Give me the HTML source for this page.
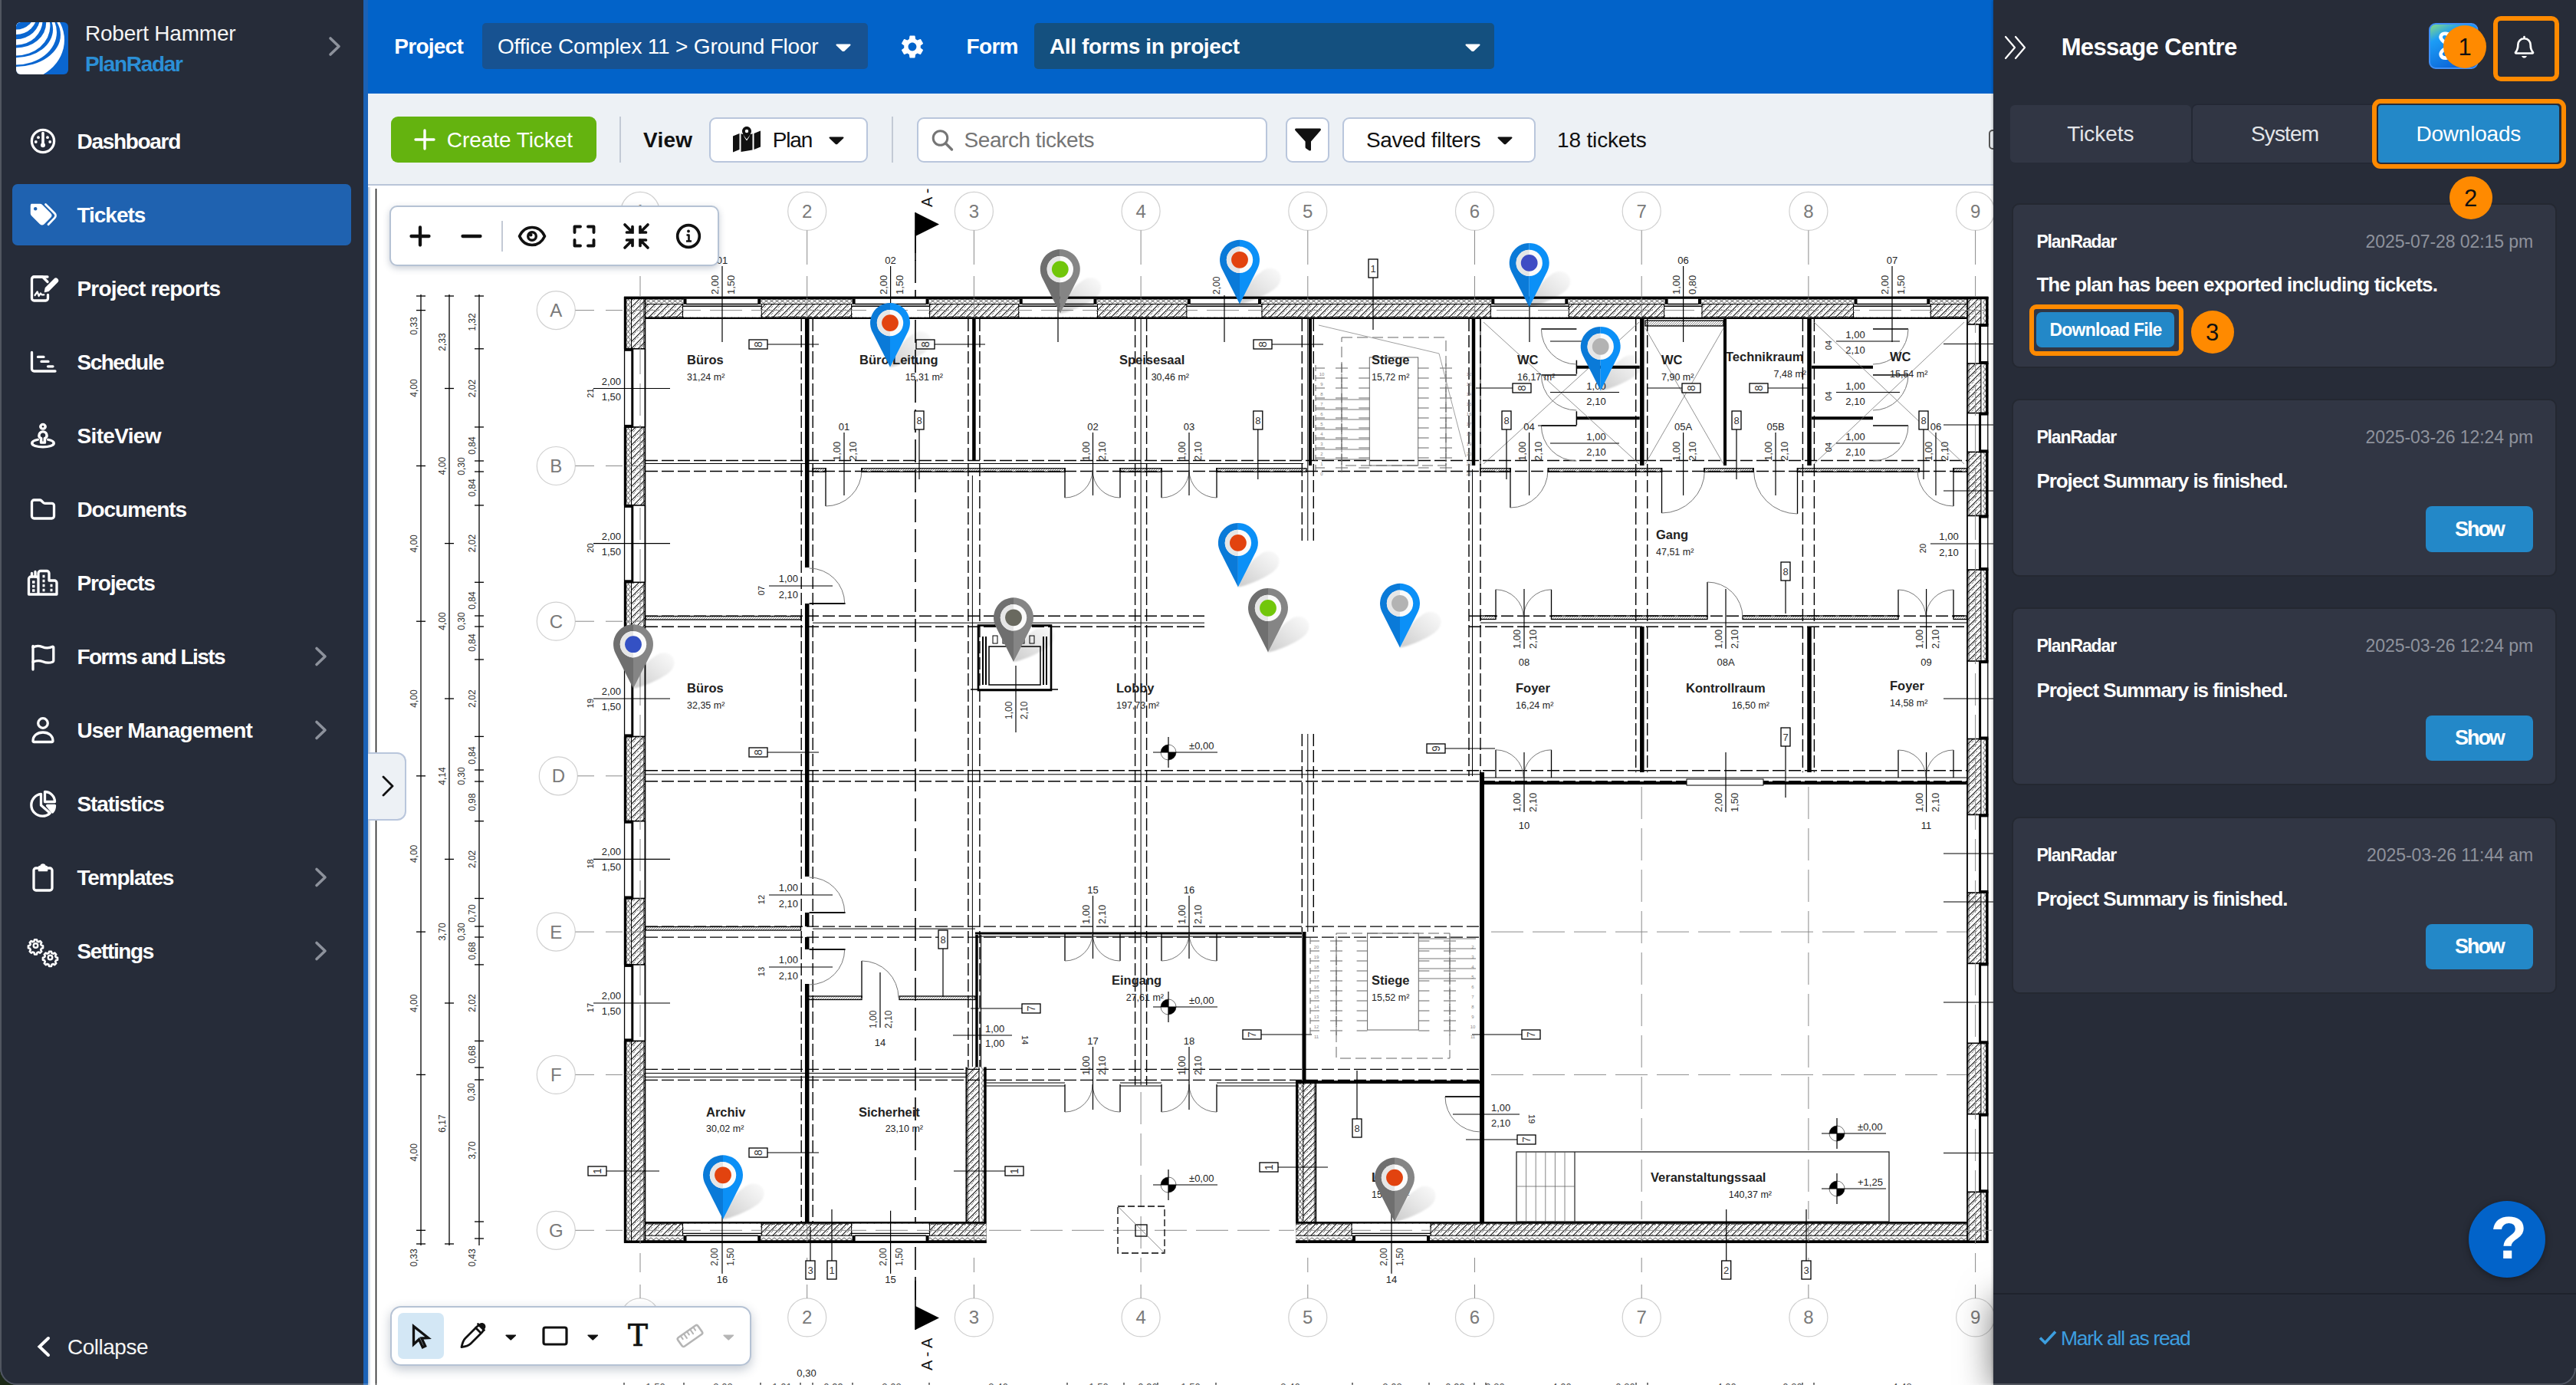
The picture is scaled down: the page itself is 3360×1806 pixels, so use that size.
<!DOCTYPE html><html><head><meta charset="utf-8"><title>PlanRadar</title><style>
html,body{margin:0;padding:0}
body{width:3360px;height:1806px;overflow:hidden;position:relative;background:#fff;font-family:"Liberation Sans",Arial,sans-serif}
.a{position:absolute;box-sizing:border-box}
.t{position:absolute;white-space:nowrap;font-family:"Liberation Sans",Arial,sans-serif}
#sb{position:absolute;left:0;top:0;width:474px;height:1806px;background:#262c39}
#sbstrip{position:absolute;left:474px;top:0;width:6px;height:1806px;background:#1b62b6}
#pn{position:absolute;left:2600px;top:0;width:760px;height:1806px;background:#272c38;box-shadow:-1px 0 3px rgba(0,0,0,.25)}
.box{background:#fff;border:2px solid #b9c6dc;border-radius:9px}
.card{background:#313644;border:2px solid #242831;border-radius:10px}
.oc{width:56px;height:56px;border-radius:50%;background:#ff8a00;color:#111;font-size:31px;line-height:57px;text-align:center}
.tb{background:#fff;border:2px solid #b5c2d4;border-radius:10px;box-shadow:0 3px 8px rgba(40,60,90,.25)}
</style></head><body>
<svg class="a" style="left:480px;top:244px" width="2120" height="1562" viewBox="480 244 2120 1562"><defs>
<pattern id="hz" width="9" height="9" patternUnits="userSpaceOnUse"><path d="M-1 10L10 -1M-1 1L1 -1M8 10L10 8" stroke="#111" stroke-width="1.100"/><path d="M2.200 10L10 2.200M-1 3.200L3.200 -1" stroke="#444" stroke-width="0.850" stroke-dasharray="4 2.364"/></pattern>
<pattern id="th" width="3" height="3" patternUnits="userSpaceOnUse"><path d="M0 3L3 0" stroke="#555" stroke-width="0.700"/></pattern>
<filter id="bl" x="-50%" y="-50%" width="200%" height="200%"><feGaussianBlur stdDeviation="1.300"/></filter>
<linearGradient id="shg" x1="0" y1="1" x2="1" y2="0"><stop offset="0" stop-color="#000" stop-opacity="0.200"/><stop offset="0.550" stop-color="#000" stop-opacity="0.090"/><stop offset="1" stop-color="#000" stop-opacity="0.015"/></linearGradient>
</defs>
<rect x="480" y="244" width="2120" height="1562" fill="#fff"/>
<g font-family="'Liberation Sans',Arial,sans-serif" fill="none">
<circle cx="835.0" cy="275.4" r="25" fill="#fff" stroke="#d0d0d0" stroke-width="1.200"/>
<text x="835.0" y="283.9" font-size="24" text-anchor="middle" fill="#7a7a7a">1</text>
<circle cx="835.0" cy="1717.9" r="25" fill="#fff" stroke="#d0d0d0" stroke-width="1.200"/>
<text x="835.0" y="1726.4" font-size="24" text-anchor="middle" fill="#7a7a7a">1</text>
<path d="M835.0 300.5L835.0 345.0" stroke="#8a8a8a" stroke-width="1"/>
<path d="M835.0 360.0L835.0 386.0" stroke="#8a8a8a" stroke-width="1"/>
<path d="M835.0 1640.0L835.0 1659.0" stroke="#8a8a8a" stroke-width="1"/>
<path d="M835.0 1675.0L835.0 1693.0" stroke="#8a8a8a" stroke-width="1"/>
<circle cx="1052.7" cy="275.4" r="25" fill="#fff" stroke="#d0d0d0" stroke-width="1.200"/>
<text x="1052.7" y="283.9" font-size="24" text-anchor="middle" fill="#7a7a7a">2</text>
<circle cx="1052.7" cy="1717.9" r="25" fill="#fff" stroke="#d0d0d0" stroke-width="1.200"/>
<text x="1052.7" y="1726.4" font-size="24" text-anchor="middle" fill="#7a7a7a">2</text>
<path d="M1052.7 300.5L1052.7 345.0" stroke="#8a8a8a" stroke-width="1"/>
<path d="M1052.7 360.0L1052.7 386.0" stroke="#8a8a8a" stroke-width="1"/>
<path d="M1052.7 1640.0L1052.7 1659.0" stroke="#8a8a8a" stroke-width="1"/>
<path d="M1052.7 1675.0L1052.7 1693.0" stroke="#8a8a8a" stroke-width="1"/>
<circle cx="1270.4" cy="275.4" r="25" fill="#fff" stroke="#d0d0d0" stroke-width="1.200"/>
<text x="1270.4" y="283.9" font-size="24" text-anchor="middle" fill="#7a7a7a">3</text>
<circle cx="1270.4" cy="1717.9" r="25" fill="#fff" stroke="#d0d0d0" stroke-width="1.200"/>
<text x="1270.4" y="1726.4" font-size="24" text-anchor="middle" fill="#7a7a7a">3</text>
<path d="M1270.4 300.5L1270.4 345.0" stroke="#8a8a8a" stroke-width="1"/>
<path d="M1270.4 360.0L1270.4 386.0" stroke="#8a8a8a" stroke-width="1"/>
<path d="M1270.4 1640.0L1270.4 1659.0" stroke="#8a8a8a" stroke-width="1"/>
<path d="M1270.4 1675.0L1270.4 1693.0" stroke="#8a8a8a" stroke-width="1"/>
<circle cx="1488.1" cy="275.4" r="25" fill="#fff" stroke="#d0d0d0" stroke-width="1.200"/>
<text x="1488.1" y="283.9" font-size="24" text-anchor="middle" fill="#7a7a7a">4</text>
<circle cx="1488.1" cy="1717.9" r="25" fill="#fff" stroke="#d0d0d0" stroke-width="1.200"/>
<text x="1488.1" y="1726.4" font-size="24" text-anchor="middle" fill="#7a7a7a">4</text>
<path d="M1488.1 300.5L1488.1 345.0" stroke="#8a8a8a" stroke-width="1"/>
<path d="M1488.1 360.0L1488.1 386.0" stroke="#8a8a8a" stroke-width="1"/>
<path d="M1488.1 1640.0L1488.1 1659.0" stroke="#8a8a8a" stroke-width="1"/>
<path d="M1488.1 1675.0L1488.1 1693.0" stroke="#8a8a8a" stroke-width="1"/>
<circle cx="1705.8" cy="275.4" r="25" fill="#fff" stroke="#d0d0d0" stroke-width="1.200"/>
<text x="1705.8" y="283.9" font-size="24" text-anchor="middle" fill="#7a7a7a">5</text>
<circle cx="1705.8" cy="1717.9" r="25" fill="#fff" stroke="#d0d0d0" stroke-width="1.200"/>
<text x="1705.8" y="1726.4" font-size="24" text-anchor="middle" fill="#7a7a7a">5</text>
<path d="M1705.8 300.5L1705.8 345.0" stroke="#8a8a8a" stroke-width="1"/>
<path d="M1705.8 360.0L1705.8 386.0" stroke="#8a8a8a" stroke-width="1"/>
<path d="M1705.8 1640.0L1705.8 1659.0" stroke="#8a8a8a" stroke-width="1"/>
<path d="M1705.8 1675.0L1705.8 1693.0" stroke="#8a8a8a" stroke-width="1"/>
<circle cx="1923.5" cy="275.4" r="25" fill="#fff" stroke="#d0d0d0" stroke-width="1.200"/>
<text x="1923.5" y="283.9" font-size="24" text-anchor="middle" fill="#7a7a7a">6</text>
<circle cx="1923.5" cy="1717.9" r="25" fill="#fff" stroke="#d0d0d0" stroke-width="1.200"/>
<text x="1923.5" y="1726.4" font-size="24" text-anchor="middle" fill="#7a7a7a">6</text>
<path d="M1923.5 300.5L1923.5 345.0" stroke="#8a8a8a" stroke-width="1"/>
<path d="M1923.5 360.0L1923.5 386.0" stroke="#8a8a8a" stroke-width="1"/>
<path d="M1923.5 1640.0L1923.5 1659.0" stroke="#8a8a8a" stroke-width="1"/>
<path d="M1923.5 1675.0L1923.5 1693.0" stroke="#8a8a8a" stroke-width="1"/>
<circle cx="2141.2" cy="275.4" r="25" fill="#fff" stroke="#d0d0d0" stroke-width="1.200"/>
<text x="2141.2" y="283.9" font-size="24" text-anchor="middle" fill="#7a7a7a">7</text>
<circle cx="2141.2" cy="1717.9" r="25" fill="#fff" stroke="#d0d0d0" stroke-width="1.200"/>
<text x="2141.2" y="1726.4" font-size="24" text-anchor="middle" fill="#7a7a7a">7</text>
<path d="M2141.2 300.5L2141.2 345.0" stroke="#8a8a8a" stroke-width="1"/>
<path d="M2141.2 360.0L2141.2 386.0" stroke="#8a8a8a" stroke-width="1"/>
<path d="M2141.2 1640.0L2141.2 1659.0" stroke="#8a8a8a" stroke-width="1"/>
<path d="M2141.2 1675.0L2141.2 1693.0" stroke="#8a8a8a" stroke-width="1"/>
<circle cx="2358.9" cy="275.4" r="25" fill="#fff" stroke="#d0d0d0" stroke-width="1.200"/>
<text x="2358.9" y="283.9" font-size="24" text-anchor="middle" fill="#7a7a7a">8</text>
<circle cx="2358.9" cy="1717.9" r="25" fill="#fff" stroke="#d0d0d0" stroke-width="1.200"/>
<text x="2358.9" y="1726.4" font-size="24" text-anchor="middle" fill="#7a7a7a">8</text>
<path d="M2358.9 300.5L2358.9 345.0" stroke="#8a8a8a" stroke-width="1"/>
<path d="M2358.9 360.0L2358.9 386.0" stroke="#8a8a8a" stroke-width="1"/>
<path d="M2358.9 1640.0L2358.9 1659.0" stroke="#8a8a8a" stroke-width="1"/>
<path d="M2358.9 1675.0L2358.9 1693.0" stroke="#8a8a8a" stroke-width="1"/>
<circle cx="2576.6" cy="275.4" r="25" fill="#fff" stroke="#d0d0d0" stroke-width="1.200"/>
<text x="2576.6" y="283.9" font-size="24" text-anchor="middle" fill="#7a7a7a">9</text>
<circle cx="2576.6" cy="1717.9" r="25" fill="#fff" stroke="#d0d0d0" stroke-width="1.200"/>
<text x="2576.6" y="1726.4" font-size="24" text-anchor="middle" fill="#7a7a7a">9</text>
<path d="M2576.6 300.5L2576.6 345.0" stroke="#8a8a8a" stroke-width="1"/>
<path d="M2576.6 360.0L2576.6 386.0" stroke="#8a8a8a" stroke-width="1"/>
<path d="M2576.6 1640.0L2576.6 1659.0" stroke="#8a8a8a" stroke-width="1"/>
<path d="M2576.6 1675.0L2576.6 1693.0" stroke="#8a8a8a" stroke-width="1"/>
<circle cx="725.3" cy="404.6" r="25" fill="#fff" stroke="#d0d0d0" stroke-width="1.200"/>
<text x="725.3" y="413.1" font-size="24" text-anchor="middle" fill="#7a7a7a">A</text>
<path d="M750.5 404.6L775.0 404.6" stroke="#8a8a8a" stroke-width="1"/>
<path d="M790.0 404.6L812.0 404.6" stroke="#8a8a8a" stroke-width="1"/>
<circle cx="725.3" cy="607.5" r="25" fill="#fff" stroke="#d0d0d0" stroke-width="1.200"/>
<text x="725.3" y="616.0" font-size="24" text-anchor="middle" fill="#7a7a7a">B</text>
<path d="M750.5 607.5L775.0 607.5" stroke="#8a8a8a" stroke-width="1"/>
<path d="M790.0 607.5L812.0 607.5" stroke="#8a8a8a" stroke-width="1"/>
<circle cx="725.3" cy="810.2" r="25" fill="#fff" stroke="#d0d0d0" stroke-width="1.200"/>
<text x="725.3" y="818.7" font-size="24" text-anchor="middle" fill="#7a7a7a">C</text>
<path d="M750.5 810.2L775.0 810.2" stroke="#8a8a8a" stroke-width="1"/>
<path d="M790.0 810.2L812.0 810.2" stroke="#8a8a8a" stroke-width="1"/>
<circle cx="728.3" cy="1011.8" r="25" fill="#fff" stroke="#d0d0d0" stroke-width="1.200"/>
<text x="728.3" y="1020.3" font-size="24" text-anchor="middle" fill="#7a7a7a">D</text>
<path d="M753.5 1011.8L775.0 1011.8" stroke="#8a8a8a" stroke-width="1"/>
<path d="M790.0 1011.8L812.0 1011.8" stroke="#8a8a8a" stroke-width="1"/>
<circle cx="725.3" cy="1215.1" r="25" fill="#fff" stroke="#d0d0d0" stroke-width="1.200"/>
<text x="725.3" y="1223.6" font-size="24" text-anchor="middle" fill="#7a7a7a">E</text>
<path d="M750.5 1215.1L775.0 1215.1" stroke="#8a8a8a" stroke-width="1"/>
<path d="M790.0 1215.1L812.0 1215.1" stroke="#8a8a8a" stroke-width="1"/>
<circle cx="725.3" cy="1401.4" r="25" fill="#fff" stroke="#d0d0d0" stroke-width="1.200"/>
<text x="725.3" y="1409.9" font-size="24" text-anchor="middle" fill="#7a7a7a">F</text>
<path d="M750.5 1401.4L775.0 1401.4" stroke="#8a8a8a" stroke-width="1"/>
<path d="M790.0 1401.4L812.0 1401.4" stroke="#8a8a8a" stroke-width="1"/>
<circle cx="725.3" cy="1604.3" r="25" fill="#fff" stroke="#d0d0d0" stroke-width="1.200"/>
<text x="725.3" y="1612.8" font-size="24" text-anchor="middle" fill="#7a7a7a">G</text>
<path d="M750.5 1604.3L775.0 1604.3" stroke="#8a8a8a" stroke-width="1"/>
<path d="M790.0 1604.3L812.0 1604.3" stroke="#8a8a8a" stroke-width="1"/>
<path d="M1488.1 1424.0L1488.1 1640.0" stroke="#8a8a8a" stroke-width="1" stroke-dasharray="42 12"/>
<path d="M2141.2 1026.0L2141.2 1590.0" stroke="#8a8a8a" stroke-width="1" stroke-dasharray="42 12"/>
<path d="M2358.9 1026.0L2358.9 1590.0" stroke="#8a8a8a" stroke-width="1" stroke-dasharray="42 12"/>
<path d="M1945.0 1215.1L2565.4 1215.1" stroke="#8a8a8a" stroke-width="1" stroke-dasharray="42 12"/>
<path d="M1945.0 1401.4L2565.4 1401.4" stroke="#8a8a8a" stroke-width="1" stroke-dasharray="42 12"/>
<path d="M1290.0 1604.3L1688.0 1604.3" stroke="#8a8a8a" stroke-width="1" stroke-dasharray="42 12"/>
<path d="M1194.0 300.0L1194.0 1700.0" stroke="#000" stroke-width="1.6" stroke-dasharray="30 9"/>
<path d="M1194 277L1225 292.500L1194 308Z" fill="#000"/>
<path d="M1194.0 277.0L1194.0 340.0" stroke="#000" stroke-width="1.6"/>
<path d="M1194 1703L1225 1718.500L1194 1734Z" fill="#000"/>
<path d="M1194.0 1670.0L1194.0 1734.0" stroke="#000" stroke-width="1.6"/>
<text x="1216.0" y="270.0" font-size="20" text-anchor="start" fill="#111" transform="rotate(-90 1216.0 270.0)">A - A</text>
<text x="1216.0" y="1787.0" font-size="20" text-anchor="start" fill="#111" transform="rotate(-90 1216.0 1787.0)">A - A</text>
<rect x="1259.8" y="1391.5" width="26.7" height="229.2" fill="#fff"/>
<rect x="1259.8" y="1391.5" width="17.2" height="229.2" fill="url(#hz)"/>
<pattern id="xv118" x="1277.0" y="1391.5" width="9.500" height="14" patternUnits="userSpaceOnUse"><path d="M8.300 0L2.700 7L8.300 14M2.700 0L8.300 7L2.700 14" fill="none" stroke="#3a3a3a" stroke-width="0.900"/></pattern>
<rect x="1277.0" y="1391.5" width="9.5" height="229.2" fill="url(#xv118)"/>
<path d="M1285.0 1391.5L1285.0 1620.7" stroke="#000" stroke-width="3.4"/>
<path d="M1277.0 1391.5L1277.0 1620.7" stroke="#000" stroke-width="1.1"/>
<path d="M1262.4 1391.5L1262.4 1620.7" stroke="#333" stroke-width="0.8"/>
<path d="M1260.4 1391.5L1260.4 1620.7" stroke="#000" stroke-width="1.8"/>
<rect x="1690.2" y="1409.0" width="26.7" height="211.7" fill="#fff"/>
<rect x="1699.7" y="1409.0" width="17.2" height="211.7" fill="url(#hz)"/>
<pattern id="xv126" x="1690.2" y="1409.0" width="9.500" height="14" patternUnits="userSpaceOnUse"><path d="M8.300 0L2.700 7L8.300 14M2.700 0L8.300 7L2.700 14" fill="none" stroke="#3a3a3a" stroke-width="0.900"/></pattern>
<rect x="1690.2" y="1409.0" width="9.5" height="211.7" fill="url(#xv126)"/>
<path d="M1691.7 1409.0L1691.7 1620.7" stroke="#000" stroke-width="3.4"/>
<path d="M1699.7 1409.0L1699.7 1620.7" stroke="#000" stroke-width="1.1"/>
<path d="M1714.3 1409.0L1714.3 1620.7" stroke="#333" stroke-width="0.8"/>
<path d="M1716.3 1409.0L1716.3 1620.7" stroke="#000" stroke-width="1.8"/>
<rect x="814.0" y="387.0" width="1779.4" height="29.0" fill="#fff"/>
<rect x="814.0" y="396.5" width="1779.4" height="19.5" fill="url(#hz)"/>
<pattern id="xh134" x="814.0" y="387.0" width="14" height="9.500" patternUnits="userSpaceOnUse"><path d="M0 8.300L7 2.700L14 8.300M0 2.700L7 8.300L14 2.700" fill="none" stroke="#3a3a3a" stroke-width="0.900"/></pattern>
<rect x="814.0" y="387.0" width="1779.4" height="9.5" fill="url(#xh134)"/>
<path d="M814.0 388.5L2593.4 388.5" stroke="#000" stroke-width="3.4"/>
<path d="M814.0 396.5L2593.4 396.5" stroke="#000" stroke-width="1.1"/>
<path d="M814.0 412.8L2593.4 412.8" stroke="#333" stroke-width="0.8" stroke-dasharray="5 3"/>
<path d="M814.0 414.8L2593.4 414.8" stroke="#000" stroke-width="2.6"/>
<rect x="814.0" y="1593.2" width="472.5" height="27.5" fill="#fff"/>
<rect x="814.0" y="1593.2" width="472.5" height="18.0" fill="url(#hz)"/>
<pattern id="xh142" x="814.0" y="1611.2" width="14" height="9.500" patternUnits="userSpaceOnUse"><path d="M0 8.300L7 2.700L14 8.300M0 2.700L7 8.300L14 2.700" fill="none" stroke="#3a3a3a" stroke-width="0.900"/></pattern>
<rect x="814.0" y="1611.2" width="472.5" height="9.5" fill="url(#xh142)"/>
<path d="M814.0 1619.2L1286.5 1619.2" stroke="#000" stroke-width="3.4"/>
<path d="M814.0 1611.2L1286.5 1611.2" stroke="#000" stroke-width="1.1"/>
<path d="M814.0 1596.4L1286.5 1596.4" stroke="#333" stroke-width="0.8" stroke-dasharray="5 3"/>
<path d="M814.0 1594.4L1286.5 1594.4" stroke="#000" stroke-width="2.6"/>
<rect x="1690.2" y="1593.2" width="903.2" height="27.5" fill="#fff"/>
<rect x="1690.2" y="1593.2" width="903.2" height="18.0" fill="url(#hz)"/>
<pattern id="xh150" x="1690.2" y="1611.2" width="14" height="9.500" patternUnits="userSpaceOnUse"><path d="M0 8.300L7 2.700L14 8.300M0 2.700L7 8.300L14 2.700" fill="none" stroke="#3a3a3a" stroke-width="0.900"/></pattern>
<rect x="1690.2" y="1611.2" width="903.2" height="9.5" fill="url(#xh150)"/>
<path d="M1690.2 1619.2L2593.4 1619.2" stroke="#000" stroke-width="3.4"/>
<path d="M1690.2 1611.2L2593.4 1611.2" stroke="#000" stroke-width="1.1"/>
<path d="M1690.2 1596.4L2593.4 1596.4" stroke="#333" stroke-width="0.8" stroke-dasharray="5 3"/>
<path d="M1690.2 1594.4L2593.4 1594.4" stroke="#000" stroke-width="2.6"/>
<rect x="814.0" y="387.0" width="28.0" height="1233.7" fill="#fff"/>
<rect x="823.5" y="387.0" width="18.5" height="1233.7" fill="url(#hz)"/>
<pattern id="xv158" x="814.0" y="387.0" width="9.500" height="14" patternUnits="userSpaceOnUse"><path d="M8.300 0L2.700 7L8.300 14M2.700 0L8.300 7L2.700 14" fill="none" stroke="#3a3a3a" stroke-width="0.900"/></pattern>
<rect x="814.0" y="387.0" width="9.5" height="1233.7" fill="url(#xv158)"/>
<path d="M815.5 387.0L815.5 1620.7" stroke="#000" stroke-width="3.4"/>
<path d="M823.5 387.0L823.5 1620.7" stroke="#000" stroke-width="1.1"/>
<path d="M839.4 387.0L839.4 1620.7" stroke="#333" stroke-width="0.8"/>
<path d="M841.4 387.0L841.4 1620.7" stroke="#000" stroke-width="1.8"/>
<rect x="2565.4" y="387.0" width="28.0" height="1233.7" fill="#fff"/>
<rect x="2565.4" y="387.0" width="18.5" height="1233.7" fill="url(#hz)"/>
<pattern id="xv166" x="2583.9" y="387.0" width="9.500" height="14" patternUnits="userSpaceOnUse"><path d="M8.300 0L2.700 7L8.300 14M2.700 0L8.300 7L2.700 14" fill="none" stroke="#3a3a3a" stroke-width="0.900"/></pattern>
<rect x="2583.9" y="387.0" width="9.5" height="1233.7" fill="url(#xv166)"/>
<path d="M2591.9 387.0L2591.9 1620.7" stroke="#000" stroke-width="3.4"/>
<path d="M2583.9 387.0L2583.9 1620.7" stroke="#000" stroke-width="1.1"/>
<path d="M2568.0 387.0L2568.0 1620.7" stroke="#333" stroke-width="0.8"/>
<path d="M2566.0 387.0L2566.0 1620.7" stroke="#000" stroke-width="1.8"/>
<path d="M814.0 1619.2L1286.5 1619.2" stroke="#000" stroke-width="3.4"/>
<path d="M1690.2 1619.2L2593.4 1619.2" stroke="#000" stroke-width="3.4"/>
<path d="M814.0 388.5L2593.4 388.5" stroke="#000" stroke-width="3.4"/>
<rect x="891.5" y="389.8" width="100.8" height="23.7" fill="#fff"/>
<path d="M895.0 396.4L988.8 396.4" stroke="#000" stroke-width="1.5"/>
<path d="M890.5 399.3L993.3 399.3" stroke="#000" stroke-width="1.4"/>
<path d="M890.5 396.5L890.5 414.0" stroke="#000" stroke-width="1"/>
<path d="M993.3 396.5L993.3 414.0" stroke="#000" stroke-width="1"/>
<rect x="891.5" y="389.5" width="4" height="7.3" fill="#000"/>
<rect x="988.3" y="389.5" width="4" height="7.3" fill="#000"/>
<rect x="1111.6" y="389.8" width="100.0" height="23.7" fill="#fff"/>
<path d="M1115.1 396.4L1208.1 396.4" stroke="#000" stroke-width="1.5"/>
<path d="M1110.6 399.3L1212.6 399.3" stroke="#000" stroke-width="1.4"/>
<path d="M1110.6 396.5L1110.6 414.0" stroke="#000" stroke-width="1"/>
<path d="M1212.6 396.5L1212.6 414.0" stroke="#000" stroke-width="1"/>
<rect x="1111.6" y="389.5" width="4" height="7.3" fill="#000"/>
<rect x="1207.6" y="389.5" width="4" height="7.3" fill="#000"/>
<rect x="1329.7" y="389.8" width="100.8" height="23.7" fill="#fff"/>
<path d="M1333.2 396.4L1427.0 396.4" stroke="#000" stroke-width="1.5"/>
<path d="M1328.7 399.3L1431.5 399.3" stroke="#000" stroke-width="1.4"/>
<path d="M1328.7 396.5L1328.7 414.0" stroke="#000" stroke-width="1"/>
<path d="M1431.5 396.5L1431.5 414.0" stroke="#000" stroke-width="1"/>
<rect x="1329.7" y="389.5" width="4" height="7.3" fill="#000"/>
<rect x="1426.5" y="389.5" width="4" height="7.3" fill="#000"/>
<rect x="1548.8" y="389.8" width="96.2" height="23.7" fill="#fff"/>
<path d="M1552.3 396.4L1641.5 396.4" stroke="#000" stroke-width="1.5"/>
<path d="M1547.8 399.3L1646.0 399.3" stroke="#000" stroke-width="1.4"/>
<path d="M1547.8 396.5L1547.8 414.0" stroke="#000" stroke-width="1"/>
<path d="M1646.0 396.5L1646.0 414.0" stroke="#000" stroke-width="1"/>
<rect x="1548.8" y="389.5" width="4" height="7.3" fill="#000"/>
<rect x="1641.0" y="389.5" width="4" height="7.3" fill="#000"/>
<rect x="1945.3" y="389.8" width="100.0" height="23.7" fill="#fff"/>
<path d="M1948.8 396.4L2041.8 396.4" stroke="#000" stroke-width="1.5"/>
<path d="M1944.3 399.3L2046.3 399.3" stroke="#000" stroke-width="1.4"/>
<path d="M1944.3 396.5L1944.3 414.0" stroke="#000" stroke-width="1"/>
<path d="M2046.3 396.5L2046.3 414.0" stroke="#000" stroke-width="1"/>
<rect x="1945.3" y="389.5" width="4" height="7.3" fill="#000"/>
<rect x="2041.3" y="389.5" width="4" height="7.3" fill="#000"/>
<rect x="2171.6" y="389.8" width="47.4" height="23.7" fill="#fff"/>
<path d="M2175.1 396.4L2215.5 396.4" stroke="#000" stroke-width="1.5"/>
<path d="M2170.6 399.3L2220.0 399.3" stroke="#000" stroke-width="1.4"/>
<path d="M2170.6 396.5L2170.6 414.0" stroke="#000" stroke-width="1"/>
<path d="M2220.0 396.5L2220.0 414.0" stroke="#000" stroke-width="1"/>
<rect x="2171.6" y="389.5" width="4" height="7.3" fill="#000"/>
<rect x="2215.0" y="389.5" width="4" height="7.3" fill="#000"/>
<rect x="2418.5" y="389.8" width="98.8" height="23.7" fill="#fff"/>
<path d="M2422.0 396.4L2513.8 396.4" stroke="#000" stroke-width="1.5"/>
<path d="M2417.5 399.3L2518.3 399.3" stroke="#000" stroke-width="1.4"/>
<path d="M2417.5 396.5L2417.5 414.0" stroke="#000" stroke-width="1"/>
<path d="M2518.3 396.5L2518.3 414.0" stroke="#000" stroke-width="1"/>
<rect x="2418.5" y="389.5" width="4" height="7.3" fill="#000"/>
<rect x="2513.3" y="389.5" width="4" height="7.3" fill="#000"/>
<rect x="813.5" y="454.8" width="29.0" height="102.1" fill="#fff"/>
<path d="M814.6 454.8L814.6 556.9" stroke="#000" stroke-width="1.2"/>
<path d="M824.8 453.8L824.8 557.9" stroke="#000" stroke-width="3"/>
<path d="M841.4 454.8L841.4 556.9" stroke="#000" stroke-width="1.8"/>
<path d="M814.0 454.8L842.0 454.8" stroke="#000" stroke-width="1.6"/>
<path d="M814.0 556.9L842.0 556.9" stroke="#000" stroke-width="1.6"/>
<rect x="814.0" y="453.8" width="10.8" height="4" fill="#000"/>
<rect x="814.0" y="553.9" width="10.8" height="4" fill="#000"/>
<rect x="813.5" y="658.9" width="29.0" height="100.4" fill="#fff"/>
<path d="M814.6 658.9L814.6 759.3" stroke="#000" stroke-width="1.2"/>
<path d="M824.8 657.9L824.8 760.3" stroke="#000" stroke-width="3"/>
<path d="M841.4 658.9L841.4 759.3" stroke="#000" stroke-width="1.8"/>
<path d="M814.0 658.9L842.0 658.9" stroke="#000" stroke-width="1.6"/>
<path d="M814.0 759.3L842.0 759.3" stroke="#000" stroke-width="1.6"/>
<rect x="814.0" y="657.9" width="10.8" height="4" fill="#000"/>
<rect x="814.0" y="756.3" width="10.8" height="4" fill="#000"/>
<rect x="813.5" y="860.0" width="29.0" height="100.4" fill="#fff"/>
<path d="M814.6 860.0L814.6 960.4" stroke="#000" stroke-width="1.2"/>
<path d="M824.8 859.0L824.8 961.4" stroke="#000" stroke-width="3"/>
<path d="M841.4 860.0L841.4 960.4" stroke="#000" stroke-width="1.8"/>
<path d="M814.0 860.0L842.0 860.0" stroke="#000" stroke-width="1.6"/>
<path d="M814.0 960.4L842.0 960.4" stroke="#000" stroke-width="1.6"/>
<rect x="814.0" y="859.0" width="10.8" height="4" fill="#000"/>
<rect x="814.0" y="957.4" width="10.8" height="4" fill="#000"/>
<rect x="813.5" y="1070.7" width="29.0" height="100.8" fill="#fff"/>
<path d="M814.6 1070.7L814.6 1171.5" stroke="#000" stroke-width="1.2"/>
<path d="M824.8 1069.7L824.8 1172.5" stroke="#000" stroke-width="3"/>
<path d="M841.4 1070.7L841.4 1171.5" stroke="#000" stroke-width="1.8"/>
<path d="M814.0 1070.7L842.0 1070.7" stroke="#000" stroke-width="1.6"/>
<path d="M814.0 1171.5L842.0 1171.5" stroke="#000" stroke-width="1.6"/>
<rect x="814.0" y="1069.7" width="10.8" height="4" fill="#000"/>
<rect x="814.0" y="1168.5" width="10.8" height="4" fill="#000"/>
<rect x="813.5" y="1257.9" width="29.0" height="99.5" fill="#fff"/>
<path d="M814.6 1257.9L814.6 1357.4" stroke="#000" stroke-width="1.2"/>
<path d="M824.8 1256.9L824.8 1358.4" stroke="#000" stroke-width="3"/>
<path d="M841.4 1257.9L841.4 1357.4" stroke="#000" stroke-width="1.8"/>
<path d="M814.0 1257.9L842.0 1257.9" stroke="#000" stroke-width="1.6"/>
<path d="M814.0 1357.4L842.0 1357.4" stroke="#000" stroke-width="1.6"/>
<rect x="814.0" y="1256.9" width="10.8" height="4" fill="#000"/>
<rect x="814.0" y="1354.4" width="10.8" height="4" fill="#000"/>
<rect x="2564.9" y="423.0" width="29.0" height="51.0" fill="#fff"/>
<path d="M2592.8 423.0L2592.8 474.0" stroke="#000" stroke-width="1.2"/>
<path d="M2582.6 422.0L2582.6 475.0" stroke="#000" stroke-width="3"/>
<path d="M2566.0 423.0L2566.0 474.0" stroke="#000" stroke-width="1.8"/>
<path d="M2593.4 423.0L2565.4 423.0" stroke="#000" stroke-width="1.6"/>
<path d="M2593.4 474.0L2565.4 474.0" stroke="#000" stroke-width="1.6"/>
<rect x="2582.6" y="422.0" width="10.8" height="4" fill="#000"/>
<rect x="2582.6" y="471.0" width="10.8" height="4" fill="#000"/>
<rect x="2564.9" y="538.6" width="29.0" height="50.8" fill="#fff"/>
<path d="M2592.8 538.6L2592.8 589.4" stroke="#000" stroke-width="1.2"/>
<path d="M2582.6 537.6L2582.6 590.4" stroke="#000" stroke-width="3"/>
<path d="M2566.0 538.6L2566.0 589.4" stroke="#000" stroke-width="1.8"/>
<path d="M2593.4 538.6L2565.4 538.6" stroke="#000" stroke-width="1.6"/>
<path d="M2593.4 589.4L2565.4 589.4" stroke="#000" stroke-width="1.6"/>
<rect x="2582.6" y="537.6" width="10.8" height="4" fill="#000"/>
<rect x="2582.6" y="586.4" width="10.8" height="4" fill="#000"/>
<rect x="2564.9" y="672.5" width="29.0" height="70.5" fill="#fff"/>
<path d="M2592.8 672.5L2592.8 743.0" stroke="#000" stroke-width="1.2"/>
<path d="M2582.6 671.5L2582.6 744.0" stroke="#000" stroke-width="3"/>
<path d="M2566.0 672.5L2566.0 743.0" stroke="#000" stroke-width="1.8"/>
<path d="M2593.4 672.5L2565.4 672.5" stroke="#000" stroke-width="1.6"/>
<path d="M2593.4 743.0L2565.4 743.0" stroke="#000" stroke-width="1.6"/>
<rect x="2582.6" y="671.5" width="10.8" height="4" fill="#000"/>
<rect x="2582.6" y="740.0" width="10.8" height="4" fill="#000"/>
<rect x="2564.9" y="862.0" width="29.0" height="101.5" fill="#fff"/>
<path d="M2592.8 862.0L2592.8 963.5" stroke="#000" stroke-width="1.2"/>
<path d="M2582.6 861.0L2582.6 964.5" stroke="#000" stroke-width="3"/>
<path d="M2566.0 862.0L2566.0 963.5" stroke="#000" stroke-width="1.8"/>
<path d="M2593.4 862.0L2565.4 862.0" stroke="#000" stroke-width="1.6"/>
<path d="M2593.4 963.5L2565.4 963.5" stroke="#000" stroke-width="1.6"/>
<rect x="2582.6" y="861.0" width="10.8" height="4" fill="#000"/>
<rect x="2582.6" y="960.5" width="10.8" height="4" fill="#000"/>
<rect x="2564.9" y="1062.4" width="29.0" height="101.6" fill="#fff"/>
<path d="M2592.8 1062.4L2592.8 1164.0" stroke="#000" stroke-width="1.2"/>
<path d="M2582.6 1061.4L2582.6 1165.0" stroke="#000" stroke-width="3"/>
<path d="M2566.0 1062.4L2566.0 1164.0" stroke="#000" stroke-width="1.8"/>
<path d="M2593.4 1062.4L2565.4 1062.4" stroke="#000" stroke-width="1.6"/>
<path d="M2593.4 1164.0L2565.4 1164.0" stroke="#000" stroke-width="1.6"/>
<rect x="2582.6" y="1061.4" width="10.8" height="4" fill="#000"/>
<rect x="2582.6" y="1161.0" width="10.8" height="4" fill="#000"/>
<rect x="2564.9" y="1256.4" width="29.0" height="103.9" fill="#fff"/>
<path d="M2592.8 1256.4L2592.8 1360.3" stroke="#000" stroke-width="1.2"/>
<path d="M2582.6 1255.4L2582.6 1361.3" stroke="#000" stroke-width="3"/>
<path d="M2566.0 1256.4L2566.0 1360.3" stroke="#000" stroke-width="1.8"/>
<path d="M2593.4 1256.4L2565.4 1256.4" stroke="#000" stroke-width="1.6"/>
<path d="M2593.4 1360.3L2565.4 1360.3" stroke="#000" stroke-width="1.6"/>
<rect x="2582.6" y="1255.4" width="10.8" height="4" fill="#000"/>
<rect x="2582.6" y="1357.3" width="10.8" height="4" fill="#000"/>
<rect x="2564.9" y="1452.7" width="29.0" height="101.6" fill="#fff"/>
<path d="M2592.8 1452.7L2592.8 1554.3" stroke="#000" stroke-width="1.2"/>
<path d="M2582.6 1451.7L2582.6 1555.3" stroke="#000" stroke-width="3"/>
<path d="M2566.0 1452.7L2566.0 1554.3" stroke="#000" stroke-width="1.8"/>
<path d="M2593.4 1452.7L2565.4 1452.7" stroke="#000" stroke-width="1.6"/>
<path d="M2593.4 1554.3L2565.4 1554.3" stroke="#000" stroke-width="1.6"/>
<rect x="2582.6" y="1451.7" width="10.8" height="4" fill="#000"/>
<rect x="2582.6" y="1551.3" width="10.8" height="4" fill="#000"/>
<rect x="891.5" y="1595.7" width="100.8" height="22.2" fill="#fff"/>
<path d="M895.0 1611.3L988.8 1611.3" stroke="#000" stroke-width="1.5"/>
<path d="M890.5 1608.4L993.3 1608.4" stroke="#000" stroke-width="1.4"/>
<path d="M890.5 1611.2L890.5 1595.2" stroke="#000" stroke-width="1"/>
<path d="M993.3 1611.2L993.3 1595.2" stroke="#000" stroke-width="1"/>
<rect x="891.5" y="1610.9" width="4" height="7.3" fill="#000"/>
<rect x="988.3" y="1610.9" width="4" height="7.3" fill="#000"/>
<rect x="1111.6" y="1595.7" width="100.0" height="22.2" fill="#fff"/>
<path d="M1115.1 1611.3L1208.1 1611.3" stroke="#000" stroke-width="1.5"/>
<path d="M1110.6 1608.4L1212.6 1608.4" stroke="#000" stroke-width="1.4"/>
<path d="M1110.6 1611.2L1110.6 1595.2" stroke="#000" stroke-width="1"/>
<path d="M1212.6 1611.2L1212.6 1595.2" stroke="#000" stroke-width="1"/>
<rect x="1111.6" y="1610.9" width="4" height="7.3" fill="#000"/>
<rect x="1207.6" y="1610.9" width="4" height="7.3" fill="#000"/>
<rect x="1764.0" y="1595.7" width="101.0" height="22.2" fill="#fff"/>
<path d="M1767.5 1611.3L1861.5 1611.3" stroke="#000" stroke-width="1.5"/>
<path d="M1763.0 1608.4L1866.0 1608.4" stroke="#000" stroke-width="1.4"/>
<path d="M1763.0 1611.2L1763.0 1595.2" stroke="#000" stroke-width="1"/>
<path d="M1866.0 1611.2L1866.0 1595.2" stroke="#000" stroke-width="1"/>
<rect x="1764.0" y="1610.9" width="4" height="7.3" fill="#000"/>
<rect x="1861.0" y="1610.9" width="4" height="7.3" fill="#000"/>
<path d="M835.0 392.0L835.0 1640.0" stroke="#8a8a8a" stroke-width="1" stroke-dasharray="42 12"/>
<path d="M2576.6 392.0L2576.6 1640.0" stroke="#8a8a8a" stroke-width="1" stroke-dasharray="42 12"/>
<path d="M818.0 404.6L2600.0 404.6" stroke="#8a8a8a" stroke-width="1" stroke-dasharray="42 12"/>
<path d="M818.0 1604.3L1286.0 1604.3" stroke="#8a8a8a" stroke-width="1" stroke-dasharray="42 12"/>
<path d="M1692.0 1604.3L2600.0 1604.3" stroke="#8a8a8a" stroke-width="1" stroke-dasharray="42 12"/>
<path d="M1052.7 388.0L1052.7 414.0" stroke="#8a8a8a" stroke-width="1"/>
<path d="M1270.4 388.0L1270.4 414.0" stroke="#8a8a8a" stroke-width="1"/>
<path d="M1488.1 388.0L1488.1 414.0" stroke="#8a8a8a" stroke-width="1"/>
<path d="M1705.8 388.0L1705.8 414.0" stroke="#8a8a8a" stroke-width="1"/>
<path d="M1923.5 388.0L1923.5 414.0" stroke="#8a8a8a" stroke-width="1"/>
<path d="M2141.2 388.0L2141.2 414.0" stroke="#8a8a8a" stroke-width="1"/>
<path d="M2358.9 388.0L2358.9 414.0" stroke="#8a8a8a" stroke-width="1"/>
<path d="M1052.7 1596.0L1052.7 1619.0" stroke="#8a8a8a" stroke-width="1"/>
<path d="M1270.4 1596.0L1270.4 1619.0" stroke="#8a8a8a" stroke-width="1"/>
<path d="M1705.8 1596.0L1705.8 1619.0" stroke="#8a8a8a" stroke-width="1"/>
<path d="M1923.5 1596.0L1923.5 1619.0" stroke="#8a8a8a" stroke-width="1"/>
<path d="M2141.2 1596.0L2141.2 1619.0" stroke="#8a8a8a" stroke-width="1"/>
<path d="M2358.9 1596.0L2358.9 1619.0" stroke="#8a8a8a" stroke-width="1"/>
<path d="M816.0 607.5L840.0 607.5" stroke="#8a8a8a" stroke-width="1"/>
<path d="M816.0 810.2L840.0 810.2" stroke="#8a8a8a" stroke-width="1"/>
<path d="M816.0 1011.8L840.0 1011.8" stroke="#8a8a8a" stroke-width="1"/>
<path d="M816.0 1215.1L840.0 1215.1" stroke="#8a8a8a" stroke-width="1"/>
<path d="M816.0 1401.4L840.0 1401.4" stroke="#8a8a8a" stroke-width="1"/>
<path d="M1045.2 416.0L1045.2 1593.2" stroke="#000" stroke-width="1.4" stroke-dasharray="16 5"/>
<path d="M1060.2 416.0L1060.2 1593.2" stroke="#000" stroke-width="1.4" stroke-dasharray="16 5"/>
<path d="M1262.9 416.0L1262.9 1391.0" stroke="#000" stroke-width="1.4" stroke-dasharray="16 5"/>
<path d="M1277.9 416.0L1277.9 1391.0" stroke="#000" stroke-width="1.4" stroke-dasharray="16 5"/>
<path d="M1480.6 416.0L1480.6 1415.0" stroke="#000" stroke-width="1.4" stroke-dasharray="16 5"/>
<path d="M1495.6 416.0L1495.6 1415.0" stroke="#000" stroke-width="1.4" stroke-dasharray="16 5"/>
<path d="M1698.3 416.0L1698.3 705.0" stroke="#000" stroke-width="1.4" stroke-dasharray="16 5"/>
<path d="M1713.3 416.0L1713.3 705.0" stroke="#000" stroke-width="1.4" stroke-dasharray="16 5"/>
<path d="M1698.3 957.0L1698.3 1215.0" stroke="#000" stroke-width="1.4" stroke-dasharray="16 5"/>
<path d="M1713.3 957.0L1713.3 1215.0" stroke="#000" stroke-width="1.4" stroke-dasharray="16 5"/>
<path d="M1916.0 416.0L1916.0 1012.0" stroke="#000" stroke-width="1.4" stroke-dasharray="16 5"/>
<path d="M1931.0 416.0L1931.0 1012.0" stroke="#000" stroke-width="1.4" stroke-dasharray="16 5"/>
<path d="M2133.7 416.0L2133.7 810.0" stroke="#000" stroke-width="1.4" stroke-dasharray="16 5"/>
<path d="M2148.7 416.0L2148.7 810.0" stroke="#000" stroke-width="1.4" stroke-dasharray="16 5"/>
<path d="M2351.4 416.0L2351.4 810.0" stroke="#000" stroke-width="1.4" stroke-dasharray="16 5"/>
<path d="M2366.4 416.0L2366.4 810.0" stroke="#000" stroke-width="1.4" stroke-dasharray="16 5"/>
<path d="M2133.7 817.0L2133.7 1007.0" stroke="#000" stroke-width="1.4" stroke-dasharray="16 5"/>
<path d="M2148.7 817.0L2148.7 1007.0" stroke="#000" stroke-width="1.4" stroke-dasharray="16 5"/>
<path d="M2351.4 817.0L2351.4 1007.0" stroke="#000" stroke-width="1.4" stroke-dasharray="16 5"/>
<path d="M2366.4 817.0L2366.4 1007.0" stroke="#000" stroke-width="1.4" stroke-dasharray="16 5"/>
<path d="M842.0 600.5L2565.4 600.5" stroke="#000" stroke-width="1.4" stroke-dasharray="16 5"/>
<path d="M842.0 614.5L2565.4 614.5" stroke="#000" stroke-width="1.4" stroke-dasharray="16 5"/>
<path d="M842.0 803.2L1571.0 803.2" stroke="#000" stroke-width="1.4" stroke-dasharray="16 5"/>
<path d="M842.0 817.2L1571.0 817.2" stroke="#000" stroke-width="1.4" stroke-dasharray="16 5"/>
<path d="M1916.0 803.2L2565.4 803.2" stroke="#000" stroke-width="1.4" stroke-dasharray="16 5"/>
<path d="M1916.0 817.2L2565.4 817.2" stroke="#000" stroke-width="1.4" stroke-dasharray="16 5"/>
<path d="M842.0 1004.8L2565.4 1004.8" stroke="#000" stroke-width="1.4" stroke-dasharray="16 5"/>
<path d="M842.0 1018.8L2565.4 1018.8" stroke="#000" stroke-width="1.4" stroke-dasharray="16 5"/>
<path d="M842.0 1208.1L1931.0 1208.1" stroke="#000" stroke-width="1.4" stroke-dasharray="16 5"/>
<path d="M842.0 1222.1L1931.0 1222.1" stroke="#000" stroke-width="1.4" stroke-dasharray="16 5"/>
<path d="M842.0 1394.4L1931.0 1394.4" stroke="#000" stroke-width="1.4" stroke-dasharray="16 5"/>
<path d="M842.0 1408.4L1931.0 1408.4" stroke="#000" stroke-width="1.4" stroke-dasharray="16 5"/>
<path d="M1488.1 416.0L1488.1 1415.0" stroke="#000" stroke-width="1"/>
<path d="M1268.4 620.0L1268.4 1391.0" stroke="#000" stroke-width="1"/>
<path d="M1705.8 416.0L1705.8 705.0" stroke="#000" stroke-width="1"/>
<path d="M1705.8 957.0L1705.8 1215.0" stroke="#000" stroke-width="1"/>
<path d="M1920.5 612.0L1920.5 1012.0" stroke="#000" stroke-width="1"/>
<path d="M842.0 1009.8L1931.0 1009.8" stroke="#000" stroke-width="1"/>
<path d="M842.0 604.5L1700.0 604.5" stroke="#000" stroke-width="1"/>
<path d="M1060.0 812.2L1571.0 812.2" stroke="#000" stroke-width="1"/>
<path d="M1060.0 1211.1L1272.0 1211.1" stroke="#000" stroke-width="1"/>
<path d="M842.0 1399.4L1260.0 1399.4" stroke="#000" stroke-width="1"/>
<path d="M842.0 1404.4L1260.0 1404.4" stroke="#000" stroke-width="1"/>
<path d="M1052.7 416.0L1052.7 740.0" stroke="#000" stroke-width="5.5"/>
<path d="M1052.7 787.0L1052.7 1143.0" stroke="#000" stroke-width="5.5"/>
<path d="M1052.7 1190.0L1052.7 1208.0" stroke="#000" stroke-width="5.5"/>
<path d="M1052.7 1222.0L1052.7 1238.0" stroke="#000" stroke-width="5.5"/>
<path d="M1052.7 1283.0L1052.7 1593.2" stroke="#000" stroke-width="5.5"/>
<path d="M1270.4 416.0L1270.4 600.0" stroke="#000" stroke-width="4.5"/>
<rect x="1060.0" y="610.8" width="17.0" height="4.4" fill="url(#th)" stroke="#000" stroke-width="1.300"/>
<rect x="1124.0" y="610.8" width="265.0" height="4.4" fill="url(#th)" stroke="#000" stroke-width="1.300"/>
<rect x="1461.0" y="610.8" width="54.0" height="4.4" fill="url(#th)" stroke="#000" stroke-width="1.300"/>
<rect x="1587.0" y="610.8" width="117.0" height="4.4" fill="url(#th)" stroke="#000" stroke-width="1.300"/>
<rect x="1931.0" y="610.8" width="39.0" height="4.4" fill="url(#th)" stroke="#000" stroke-width="1.300"/>
<rect x="2019.4" y="610.8" width="148.1" height="4.4" fill="url(#th)" stroke="#000" stroke-width="1.300"/>
<rect x="2223.0" y="610.8" width="64.0" height="4.4" fill="url(#th)" stroke="#000" stroke-width="1.300"/>
<rect x="2344.5" y="610.8" width="158.5" height="4.4" fill="url(#th)" stroke="#000" stroke-width="1.300"/>
<rect x="2548.0" y="610.8" width="17.4" height="4.4" fill="url(#th)" stroke="#000" stroke-width="1.300"/>
<path d="M1077.0 613.0L1077.0 660.0" stroke="#000" stroke-width="1.300" fill="none"/>
<path d="M1077.0 660.0A47 47 0 0 0 1124.0 613.0" stroke="#777" stroke-width="1" fill="none"/>
<path d="M1389.0 613.0L1389.0 649.0" stroke="#000" stroke-width="1.300" fill="none"/>
<path d="M1389.0 649.0A36.0 36.0 0 0 0 1425.0 613.0" stroke="#777" stroke-width="1" fill="none"/>
<path d="M1461.0 613.0L1461.0 649.0" stroke="#000" stroke-width="1.300" fill="none"/>
<path d="M1461.0 649.0A36.0 36.0 0 0 1 1425.0 613.0" stroke="#777" stroke-width="1" fill="none"/>
<path d="M1515.0 613.0L1515.0 649.0" stroke="#000" stroke-width="1.300" fill="none"/>
<path d="M1515.0 649.0A36.0 36.0 0 0 0 1551.0 613.0" stroke="#777" stroke-width="1" fill="none"/>
<path d="M1587.0 613.0L1587.0 649.0" stroke="#000" stroke-width="1.300" fill="none"/>
<path d="M1587.0 649.0A36.0 36.0 0 0 1 1551.0 613.0" stroke="#777" stroke-width="1" fill="none"/>
<path d="M1970.0 613.0L1970.0 662.0" stroke="#000" stroke-width="1.300" fill="none"/>
<path d="M1970.0 662.0A49 49 0 0 0 2019.0 613.0" stroke="#777" stroke-width="1" fill="none"/>
<path d="M2167.5 613.0L2167.5 669.0" stroke="#000" stroke-width="1.300" fill="none"/>
<path d="M2167.5 669.0A56 56 0 0 0 2223.5 613.0" stroke="#777" stroke-width="1" fill="none"/>
<path d="M2344.5 613.0L2344.5 670.0" stroke="#000" stroke-width="1.300" fill="none"/>
<path d="M2344.5 670.0A57 57 0 0 1 2287.5 613.0" stroke="#777" stroke-width="1" fill="none"/>
<path d="M2548.0 613.0L2548.0 660.0" stroke="#000" stroke-width="1.300" fill="none"/>
<path d="M2548.0 660.0A47 47 0 0 1 2501.0 613.0" stroke="#777" stroke-width="1" fill="none"/>
<path d="M1077.0 610.0L1077.0 616.0" stroke="#000" stroke-width="1.5"/>
<path d="M1124.0 610.0L1124.0 616.0" stroke="#000" stroke-width="1.5"/>
<path d="M1389.0 610.0L1389.0 616.0" stroke="#000" stroke-width="1.5"/>
<path d="M1461.0 610.0L1461.0 616.0" stroke="#000" stroke-width="1.5"/>
<path d="M1515.0 610.0L1515.0 616.0" stroke="#000" stroke-width="1.5"/>
<path d="M1587.0 610.0L1587.0 616.0" stroke="#000" stroke-width="1.5"/>
<path d="M1970.0 610.0L1970.0 616.0" stroke="#000" stroke-width="1.5"/>
<path d="M2019.4 610.0L2019.4 616.0" stroke="#000" stroke-width="1.5"/>
<path d="M2167.5 610.0L2167.5 616.0" stroke="#000" stroke-width="1.5"/>
<path d="M2223.0 610.0L2223.0 616.0" stroke="#000" stroke-width="1.5"/>
<path d="M2287.0 610.0L2287.0 616.0" stroke="#000" stroke-width="1.5"/>
<path d="M2344.5 610.0L2344.5 616.0" stroke="#000" stroke-width="1.5"/>
<path d="M2503.0 610.0L2503.0 616.0" stroke="#000" stroke-width="1.5"/>
<path d="M2548.0 610.0L2548.0 616.0" stroke="#000" stroke-width="1.5"/>
<rect x="842.0" y="803.5" width="202.5" height="4.5" fill="url(#th)" stroke="#000" stroke-width="1.300"/>
<rect x="842.0" y="1208.5" width="202.5" height="4.5" fill="url(#th)" stroke="#000" stroke-width="1.300"/>
<path d="M1055.7 787.0L1101.7 787.0" stroke="#000" stroke-width="1.300" fill="none"/>
<path d="M1101.7 787.0A46 46 0 0 0 1055.7 741.0" stroke="#777" stroke-width="1" fill="none"/>
<path d="M1055.7 787.0L1102.7 787.0" stroke="#000" stroke-width="1.3"/>
<path d="M1055.7 1190.0L1101.7 1190.0" stroke="#000" stroke-width="1.300" fill="none"/>
<path d="M1101.7 1190.0A46 46 0 0 0 1055.7 1144.0" stroke="#777" stroke-width="1" fill="none"/>
<path d="M1055.7 1190.0L1102.7 1190.0" stroke="#000" stroke-width="1.3"/>
<path d="M1055.7 1238.0L1101.7 1238.0" stroke="#000" stroke-width="1.300" fill="none"/>
<path d="M1101.7 1238.0A46 46 0 0 1 1055.7 1284.0" stroke="#777" stroke-width="1" fill="none"/>
<path d="M1055.7 1238.0L1102.7 1238.0" stroke="#000" stroke-width="1.3"/>
<rect x="1054.0" y="1299.0" width="70.0" height="4.5" fill="url(#th)" stroke="#000" stroke-width="1.300"/>
<rect x="1173.0" y="1299.0" width="99.0" height="4.5" fill="url(#th)" stroke="#000" stroke-width="1.300"/>
<path d="M1124.0 1301.0L1124.0 1253.0" stroke="#000" stroke-width="1.300" fill="none"/>
<path d="M1124.0 1253.0A48 48 0 0 1 1172.0 1301.0" stroke="#777" stroke-width="1" fill="none"/>
<path d="M1274.0 1219.0L1274.0 1391.5" stroke="#000" stroke-width="3.4"/>
<path d="M1279.5 1219.0L1279.5 1391.5" stroke="#000" stroke-width="1.2"/>
<path d="M1272.0 1217.0L1698.0 1217.0" stroke="#000" stroke-width="3.2"/>
<path d="M1272.0 1221.0L1698.0 1221.0" stroke="#000" stroke-width="1"/>
<path d="M1389.0 1217.0L1389.0 1253.0" stroke="#000" stroke-width="1.300" fill="none"/>
<path d="M1389.0 1253.0A36.0 36.0 0 0 0 1425.0 1217.0" stroke="#777" stroke-width="1" fill="none"/>
<path d="M1461.0 1217.0L1461.0 1253.0" stroke="#000" stroke-width="1.300" fill="none"/>
<path d="M1461.0 1253.0A36.0 36.0 0 0 1 1425.0 1217.0" stroke="#777" stroke-width="1" fill="none"/>
<path d="M1515.0 1217.0L1515.0 1253.0" stroke="#000" stroke-width="1.300" fill="none"/>
<path d="M1515.0 1253.0A36.0 36.0 0 0 0 1551.0 1217.0" stroke="#777" stroke-width="1" fill="none"/>
<path d="M1587.0 1217.0L1587.0 1253.0" stroke="#000" stroke-width="1.300" fill="none"/>
<path d="M1587.0 1253.0A36.0 36.0 0 0 1 1551.0 1217.0" stroke="#777" stroke-width="1" fill="none"/>
<path d="M1286.5 1412.0L1389.0 1412.0" stroke="#000" stroke-width="1.2"/>
<path d="M1286.5 1416.0L1389.0 1416.0" stroke="#000" stroke-width="1.2"/>
<path d="M1461.0 1412.0L1515.0 1412.0" stroke="#000" stroke-width="1.2"/>
<path d="M1461.0 1416.0L1515.0 1416.0" stroke="#000" stroke-width="1.2"/>
<path d="M1587.0 1412.0L1690.0 1412.0" stroke="#000" stroke-width="1.2"/>
<path d="M1587.0 1416.0L1690.0 1416.0" stroke="#000" stroke-width="1.2"/>
<path d="M1389.0 1414.0L1389.0 1450.0" stroke="#000" stroke-width="1.300" fill="none"/>
<path d="M1389.0 1450.0A36.0 36.0 0 0 0 1425.0 1414.0" stroke="#777" stroke-width="1" fill="none"/>
<path d="M1461.0 1414.0L1461.0 1450.0" stroke="#000" stroke-width="1.300" fill="none"/>
<path d="M1461.0 1450.0A36.0 36.0 0 0 1 1425.0 1414.0" stroke="#777" stroke-width="1" fill="none"/>
<path d="M1515.0 1414.0L1515.0 1450.0" stroke="#000" stroke-width="1.300" fill="none"/>
<path d="M1515.0 1450.0A36.0 36.0 0 0 0 1551.0 1414.0" stroke="#777" stroke-width="1" fill="none"/>
<path d="M1587.0 1414.0L1587.0 1450.0" stroke="#000" stroke-width="1.300" fill="none"/>
<path d="M1587.0 1450.0A36.0 36.0 0 0 1 1551.0 1414.0" stroke="#777" stroke-width="1" fill="none"/>
<path d="M1709.0 416.0L1709.0 607.0" stroke="#000" stroke-width="4"/>
<path d="M1922.0 416.0L1922.0 607.0" stroke="#000" stroke-width="4.5"/>
<path d="M1931.0 416.0L1931.0 607.0" stroke="#000" stroke-width="1"/>
<rect x="1750.0" y="440.0" width="136.0" height="167.0" fill="none" stroke="#666" stroke-width="1" stroke-dasharray="14 6"/>
<rect x="1786.3" y="466.0" width="63.4" height="141.0" fill="none" stroke="#666" stroke-width="1"/>
<path d="M1716.0 480.0L1728.0 480.0" stroke="#666" stroke-width="1"/>
<path d="M1716.0 476.0L1716.0 484.0" stroke="#666" stroke-width="1"/>
<path d="M1742.0 480.0L1758.0 480.0" stroke="#666" stroke-width="1"/>
<path d="M1750.0 474.0L1750.0 486.0" stroke="#666" stroke-width="1"/>
<path d="M1772.3 480.0L1786.3 480.0" stroke="#666" stroke-width="1"/>
<path d="M1849.7 480.0L1863.7 480.0" stroke="#666" stroke-width="1"/>
<path d="M1878.0 480.0L1894.0 480.0" stroke="#666" stroke-width="1"/>
<path d="M1886.0 474.0L1886.0 486.0" stroke="#666" stroke-width="1"/>
<text x="1724.0" y="490.0" font-size="6" text-anchor="middle" fill="#888">10</text>
<text x="1916.0" y="490.0" font-size="6" text-anchor="middle" fill="#888">12</text>
<path d="M1716.0 493.0L1728.0 493.0" stroke="#666" stroke-width="1"/>
<path d="M1716.0 489.0L1716.0 497.0" stroke="#666" stroke-width="1"/>
<path d="M1742.0 493.0L1758.0 493.0" stroke="#666" stroke-width="1"/>
<path d="M1750.0 487.0L1750.0 499.0" stroke="#666" stroke-width="1"/>
<path d="M1772.3 493.0L1786.3 493.0" stroke="#666" stroke-width="1"/>
<path d="M1849.7 493.0L1863.7 493.0" stroke="#666" stroke-width="1"/>
<path d="M1878.0 493.0L1894.0 493.0" stroke="#666" stroke-width="1"/>
<path d="M1886.0 487.0L1886.0 499.0" stroke="#666" stroke-width="1"/>
<text x="1724.0" y="503.0" font-size="6" text-anchor="middle" fill="#888">9</text>
<text x="1916.0" y="503.0" font-size="6" text-anchor="middle" fill="#888">13</text>
<path d="M1716.0 506.0L1728.0 506.0" stroke="#666" stroke-width="1"/>
<path d="M1716.0 502.0L1716.0 510.0" stroke="#666" stroke-width="1"/>
<path d="M1742.0 506.0L1758.0 506.0" stroke="#666" stroke-width="1"/>
<path d="M1750.0 500.0L1750.0 512.0" stroke="#666" stroke-width="1"/>
<path d="M1772.3 506.0L1786.3 506.0" stroke="#666" stroke-width="1"/>
<path d="M1849.7 506.0L1863.7 506.0" stroke="#666" stroke-width="1"/>
<path d="M1878.0 506.0L1894.0 506.0" stroke="#666" stroke-width="1"/>
<path d="M1886.0 500.0L1886.0 512.0" stroke="#666" stroke-width="1"/>
<text x="1724.0" y="516.0" font-size="6" text-anchor="middle" fill="#888">8</text>
<text x="1916.0" y="516.0" font-size="6" text-anchor="middle" fill="#888">14</text>
<path d="M1716.0 519.0L1728.0 519.0" stroke="#666" stroke-width="1"/>
<path d="M1716.0 515.0L1716.0 523.0" stroke="#666" stroke-width="1"/>
<path d="M1742.0 519.0L1758.0 519.0" stroke="#666" stroke-width="1"/>
<path d="M1750.0 513.0L1750.0 525.0" stroke="#666" stroke-width="1"/>
<path d="M1772.3 519.0L1786.3 519.0" stroke="#666" stroke-width="1"/>
<path d="M1849.7 519.0L1863.7 519.0" stroke="#666" stroke-width="1"/>
<path d="M1878.0 519.0L1894.0 519.0" stroke="#666" stroke-width="1"/>
<path d="M1886.0 513.0L1886.0 525.0" stroke="#666" stroke-width="1"/>
<text x="1724.0" y="529.0" font-size="6" text-anchor="middle" fill="#888">7</text>
<text x="1916.0" y="529.0" font-size="6" text-anchor="middle" fill="#888">15</text>
<path d="M1716.0 532.0L1728.0 532.0" stroke="#666" stroke-width="1"/>
<path d="M1716.0 528.0L1716.0 536.0" stroke="#666" stroke-width="1"/>
<path d="M1742.0 532.0L1758.0 532.0" stroke="#666" stroke-width="1"/>
<path d="M1750.0 526.0L1750.0 538.0" stroke="#666" stroke-width="1"/>
<path d="M1772.3 532.0L1786.3 532.0" stroke="#666" stroke-width="1"/>
<path d="M1849.7 532.0L1863.7 532.0" stroke="#666" stroke-width="1"/>
<path d="M1878.0 532.0L1894.0 532.0" stroke="#666" stroke-width="1"/>
<path d="M1886.0 526.0L1886.0 538.0" stroke="#666" stroke-width="1"/>
<text x="1724.0" y="542.0" font-size="6" text-anchor="middle" fill="#888">6</text>
<text x="1916.0" y="542.0" font-size="6" text-anchor="middle" fill="#888">16</text>
<path d="M1716.0 545.0L1728.0 545.0" stroke="#666" stroke-width="1"/>
<path d="M1716.0 541.0L1716.0 549.0" stroke="#666" stroke-width="1"/>
<path d="M1742.0 545.0L1758.0 545.0" stroke="#666" stroke-width="1"/>
<path d="M1750.0 539.0L1750.0 551.0" stroke="#666" stroke-width="1"/>
<path d="M1772.3 545.0L1786.3 545.0" stroke="#666" stroke-width="1"/>
<path d="M1849.7 545.0L1863.7 545.0" stroke="#666" stroke-width="1"/>
<path d="M1878.0 545.0L1894.0 545.0" stroke="#666" stroke-width="1"/>
<path d="M1886.0 539.0L1886.0 551.0" stroke="#666" stroke-width="1"/>
<text x="1724.0" y="555.0" font-size="6" text-anchor="middle" fill="#888">5</text>
<text x="1916.0" y="555.0" font-size="6" text-anchor="middle" fill="#888">17</text>
<path d="M1716.0 558.0L1728.0 558.0" stroke="#666" stroke-width="1"/>
<path d="M1716.0 554.0L1716.0 562.0" stroke="#666" stroke-width="1"/>
<path d="M1742.0 558.0L1758.0 558.0" stroke="#666" stroke-width="1"/>
<path d="M1750.0 552.0L1750.0 564.0" stroke="#666" stroke-width="1"/>
<path d="M1772.3 558.0L1786.3 558.0" stroke="#666" stroke-width="1"/>
<path d="M1849.7 558.0L1863.7 558.0" stroke="#666" stroke-width="1"/>
<path d="M1878.0 558.0L1894.0 558.0" stroke="#666" stroke-width="1"/>
<path d="M1886.0 552.0L1886.0 564.0" stroke="#666" stroke-width="1"/>
<text x="1724.0" y="568.0" font-size="6" text-anchor="middle" fill="#888">4</text>
<text x="1916.0" y="568.0" font-size="6" text-anchor="middle" fill="#888">18</text>
<path d="M1716.0 571.0L1728.0 571.0" stroke="#666" stroke-width="1"/>
<path d="M1716.0 567.0L1716.0 575.0" stroke="#666" stroke-width="1"/>
<path d="M1742.0 571.0L1758.0 571.0" stroke="#666" stroke-width="1"/>
<path d="M1750.0 565.0L1750.0 577.0" stroke="#666" stroke-width="1"/>
<path d="M1772.3 571.0L1786.3 571.0" stroke="#666" stroke-width="1"/>
<path d="M1849.7 571.0L1863.7 571.0" stroke="#666" stroke-width="1"/>
<path d="M1878.0 571.0L1894.0 571.0" stroke="#666" stroke-width="1"/>
<path d="M1886.0 565.0L1886.0 577.0" stroke="#666" stroke-width="1"/>
<text x="1724.0" y="581.0" font-size="6" text-anchor="middle" fill="#888">3</text>
<text x="1916.0" y="581.0" font-size="6" text-anchor="middle" fill="#888">19</text>
<path d="M1716.0 584.0L1728.0 584.0" stroke="#666" stroke-width="1"/>
<path d="M1716.0 580.0L1716.0 588.0" stroke="#666" stroke-width="1"/>
<path d="M1742.0 584.0L1758.0 584.0" stroke="#666" stroke-width="1"/>
<path d="M1750.0 578.0L1750.0 590.0" stroke="#666" stroke-width="1"/>
<path d="M1772.3 584.0L1786.3 584.0" stroke="#666" stroke-width="1"/>
<path d="M1849.7 584.0L1863.7 584.0" stroke="#666" stroke-width="1"/>
<path d="M1878.0 584.0L1894.0 584.0" stroke="#666" stroke-width="1"/>
<path d="M1886.0 578.0L1886.0 590.0" stroke="#666" stroke-width="1"/>
<text x="1724.0" y="594.0" font-size="6" text-anchor="middle" fill="#888">2</text>
<text x="1916.0" y="594.0" font-size="6" text-anchor="middle" fill="#888">20</text>
<path d="M1716.0 597.0L1728.0 597.0" stroke="#666" stroke-width="1"/>
<path d="M1716.0 593.0L1716.0 601.0" stroke="#666" stroke-width="1"/>
<path d="M1742.0 597.0L1758.0 597.0" stroke="#666" stroke-width="1"/>
<path d="M1750.0 591.0L1750.0 603.0" stroke="#666" stroke-width="1"/>
<path d="M1772.3 597.0L1786.3 597.0" stroke="#666" stroke-width="1"/>
<path d="M1849.7 597.0L1863.7 597.0" stroke="#666" stroke-width="1"/>
<path d="M1878.0 597.0L1894.0 597.0" stroke="#666" stroke-width="1"/>
<path d="M1886.0 591.0L1886.0 603.0" stroke="#666" stroke-width="1"/>
<text x="1724.0" y="607.0" font-size="6" text-anchor="middle" fill="#888">1</text>
<text x="1916.0" y="607.0" font-size="6" text-anchor="middle" fill="#888">21</text>
<path d="M1716.0 610.0L1728.0 610.0" stroke="#666" stroke-width="1"/>
<path d="M1716.0 606.0L1716.0 614.0" stroke="#666" stroke-width="1"/>
<path d="M1742.0 610.0L1758.0 610.0" stroke="#666" stroke-width="1"/>
<path d="M1750.0 604.0L1750.0 616.0" stroke="#666" stroke-width="1"/>
<path d="M1772.3 610.0L1786.3 610.0" stroke="#666" stroke-width="1"/>
<path d="M1849.7 610.0L1863.7 610.0" stroke="#666" stroke-width="1"/>
<path d="M1878.0 610.0L1894.0 610.0" stroke="#666" stroke-width="1"/>
<path d="M1886.0 604.0L1886.0 616.0" stroke="#666" stroke-width="1"/>
<text x="1724.0" y="620.0" font-size="6" text-anchor="middle" fill="#888">0</text>
<text x="1916.0" y="620.0" font-size="6" text-anchor="middle" fill="#888">22</text>
<path d="M1716.0 599.0L1786.3 599.0" stroke="#666" stroke-width="0.9"/>
<path d="M1716.0 586.0L1786.3 586.0" stroke="#666" stroke-width="0.9"/>
<path d="M1716.0 573.0L1786.3 573.0" stroke="#666" stroke-width="0.9"/>
<path d="M1716.0 560.0L1786.3 560.0" stroke="#666" stroke-width="0.9"/>
<path d="M1716.0 547.0L1786.3 547.0" stroke="#666" stroke-width="0.9"/>
<path d="M1716.0 534.0L1786.3 534.0" stroke="#666" stroke-width="0.9"/>
<path d="M1716.0 521.0L1786.3 521.0" stroke="#666" stroke-width="0.9"/>
<path d="M1720.0 424.0L1877.0 461.0" stroke="#888" stroke-width="0.8"/>
<path d="M1877.0 461.0L1912.0 596.0" stroke="#888" stroke-width="0.8"/>
<path d="M1701.0 1215.0L1701.0 1409.0" stroke="#000" stroke-width="5"/>
<path d="M1933.0 1007.0L1933.0 1593.2" stroke="#000" stroke-width="6"/>
<rect x="1743.0" y="1217.0" width="148.0" height="163.0" fill="none" stroke="#666" stroke-width="1" stroke-dasharray="14 6"/>
<rect x="1783.6" y="1217.0" width="66.7" height="126.0" fill="none" stroke="#666" stroke-width="1"/>
<path d="M1709.0 1227.0L1721.0 1227.0" stroke="#666" stroke-width="1"/>
<path d="M1709.0 1223.0L1709.0 1231.0" stroke="#666" stroke-width="1"/>
<path d="M1735.0 1227.0L1751.0 1227.0" stroke="#666" stroke-width="1"/>
<path d="M1743.0 1221.0L1743.0 1233.0" stroke="#666" stroke-width="1"/>
<path d="M1769.6 1227.0L1783.6 1227.0" stroke="#666" stroke-width="1"/>
<path d="M1850.4 1227.0L1864.4 1227.0" stroke="#666" stroke-width="1"/>
<path d="M1883.0 1227.0L1899.0 1227.0" stroke="#666" stroke-width="1"/>
<path d="M1891.0 1221.0L1891.0 1233.0" stroke="#666" stroke-width="1"/>
<text x="1717.0" y="1237.0" font-size="6" text-anchor="middle" fill="#888">20</text>
<text x="1921.0" y="1237.0" font-size="6" text-anchor="middle" fill="#888">2</text>
<path d="M1709.0 1240.0L1721.0 1240.0" stroke="#666" stroke-width="1"/>
<path d="M1709.0 1236.0L1709.0 1244.0" stroke="#666" stroke-width="1"/>
<path d="M1735.0 1240.0L1751.0 1240.0" stroke="#666" stroke-width="1"/>
<path d="M1743.0 1234.0L1743.0 1246.0" stroke="#666" stroke-width="1"/>
<path d="M1769.6 1240.0L1783.6 1240.0" stroke="#666" stroke-width="1"/>
<path d="M1850.4 1240.0L1864.4 1240.0" stroke="#666" stroke-width="1"/>
<path d="M1883.0 1240.0L1899.0 1240.0" stroke="#666" stroke-width="1"/>
<path d="M1891.0 1234.0L1891.0 1246.0" stroke="#666" stroke-width="1"/>
<text x="1717.0" y="1250.0" font-size="6" text-anchor="middle" fill="#888">19</text>
<text x="1921.0" y="1250.0" font-size="6" text-anchor="middle" fill="#888">3</text>
<path d="M1709.0 1253.0L1721.0 1253.0" stroke="#666" stroke-width="1"/>
<path d="M1709.0 1249.0L1709.0 1257.0" stroke="#666" stroke-width="1"/>
<path d="M1735.0 1253.0L1751.0 1253.0" stroke="#666" stroke-width="1"/>
<path d="M1743.0 1247.0L1743.0 1259.0" stroke="#666" stroke-width="1"/>
<path d="M1769.6 1253.0L1783.6 1253.0" stroke="#666" stroke-width="1"/>
<path d="M1850.4 1253.0L1864.4 1253.0" stroke="#666" stroke-width="1"/>
<path d="M1883.0 1253.0L1899.0 1253.0" stroke="#666" stroke-width="1"/>
<path d="M1891.0 1247.0L1891.0 1259.0" stroke="#666" stroke-width="1"/>
<text x="1717.0" y="1263.0" font-size="6" text-anchor="middle" fill="#888">18</text>
<text x="1921.0" y="1263.0" font-size="6" text-anchor="middle" fill="#888">4</text>
<path d="M1709.0 1266.0L1721.0 1266.0" stroke="#666" stroke-width="1"/>
<path d="M1709.0 1262.0L1709.0 1270.0" stroke="#666" stroke-width="1"/>
<path d="M1735.0 1266.0L1751.0 1266.0" stroke="#666" stroke-width="1"/>
<path d="M1743.0 1260.0L1743.0 1272.0" stroke="#666" stroke-width="1"/>
<path d="M1769.6 1266.0L1783.6 1266.0" stroke="#666" stroke-width="1"/>
<path d="M1850.4 1266.0L1864.4 1266.0" stroke="#666" stroke-width="1"/>
<path d="M1883.0 1266.0L1899.0 1266.0" stroke="#666" stroke-width="1"/>
<path d="M1891.0 1260.0L1891.0 1272.0" stroke="#666" stroke-width="1"/>
<text x="1717.0" y="1276.0" font-size="6" text-anchor="middle" fill="#888">17</text>
<text x="1921.0" y="1276.0" font-size="6" text-anchor="middle" fill="#888">5</text>
<path d="M1709.0 1279.0L1721.0 1279.0" stroke="#666" stroke-width="1"/>
<path d="M1709.0 1275.0L1709.0 1283.0" stroke="#666" stroke-width="1"/>
<path d="M1735.0 1279.0L1751.0 1279.0" stroke="#666" stroke-width="1"/>
<path d="M1743.0 1273.0L1743.0 1285.0" stroke="#666" stroke-width="1"/>
<path d="M1769.6 1279.0L1783.6 1279.0" stroke="#666" stroke-width="1"/>
<path d="M1850.4 1279.0L1864.4 1279.0" stroke="#666" stroke-width="1"/>
<path d="M1883.0 1279.0L1899.0 1279.0" stroke="#666" stroke-width="1"/>
<path d="M1891.0 1273.0L1891.0 1285.0" stroke="#666" stroke-width="1"/>
<text x="1717.0" y="1289.0" font-size="6" text-anchor="middle" fill="#888">16</text>
<text x="1921.0" y="1289.0" font-size="6" text-anchor="middle" fill="#888">6</text>
<path d="M1709.0 1292.0L1721.0 1292.0" stroke="#666" stroke-width="1"/>
<path d="M1709.0 1288.0L1709.0 1296.0" stroke="#666" stroke-width="1"/>
<path d="M1735.0 1292.0L1751.0 1292.0" stroke="#666" stroke-width="1"/>
<path d="M1743.0 1286.0L1743.0 1298.0" stroke="#666" stroke-width="1"/>
<path d="M1769.6 1292.0L1783.6 1292.0" stroke="#666" stroke-width="1"/>
<path d="M1850.4 1292.0L1864.4 1292.0" stroke="#666" stroke-width="1"/>
<path d="M1883.0 1292.0L1899.0 1292.0" stroke="#666" stroke-width="1"/>
<path d="M1891.0 1286.0L1891.0 1298.0" stroke="#666" stroke-width="1"/>
<text x="1717.0" y="1302.0" font-size="6" text-anchor="middle" fill="#888">15</text>
<text x="1921.0" y="1302.0" font-size="6" text-anchor="middle" fill="#888">7</text>
<path d="M1709.0 1305.0L1721.0 1305.0" stroke="#666" stroke-width="1"/>
<path d="M1709.0 1301.0L1709.0 1309.0" stroke="#666" stroke-width="1"/>
<path d="M1735.0 1305.0L1751.0 1305.0" stroke="#666" stroke-width="1"/>
<path d="M1743.0 1299.0L1743.0 1311.0" stroke="#666" stroke-width="1"/>
<path d="M1769.6 1305.0L1783.6 1305.0" stroke="#666" stroke-width="1"/>
<path d="M1850.4 1305.0L1864.4 1305.0" stroke="#666" stroke-width="1"/>
<path d="M1883.0 1305.0L1899.0 1305.0" stroke="#666" stroke-width="1"/>
<path d="M1891.0 1299.0L1891.0 1311.0" stroke="#666" stroke-width="1"/>
<text x="1717.0" y="1315.0" font-size="6" text-anchor="middle" fill="#888">14</text>
<text x="1921.0" y="1315.0" font-size="6" text-anchor="middle" fill="#888">8</text>
<path d="M1709.0 1318.0L1721.0 1318.0" stroke="#666" stroke-width="1"/>
<path d="M1709.0 1314.0L1709.0 1322.0" stroke="#666" stroke-width="1"/>
<path d="M1735.0 1318.0L1751.0 1318.0" stroke="#666" stroke-width="1"/>
<path d="M1743.0 1312.0L1743.0 1324.0" stroke="#666" stroke-width="1"/>
<path d="M1769.6 1318.0L1783.6 1318.0" stroke="#666" stroke-width="1"/>
<path d="M1850.4 1318.0L1864.4 1318.0" stroke="#666" stroke-width="1"/>
<path d="M1883.0 1318.0L1899.0 1318.0" stroke="#666" stroke-width="1"/>
<path d="M1891.0 1312.0L1891.0 1324.0" stroke="#666" stroke-width="1"/>
<text x="1717.0" y="1328.0" font-size="6" text-anchor="middle" fill="#888">13</text>
<text x="1921.0" y="1328.0" font-size="6" text-anchor="middle" fill="#888">9</text>
<path d="M1709.0 1331.0L1721.0 1331.0" stroke="#666" stroke-width="1"/>
<path d="M1709.0 1327.0L1709.0 1335.0" stroke="#666" stroke-width="1"/>
<path d="M1735.0 1331.0L1751.0 1331.0" stroke="#666" stroke-width="1"/>
<path d="M1743.0 1325.0L1743.0 1337.0" stroke="#666" stroke-width="1"/>
<path d="M1769.6 1331.0L1783.6 1331.0" stroke="#666" stroke-width="1"/>
<path d="M1850.4 1331.0L1864.4 1331.0" stroke="#666" stroke-width="1"/>
<path d="M1883.0 1331.0L1899.0 1331.0" stroke="#666" stroke-width="1"/>
<path d="M1891.0 1325.0L1891.0 1337.0" stroke="#666" stroke-width="1"/>
<text x="1717.0" y="1341.0" font-size="6" text-anchor="middle" fill="#888">12</text>
<text x="1921.0" y="1341.0" font-size="6" text-anchor="middle" fill="#888">10</text>
<path d="M1709.0 1344.0L1721.0 1344.0" stroke="#666" stroke-width="1"/>
<path d="M1709.0 1340.0L1709.0 1348.0" stroke="#666" stroke-width="1"/>
<path d="M1735.0 1344.0L1751.0 1344.0" stroke="#666" stroke-width="1"/>
<path d="M1743.0 1338.0L1743.0 1350.0" stroke="#666" stroke-width="1"/>
<path d="M1769.6 1344.0L1783.6 1344.0" stroke="#666" stroke-width="1"/>
<path d="M1850.4 1344.0L1864.4 1344.0" stroke="#666" stroke-width="1"/>
<path d="M1883.0 1344.0L1899.0 1344.0" stroke="#666" stroke-width="1"/>
<path d="M1891.0 1338.0L1891.0 1350.0" stroke="#666" stroke-width="1"/>
<text x="1717.0" y="1354.0" font-size="6" text-anchor="middle" fill="#888">11</text>
<text x="1921.0" y="1354.0" font-size="6" text-anchor="middle" fill="#888">11</text>
<path d="M1850.4 1224.0L1925.0 1224.0" stroke="#666" stroke-width="0.9"/>
<path d="M1850.4 1237.0L1925.0 1237.0" stroke="#666" stroke-width="0.9"/>
<path d="M1850.4 1250.0L1925.0 1250.0" stroke="#666" stroke-width="0.9"/>
<path d="M1850.4 1263.0L1925.0 1263.0" stroke="#666" stroke-width="0.9"/>
<path d="M1850.4 1276.0L1925.0 1276.0" stroke="#666" stroke-width="0.9"/>
<path d="M1690.0 1411.0L1931.0 1411.0" stroke="#000" stroke-width="4"/>
<path d="M2141.8 416.0L2141.8 607.0" stroke="#000" stroke-width="5.5"/>
<path d="M2250.0 416.0L2250.0 607.0" stroke="#000" stroke-width="4"/>
<path d="M2360.0 416.0L2360.0 607.0" stroke="#000" stroke-width="5.5"/>
<rect x="2146.0" y="418.0" width="102.0" height="7.0" fill="url(#th)" stroke="#000" stroke-width="1.300"/>
<path d="M2056.4 478.7L2138.7 478.7" stroke="#000" stroke-width="4"/>
<path d="M2363.0 478.7L2443.0 478.7" stroke="#000" stroke-width="4"/>
<path d="M2056.4 545.3L2138.7 545.3" stroke="#000" stroke-width="4"/>
<path d="M2363.0 545.3L2443.0 545.3" stroke="#000" stroke-width="4"/>
<path d="M2056.4 469.7L2056.4 487.7" stroke="#000" stroke-width="1.5"/>
<path d="M2056.4 536.3L2056.4 554.3" stroke="#000" stroke-width="1.5"/>
<path d="M2056.4 429.0L2010.4 429.0" stroke="#000" stroke-width="1.300" fill="none"/>
<path d="M2010.4 429.0A46 46 0 0 0 2056.4 475.0" stroke="#777" stroke-width="1" fill="none"/>
<path d="M2443.0 429.0L2489.0 429.0" stroke="#000" stroke-width="1.300" fill="none"/>
<path d="M2489.0 429.0A46 46 0 0 1 2443.0 475.0" stroke="#777" stroke-width="1" fill="none"/>
<path d="M2056.4 489.0L2010.4 489.0" stroke="#000" stroke-width="1.300" fill="none"/>
<path d="M2010.4 489.0A46 46 0 0 0 2056.4 535.0" stroke="#777" stroke-width="1" fill="none"/>
<path d="M2443.0 489.0L2489.0 489.0" stroke="#000" stroke-width="1.300" fill="none"/>
<path d="M2489.0 489.0A46 46 0 0 1 2443.0 535.0" stroke="#777" stroke-width="1" fill="none"/>
<path d="M2056.4 555.0L2010.4 555.0" stroke="#000" stroke-width="1.300" fill="none"/>
<path d="M2010.4 555.0A46 46 0 0 0 2056.4 601.0" stroke="#777" stroke-width="1" fill="none"/>
<path d="M2443.0 555.0L2489.0 555.0" stroke="#000" stroke-width="1.300" fill="none"/>
<path d="M2489.0 555.0A46 46 0 0 1 2443.0 601.0" stroke="#777" stroke-width="1" fill="none"/>
<path d="M1935.0 420.0L2138.0 605.0" stroke="#777" stroke-width="0.8"/>
<path d="M2138.0 420.0L1935.0 605.0" stroke="#777" stroke-width="0.8"/>
<path d="M2146.0 428.0L2248.0 605.0" stroke="#777" stroke-width="0.8"/>
<path d="M2248.0 428.0L2146.0 605.0" stroke="#777" stroke-width="0.8"/>
<path d="M2366.0 420.0L2562.0 605.0" stroke="#777" stroke-width="0.8"/>
<path d="M2562.0 420.0L2366.0 605.0" stroke="#777" stroke-width="0.8"/>
<rect x="2023.5" y="803.0" width="203.5" height="4.5" fill="url(#th)" stroke="#000" stroke-width="1.300"/>
<rect x="2273.0" y="803.0" width="203.0" height="4.5" fill="url(#th)" stroke="#000" stroke-width="1.300"/>
<rect x="2548.0" y="803.0" width="17.4" height="4.5" fill="url(#th)" stroke="#000" stroke-width="1.300"/>
<path d="M1931.0 812.0L2565.4 812.0" stroke="#000" stroke-width="1"/>
<rect x="1931.0" y="803.0" width="20.0" height="4.5" fill="url(#th)" stroke="#000" stroke-width="1.300"/>
<path d="M1951.0 805.0L1951.0 768.8" stroke="#000" stroke-width="1.300" fill="none"/>
<path d="M1951.0 768.8A36.25 36.25 0 0 1 1987.2 805.0" stroke="#777" stroke-width="1" fill="none"/>
<path d="M2023.5 805.0L2023.5 768.8" stroke="#000" stroke-width="1.300" fill="none"/>
<path d="M2023.5 768.8A36.25 36.25 0 0 0 1987.2 805.0" stroke="#777" stroke-width="1" fill="none"/>
<path d="M2227.0 805.0L2227.0 759.0" stroke="#000" stroke-width="1.300" fill="none"/>
<path d="M2227.0 759.0A46 46 0 0 1 2273.0 805.0" stroke="#777" stroke-width="1" fill="none"/>
<path d="M2476.0 805.0L2476.0 769.0" stroke="#000" stroke-width="1.300" fill="none"/>
<path d="M2476.0 769.0A36.0 36.0 0 0 1 2512.0 805.0" stroke="#777" stroke-width="1" fill="none"/>
<path d="M2548.0 805.0L2548.0 769.0" stroke="#000" stroke-width="1.300" fill="none"/>
<path d="M2548.0 769.0A36.0 36.0 0 0 0 2512.0 805.0" stroke="#777" stroke-width="1" fill="none"/>
<path d="M1931.0 1021.0L2565.4 1021.0" stroke="#000" stroke-width="3.9"/>
<path d="M1931.0 1014.0L2565.4 1014.0" stroke="#000" stroke-width="1"/>
<path d="M1951.0 1014.0L1951.0 977.8" stroke="#000" stroke-width="1.300" fill="none"/>
<path d="M1951.0 977.8A36.25 36.25 0 0 1 1987.2 1014.0" stroke="#777" stroke-width="1" fill="none"/>
<path d="M2023.5 1014.0L2023.5 977.8" stroke="#000" stroke-width="1.300" fill="none"/>
<path d="M2023.5 977.8A36.25 36.25 0 0 0 1987.2 1014.0" stroke="#777" stroke-width="1" fill="none"/>
<path d="M2476.0 1014.0L2476.0 978.0" stroke="#000" stroke-width="1.300" fill="none"/>
<path d="M2476.0 978.0A36.0 36.0 0 0 1 2512.0 1014.0" stroke="#777" stroke-width="1" fill="none"/>
<path d="M2548.0 1014.0L2548.0 978.0" stroke="#000" stroke-width="1.300" fill="none"/>
<path d="M2548.0 978.0A36.0 36.0 0 0 0 2512.0 1014.0" stroke="#777" stroke-width="1" fill="none"/>
<path d="M2141.8 817.0L2141.8 1007.0" stroke="#000" stroke-width="5.5"/>
<path d="M2360.0 817.0L2360.0 1007.0" stroke="#000" stroke-width="5.5"/>
<rect x="2200" y="1016" width="100" height="8" fill="#fff" stroke="#000" stroke-width="1"/>
<rect x="1978.0" y="1502.0" width="486.0" height="91.0" fill="none" stroke="#222" stroke-width="1.3"/>
<path d="M2054.0 1502.0L2054.0 1593.0" stroke="#222" stroke-width="1.2"/>
<path d="M1990.6 1502.0L1990.6 1593.0" stroke="#666" stroke-width="0.8"/>
<path d="M2003.2 1502.0L2003.2 1593.0" stroke="#666" stroke-width="0.8"/>
<path d="M2015.8 1502.0L2015.8 1593.0" stroke="#666" stroke-width="0.8"/>
<path d="M2028.4 1502.0L2028.4 1593.0" stroke="#666" stroke-width="0.8"/>
<path d="M2041.0 1502.0L2041.0 1593.0" stroke="#666" stroke-width="0.8"/>
<path d="M1978.0 1547.0L2054.0 1547.0" stroke="#666" stroke-width="0.8"/>
<path d="M1931.0 1430.0L1885.0 1430.0" stroke="#000" stroke-width="1.300" fill="none"/>
<path d="M1885.0 1430.0A46 46 0 0 0 1931.0 1476.0" stroke="#777" stroke-width="1" fill="none"/>
<path d="M1885.0 1430.0L1931.0 1430.0" stroke="#000" stroke-width="1.2"/>
<path d="M1933.0 1480.0L1933.0 1593.2" stroke="#000" stroke-width="6"/>
<rect x="1276.0" y="815.5" width="95.0" height="84.5" fill="none" stroke="#000" stroke-width="2.6"/>
<rect x="1290.0" y="843.0" width="67.0" height="50.0" fill="#fff" stroke="#000" stroke-width="1.5"/>
<path d="M1282.0 830.0L1282.0 893.0" stroke="#000" stroke-width="2"/>
<path d="M1286.0 830.0L1286.0 893.0" stroke="#000" stroke-width="2"/>
<path d="M1361.0 830.0L1361.0 893.0" stroke="#000" stroke-width="2"/>
<path d="M1365.0 830.0L1365.0 893.0" stroke="#000" stroke-width="2"/>
<path d="M1266.0 899.0L1380.0 899.0" stroke="#000" stroke-width="1.6"/>
<rect x="1295.0" y="829.0" width="6.0" height="10.0" fill="none" stroke="#000" stroke-width="1"/>
<rect x="1308.0" y="829.0" width="6.0" height="10.0" fill="none" stroke="#000" stroke-width="1"/>
<rect x="1330.0" y="829.0" width="6.0" height="10.0" fill="none" stroke="#000" stroke-width="1"/>
<rect x="1343.0" y="829.0" width="6.0" height="10.0" fill="none" stroke="#000" stroke-width="1"/>
<rect x="1458.0" y="1573.0" width="61.0" height="61.0" fill="none" stroke="#000" stroke-width="1.3" stroke-dasharray="9 4"/>
<rect x="1481.0" y="1597.0" width="15.0" height="15.0" fill="none" stroke="#000" stroke-width="1.3"/>
<path d="M1458.0 1573.0L1519.0 1634.0" stroke="#777" stroke-width="0.8"/>
<path d="M549.0 384.0L549.0 1624.0" stroke="#000" stroke-width="1.3"/>
<path d="M586.0 384.0L586.0 1624.0" stroke="#000" stroke-width="1.3"/>
<path d="M625.0 384.0L625.0 1624.0" stroke="#000" stroke-width="1.3"/>
<path d="M543.0 386.0L555.0 386.0" stroke="#000" stroke-width="1.3"/>
<path d="M543.0 404.6L555.0 404.6" stroke="#000" stroke-width="1.3"/>
<path d="M543.0 607.5L555.0 607.5" stroke="#000" stroke-width="1.3"/>
<path d="M543.0 810.2L555.0 810.2" stroke="#000" stroke-width="1.3"/>
<path d="M543.0 1011.8L555.0 1011.8" stroke="#000" stroke-width="1.3"/>
<path d="M543.0 1215.1L555.0 1215.1" stroke="#000" stroke-width="1.3"/>
<path d="M543.0 1401.4L555.0 1401.4" stroke="#000" stroke-width="1.3"/>
<path d="M543.0 1604.3L555.0 1604.3" stroke="#000" stroke-width="1.3"/>
<path d="M543.0 1622.0L555.0 1622.0" stroke="#000" stroke-width="1.3"/>
<path d="M580.0 386.0L592.0 386.0" stroke="#000" stroke-width="1.3"/>
<path d="M580.0 506.5L592.0 506.5" stroke="#000" stroke-width="1.3"/>
<path d="M580.0 708.6L592.0 708.6" stroke="#000" stroke-width="1.3"/>
<path d="M580.0 911.0L592.0 911.0" stroke="#000" stroke-width="1.3"/>
<path d="M580.0 1120.4L592.0 1120.4" stroke="#000" stroke-width="1.3"/>
<path d="M580.0 1308.0L592.0 1308.0" stroke="#000" stroke-width="1.3"/>
<path d="M580.0 1622.0L592.0 1622.0" stroke="#000" stroke-width="1.3"/>
<path d="M619.0 386.0L631.0 386.0" stroke="#000" stroke-width="1.3"/>
<path d="M619.0 454.8L631.0 454.8" stroke="#000" stroke-width="1.3"/>
<path d="M619.0 556.9L631.0 556.9" stroke="#000" stroke-width="1.3"/>
<path d="M619.0 601.0L631.0 601.0" stroke="#000" stroke-width="1.3"/>
<path d="M619.0 615.0L631.0 615.0" stroke="#000" stroke-width="1.3"/>
<path d="M619.0 658.9L631.0 658.9" stroke="#000" stroke-width="1.3"/>
<path d="M619.0 759.3L631.0 759.3" stroke="#000" stroke-width="1.3"/>
<path d="M619.0 803.0L631.0 803.0" stroke="#000" stroke-width="1.3"/>
<path d="M619.0 817.0L631.0 817.0" stroke="#000" stroke-width="1.3"/>
<path d="M619.0 860.0L631.0 860.0" stroke="#000" stroke-width="1.3"/>
<path d="M619.0 960.4L631.0 960.4" stroke="#000" stroke-width="1.3"/>
<path d="M619.0 1004.0L631.0 1004.0" stroke="#000" stroke-width="1.3"/>
<path d="M619.0 1019.0L631.0 1019.0" stroke="#000" stroke-width="1.3"/>
<path d="M619.0 1070.7L631.0 1070.7" stroke="#000" stroke-width="1.3"/>
<path d="M619.0 1171.5L631.0 1171.5" stroke="#000" stroke-width="1.3"/>
<path d="M619.0 1208.0L631.0 1208.0" stroke="#000" stroke-width="1.3"/>
<path d="M619.0 1222.0L631.0 1222.0" stroke="#000" stroke-width="1.3"/>
<path d="M619.0 1257.9L631.0 1257.9" stroke="#000" stroke-width="1.3"/>
<path d="M619.0 1357.4L631.0 1357.4" stroke="#000" stroke-width="1.3"/>
<path d="M619.0 1392.0L631.0 1392.0" stroke="#000" stroke-width="1.3"/>
<path d="M619.0 1408.0L631.0 1408.0" stroke="#000" stroke-width="1.3"/>
<path d="M619.0 1593.0L631.0 1593.0" stroke="#000" stroke-width="1.3"/>
<path d="M619.0 1615.0L631.0 1615.0" stroke="#000" stroke-width="1.3"/>
<text x="544.0" y="425.0" font-size="12" text-anchor="middle" fill="#333" transform="rotate(-90 544.0 425.0)">0,33</text>
<text x="544.0" y="506.1" font-size="12" text-anchor="middle" fill="#333" transform="rotate(-90 544.0 506.1)">4,00</text>
<text x="544.0" y="708.9" font-size="12" text-anchor="middle" fill="#333" transform="rotate(-90 544.0 708.9)">4,00</text>
<text x="544.0" y="911.0" font-size="12" text-anchor="middle" fill="#333" transform="rotate(-90 544.0 911.0)">4,00</text>
<text x="544.0" y="1113.4" font-size="12" text-anchor="middle" fill="#333" transform="rotate(-90 544.0 1113.4)">4,00</text>
<text x="544.0" y="1308.2" font-size="12" text-anchor="middle" fill="#333" transform="rotate(-90 544.0 1308.2)">4,00</text>
<text x="544.0" y="1502.8" font-size="12" text-anchor="middle" fill="#333" transform="rotate(-90 544.0 1502.8)">4,00</text>
<text x="544.0" y="1640.0" font-size="12" text-anchor="middle" fill="#333" transform="rotate(-90 544.0 1640.0)">0,33</text>
<text x="581.0" y="446.0" font-size="12" text-anchor="middle" fill="#333" transform="rotate(-90 581.0 446.0)">2,33</text>
<text x="581.0" y="607.5" font-size="12" text-anchor="middle" fill="#333" transform="rotate(-90 581.0 607.5)">4,00</text>
<text x="581.0" y="810.0" font-size="12" text-anchor="middle" fill="#333" transform="rotate(-90 581.0 810.0)">4,00</text>
<text x="581.0" y="1012.0" font-size="12" text-anchor="middle" fill="#333" transform="rotate(-90 581.0 1012.0)">4,14</text>
<text x="581.0" y="1215.0" font-size="12" text-anchor="middle" fill="#333" transform="rotate(-90 581.0 1215.0)">3,70</text>
<text x="581.0" y="1465.0" font-size="12" text-anchor="middle" fill="#333" transform="rotate(-90 581.0 1465.0)">6,17</text>
<text x="620.0" y="420.0" font-size="12" text-anchor="middle" fill="#333" transform="rotate(-90 620.0 420.0)">1,32</text>
<text x="620.0" y="506.5" font-size="12" text-anchor="middle" fill="#333" transform="rotate(-90 620.0 506.5)">2,02</text>
<text x="620.0" y="581.0" font-size="12" text-anchor="middle" fill="#333" transform="rotate(-90 620.0 581.0)">0,84</text>
<text x="620.0" y="636.0" font-size="12" text-anchor="middle" fill="#333" transform="rotate(-90 620.0 636.0)">0,84</text>
<text x="620.0" y="708.6" font-size="12" text-anchor="middle" fill="#333" transform="rotate(-90 620.0 708.6)">2,02</text>
<text x="620.0" y="783.0" font-size="12" text-anchor="middle" fill="#333" transform="rotate(-90 620.0 783.0)">0,84</text>
<text x="620.0" y="838.0" font-size="12" text-anchor="middle" fill="#333" transform="rotate(-90 620.0 838.0)">0,84</text>
<text x="620.0" y="911.0" font-size="12" text-anchor="middle" fill="#333" transform="rotate(-90 620.0 911.0)">2,02</text>
<text x="620.0" y="985.0" font-size="12" text-anchor="middle" fill="#333" transform="rotate(-90 620.0 985.0)">0,84</text>
<text x="620.0" y="1046.0" font-size="12" text-anchor="middle" fill="#333" transform="rotate(-90 620.0 1046.0)">0,98</text>
<text x="620.0" y="1120.4" font-size="12" text-anchor="middle" fill="#333" transform="rotate(-90 620.0 1120.4)">2,02</text>
<text x="620.0" y="1191.0" font-size="12" text-anchor="middle" fill="#333" transform="rotate(-90 620.0 1191.0)">0,70</text>
<text x="620.0" y="1240.0" font-size="12" text-anchor="middle" fill="#333" transform="rotate(-90 620.0 1240.0)">0,68</text>
<text x="620.0" y="1308.0" font-size="12" text-anchor="middle" fill="#333" transform="rotate(-90 620.0 1308.0)">2,02</text>
<text x="620.0" y="1375.0" font-size="12" text-anchor="middle" fill="#333" transform="rotate(-90 620.0 1375.0)">0,68</text>
<text x="620.0" y="1500.0" font-size="12" text-anchor="middle" fill="#333" transform="rotate(-90 620.0 1500.0)">3,70</text>
<text x="620.0" y="1640.0" font-size="12" text-anchor="middle" fill="#333" transform="rotate(-90 620.0 1640.0)">0,43</text>
<text x="606.0" y="608.0" font-size="12" text-anchor="middle" fill="#333" transform="rotate(-90 606.0 608.0)">0,30</text>
<text x="606.0" y="810.0" font-size="12" text-anchor="middle" fill="#333" transform="rotate(-90 606.0 810.0)">0,30</text>
<text x="606.0" y="1012.0" font-size="12" text-anchor="middle" fill="#333" transform="rotate(-90 606.0 1012.0)">0,30</text>
<text x="606.0" y="1215.0" font-size="12" text-anchor="middle" fill="#333" transform="rotate(-90 606.0 1215.0)">0,30</text>
<text x="619.0" y="1424.0" font-size="12" text-anchor="middle" fill="#333" transform="rotate(-90 619.0 1424.0)">0,30</text>
<text x="855.0" y="1813.0" font-size="13" text-anchor="middle" fill="#222">1,50</text>
<text x="943.0" y="1813.0" font-size="13" text-anchor="middle" fill="#222">2,02</text>
<text x="1020.0" y="1813.0" font-size="13" text-anchor="middle" fill="#222">1,01</text>
<text x="1087.0" y="1813.0" font-size="13" text-anchor="middle" fill="#222">0,99</text>
<text x="1163.0" y="1813.0" font-size="13" text-anchor="middle" fill="#222">2,02</text>
<text x="1302.0" y="1813.0" font-size="13" text-anchor="middle" fill="#222">3,46</text>
<text x="1433.0" y="1813.0" font-size="13" text-anchor="middle" fill="#222">1,50</text>
<text x="1497.0" y="1813.0" font-size="13" text-anchor="middle" fill="#222">0,96</text>
<text x="1553.0" y="1813.0" font-size="13" text-anchor="middle" fill="#222">1,50</text>
<text x="1683.0" y="1813.0" font-size="13" text-anchor="middle" fill="#222">3,46</text>
<text x="1816.0" y="1813.0" font-size="13" text-anchor="middle" fill="#222">2,02</text>
<text x="1898.0" y="1813.0" font-size="13" text-anchor="middle" fill="#222">0,99</text>
<text x="1950.0" y="1813.0" font-size="13" text-anchor="middle" fill="#222">0,30</text>
<text x="2037.0" y="1813.0" font-size="13" text-anchor="middle" fill="#222">4,00</text>
<text x="2120.0" y="1813.0" font-size="13" text-anchor="middle" fill="#222">0,30</text>
<text x="2252.0" y="1813.0" font-size="13" text-anchor="middle" fill="#222">4,00</text>
<text x="2338.0" y="1813.0" font-size="13" text-anchor="middle" fill="#222">0,30</text>
<text x="2481.0" y="1813.0" font-size="13" text-anchor="middle" fill="#222">4,48</text>
<text x="1052.0" y="1795.0" font-size="13" text-anchor="middle" fill="#222">0,30</text>
<path d="M814.0 1803.0L814.0 1806.0" stroke="#000" stroke-width="1.2"/>
<path d="M892.0 1803.0L892.0 1806.0" stroke="#000" stroke-width="1.2"/>
<path d="M992.0 1803.0L992.0 1806.0" stroke="#000" stroke-width="1.2"/>
<path d="M1044.0 1803.0L1044.0 1806.0" stroke="#000" stroke-width="1.2"/>
<path d="M1060.0 1803.0L1060.0 1806.0" stroke="#000" stroke-width="1.2"/>
<path d="M1112.0 1803.0L1112.0 1806.0" stroke="#000" stroke-width="1.2"/>
<path d="M1212.0 1803.0L1212.0 1806.0" stroke="#000" stroke-width="1.2"/>
<path d="M1392.0 1803.0L1392.0 1806.0" stroke="#000" stroke-width="1.2"/>
<path d="M1466.0 1803.0L1466.0 1806.0" stroke="#000" stroke-width="1.2"/>
<path d="M1510.0 1803.0L1510.0 1806.0" stroke="#000" stroke-width="1.2"/>
<path d="M1586.0 1803.0L1586.0 1806.0" stroke="#000" stroke-width="1.2"/>
<path d="M1764.0 1803.0L1764.0 1806.0" stroke="#000" stroke-width="1.2"/>
<path d="M1864.0 1803.0L1864.0 1806.0" stroke="#000" stroke-width="1.2"/>
<path d="M1923.0 1803.0L1923.0 1806.0" stroke="#000" stroke-width="1.2"/>
<path d="M1938.0 1803.0L1938.0 1806.0" stroke="#000" stroke-width="1.2"/>
<path d="M2134.0 1803.0L2134.0 1806.0" stroke="#000" stroke-width="1.2"/>
<path d="M2149.0 1803.0L2149.0 1806.0" stroke="#000" stroke-width="1.2"/>
<path d="M2351.0 1803.0L2351.0 1806.0" stroke="#000" stroke-width="1.2"/>
<path d="M2366.0 1803.0L2366.0 1806.0" stroke="#000" stroke-width="1.2"/>
<path d="M942.0 347.0L942.0 446.0" stroke="#000" stroke-width="1.2"/>
<text x="937.0" y="384.0" font-size="13" text-anchor="start" fill="#333" transform="rotate(-90 937.0 384.0)">2,00</text>
<text x="958.0" y="384.0" font-size="13" text-anchor="start" fill="#333" transform="rotate(-90 958.0 384.0)">1,50</text>
<text x="942.0" y="344.0" font-size="13" text-anchor="middle" fill="#222">01</text>
<path d="M1161.6 347.0L1161.6 446.0" stroke="#000" stroke-width="1.2"/>
<text x="1156.6" y="384.0" font-size="13" text-anchor="start" fill="#333" transform="rotate(-90 1156.6 384.0)">2,00</text>
<text x="1177.6" y="384.0" font-size="13" text-anchor="start" fill="#333" transform="rotate(-90 1177.6 384.0)">1,50</text>
<text x="1161.6" y="344.0" font-size="13" text-anchor="middle" fill="#222">02</text>
<path d="M1380.0 388.0L1380.0 446.0" stroke="#000" stroke-width="1.2"/>
<path d="M1597.0 385.0L1597.0 446.0" stroke="#000" stroke-width="1.2"/>
<text x="1591.0" y="384.0" font-size="12" text-anchor="start" fill="#333" transform="rotate(-90 1591.0 384.0)">2,00</text>
<path d="M2195.6 347.0L2195.6 446.0" stroke="#000" stroke-width="1.2"/>
<text x="2190.6" y="384.0" font-size="13" text-anchor="start" fill="#333" transform="rotate(-90 2190.6 384.0)">1,00</text>
<text x="2211.6" y="384.0" font-size="13" text-anchor="start" fill="#333" transform="rotate(-90 2211.6 384.0)">0,80</text>
<text x="2195.6" y="344.0" font-size="13" text-anchor="middle" fill="#222">06</text>
<path d="M2468.0 347.0L2468.0 446.0" stroke="#000" stroke-width="1.2"/>
<text x="2463.0" y="384.0" font-size="13" text-anchor="start" fill="#333" transform="rotate(-90 2463.0 384.0)">2,00</text>
<text x="2484.0" y="384.0" font-size="13" text-anchor="start" fill="#333" transform="rotate(-90 2484.0 384.0)">1,50</text>
<text x="2468.0" y="344.0" font-size="13" text-anchor="middle" fill="#222">07</text>
<path d="M1995.0 388.0L1995.0 446.0" stroke="#000" stroke-width="1.2"/>
<rect x="1785.0" y="338.0" width="12.0" height="24.0" fill="#fff" stroke="#000" stroke-width="1.3"/>
<text x="1791.0" y="354.5" font-size="13" text-anchor="middle" fill="#333">1</text>
<path d="M1791.0 362.0L1791.0 430.0" stroke="#000" stroke-width="1.2"/>
<path d="M774.0 506.5L874.0 506.5" stroke="#000" stroke-width="1.2"/>
<text x="810.0" y="501.5" font-size="13" text-anchor="end" fill="#222">2,00</text>
<text x="810.0" y="521.5" font-size="13" text-anchor="end" fill="#222">1,50</text>
<text x="774.0" y="512.5" font-size="11" text-anchor="middle" fill="#222" transform="rotate(-90 774.0 512.5)">21</text>
<path d="M774.0 708.6L874.0 708.6" stroke="#000" stroke-width="1.2"/>
<text x="810.0" y="703.6" font-size="13" text-anchor="end" fill="#222">2,00</text>
<text x="810.0" y="723.6" font-size="13" text-anchor="end" fill="#222">1,50</text>
<text x="774.0" y="714.6" font-size="11" text-anchor="middle" fill="#222" transform="rotate(-90 774.0 714.6)">20</text>
<path d="M774.0 911.0L874.0 911.0" stroke="#000" stroke-width="1.2"/>
<text x="810.0" y="906.0" font-size="13" text-anchor="end" fill="#222">2,00</text>
<text x="810.0" y="926.0" font-size="13" text-anchor="end" fill="#222">1,50</text>
<text x="774.0" y="917.0" font-size="11" text-anchor="middle" fill="#222" transform="rotate(-90 774.0 917.0)">19</text>
<path d="M774.0 1120.4L874.0 1120.4" stroke="#000" stroke-width="1.2"/>
<text x="810.0" y="1115.4" font-size="13" text-anchor="end" fill="#222">2,00</text>
<text x="810.0" y="1135.4" font-size="13" text-anchor="end" fill="#222">1,50</text>
<text x="774.0" y="1126.4" font-size="11" text-anchor="middle" fill="#222" transform="rotate(-90 774.0 1126.4)">18</text>
<path d="M774.0 1308.0L874.0 1308.0" stroke="#000" stroke-width="1.2"/>
<text x="810.0" y="1303.0" font-size="13" text-anchor="end" fill="#222">2,00</text>
<text x="810.0" y="1323.0" font-size="13" text-anchor="end" fill="#222">1,50</text>
<text x="774.0" y="1314.0" font-size="11" text-anchor="middle" fill="#222" transform="rotate(-90 774.0 1314.0)">17</text>
<path d="M942.0 1578.7L942.0 1660.7" stroke="#000" stroke-width="1.2"/>
<text x="936.0" y="1650.7" font-size="12" text-anchor="start" fill="#333" transform="rotate(-90 936.0 1650.7)">2,00</text>
<text x="957.0" y="1650.7" font-size="12" text-anchor="start" fill="#333" transform="rotate(-90 957.0 1650.7)">1,50</text>
<text x="942.0" y="1672.7" font-size="13" text-anchor="middle" fill="#222">16</text>
<path d="M1161.6 1578.7L1161.6 1660.7" stroke="#000" stroke-width="1.2"/>
<text x="1155.6" y="1650.7" font-size="12" text-anchor="start" fill="#333" transform="rotate(-90 1155.6 1650.7)">2,00</text>
<text x="1176.6" y="1650.7" font-size="12" text-anchor="start" fill="#333" transform="rotate(-90 1176.6 1650.7)">1,50</text>
<text x="1161.6" y="1672.7" font-size="13" text-anchor="middle" fill="#222">15</text>
<path d="M1815.0 1578.7L1815.0 1660.7" stroke="#000" stroke-width="1.2"/>
<text x="1809.0" y="1650.7" font-size="12" text-anchor="start" fill="#333" transform="rotate(-90 1809.0 1650.7)">2,00</text>
<text x="1830.0" y="1650.7" font-size="12" text-anchor="start" fill="#333" transform="rotate(-90 1830.0 1650.7)">1,50</text>
<text x="1815.0" y="1672.7" font-size="13" text-anchor="middle" fill="#222">14</text>
<path d="M1101.0 564.0L1101.0 646.0" stroke="#000" stroke-width="1.2"/>
<text x="1096.0" y="601.0" font-size="13" text-anchor="start" fill="#333" transform="rotate(-90 1096.0 601.0)">1,00</text>
<text x="1117.0" y="601.0" font-size="13" text-anchor="start" fill="#333" transform="rotate(-90 1117.0 601.0)">2,10</text>
<text x="1101.0" y="561.0" font-size="13" text-anchor="middle" fill="#222">01</text>
<path d="M1425.5 564.0L1425.5 646.0" stroke="#000" stroke-width="1.2"/>
<text x="1420.5" y="601.0" font-size="13" text-anchor="start" fill="#333" transform="rotate(-90 1420.5 601.0)">1,00</text>
<text x="1441.5" y="601.0" font-size="13" text-anchor="start" fill="#333" transform="rotate(-90 1441.5 601.0)">2,10</text>
<text x="1425.5" y="561.0" font-size="13" text-anchor="middle" fill="#222">02</text>
<path d="M1551.0 564.0L1551.0 646.0" stroke="#000" stroke-width="1.2"/>
<text x="1546.0" y="601.0" font-size="13" text-anchor="start" fill="#333" transform="rotate(-90 1546.0 601.0)">1,00</text>
<text x="1567.0" y="601.0" font-size="13" text-anchor="start" fill="#333" transform="rotate(-90 1567.0 601.0)">2,10</text>
<text x="1551.0" y="561.0" font-size="13" text-anchor="middle" fill="#222">03</text>
<path d="M1994.6 564.0L1994.6 646.0" stroke="#000" stroke-width="1.2"/>
<text x="1989.6" y="601.0" font-size="13" text-anchor="start" fill="#333" transform="rotate(-90 1989.6 601.0)">1,00</text>
<text x="2010.6" y="601.0" font-size="13" text-anchor="start" fill="#333" transform="rotate(-90 2010.6 601.0)">2,10</text>
<text x="1994.6" y="561.0" font-size="13" text-anchor="middle" fill="#222">04</text>
<path d="M2195.6 564.0L2195.6 646.0" stroke="#000" stroke-width="1.2"/>
<text x="2190.6" y="601.0" font-size="13" text-anchor="start" fill="#333" transform="rotate(-90 2190.6 601.0)">1,00</text>
<text x="2211.6" y="601.0" font-size="13" text-anchor="start" fill="#333" transform="rotate(-90 2211.6 601.0)">2,10</text>
<text x="2195.6" y="561.0" font-size="13" text-anchor="middle" fill="#222">05A</text>
<path d="M2316.0 564.0L2316.0 646.0" stroke="#000" stroke-width="1.2"/>
<text x="2311.0" y="601.0" font-size="13" text-anchor="start" fill="#333" transform="rotate(-90 2311.0 601.0)">1,00</text>
<text x="2332.0" y="601.0" font-size="13" text-anchor="start" fill="#333" transform="rotate(-90 2332.0 601.0)">2,10</text>
<text x="2316.0" y="561.0" font-size="13" text-anchor="middle" fill="#222">05B</text>
<path d="M2525.0 564.0L2525.0 646.0" stroke="#000" stroke-width="1.2"/>
<text x="2520.0" y="601.0" font-size="13" text-anchor="start" fill="#333" transform="rotate(-90 2520.0 601.0)">1,00</text>
<text x="2541.0" y="601.0" font-size="13" text-anchor="start" fill="#333" transform="rotate(-90 2541.0 601.0)">2,10</text>
<text x="2525.0" y="561.0" font-size="13" text-anchor="middle" fill="#222">06</text>
<path d="M1988.0 768.0L1988.0 846.0" stroke="#000" stroke-width="1.2"/>
<text x="1983.0" y="846.0" font-size="13" text-anchor="start" fill="#333" transform="rotate(-90 1983.0 846.0)">1,00</text>
<text x="2004.0" y="846.0" font-size="13" text-anchor="start" fill="#333" transform="rotate(-90 2004.0 846.0)">2,10</text>
<text x="1988.0" y="868.0" font-size="13" text-anchor="middle" fill="#222">08</text>
<path d="M2251.0 768.0L2251.0 846.0" stroke="#000" stroke-width="1.2"/>
<text x="2246.0" y="846.0" font-size="13" text-anchor="start" fill="#333" transform="rotate(-90 2246.0 846.0)">1,00</text>
<text x="2267.0" y="846.0" font-size="13" text-anchor="start" fill="#333" transform="rotate(-90 2267.0 846.0)">2,10</text>
<text x="2251.0" y="868.0" font-size="13" text-anchor="middle" fill="#222">08A</text>
<path d="M2512.6 768.0L2512.6 846.0" stroke="#000" stroke-width="1.2"/>
<text x="2507.6" y="846.0" font-size="13" text-anchor="start" fill="#333" transform="rotate(-90 2507.6 846.0)">1,00</text>
<text x="2528.6" y="846.0" font-size="13" text-anchor="start" fill="#333" transform="rotate(-90 2528.6 846.0)">2,10</text>
<text x="2512.6" y="868.0" font-size="13" text-anchor="middle" fill="#222">09</text>
<path d="M1988.0 981.0L1988.0 1059.0" stroke="#000" stroke-width="1.2"/>
<text x="1983.0" y="1059.0" font-size="13" text-anchor="start" fill="#333" transform="rotate(-90 1983.0 1059.0)">1,00</text>
<text x="2004.0" y="1059.0" font-size="13" text-anchor="start" fill="#333" transform="rotate(-90 2004.0 1059.0)">2,10</text>
<text x="1988.0" y="1081.0" font-size="13" text-anchor="middle" fill="#222">10</text>
<path d="M2251.0 981.0L2251.0 1059.0" stroke="#000" stroke-width="1.2"/>
<text x="2246.0" y="1059.0" font-size="13" text-anchor="start" fill="#333" transform="rotate(-90 2246.0 1059.0)">2,00</text>
<text x="2267.0" y="1059.0" font-size="13" text-anchor="start" fill="#333" transform="rotate(-90 2267.0 1059.0)">1,50</text>
<text x="2251.0" y="1081.0" font-size="13" text-anchor="middle" fill="#222"></text>
<path d="M2512.6 981.0L2512.6 1059.0" stroke="#000" stroke-width="1.2"/>
<text x="2507.6" y="1059.0" font-size="13" text-anchor="start" fill="#333" transform="rotate(-90 2507.6 1059.0)">1,00</text>
<text x="2528.6" y="1059.0" font-size="13" text-anchor="start" fill="#333" transform="rotate(-90 2528.6 1059.0)">2,10</text>
<text x="2512.6" y="1081.0" font-size="13" text-anchor="middle" fill="#222">11</text>
<path d="M1425.5 1168.0L1425.5 1250.0" stroke="#000" stroke-width="1.2"/>
<text x="1420.5" y="1205.0" font-size="13" text-anchor="start" fill="#333" transform="rotate(-90 1420.5 1205.0)">1,00</text>
<text x="1441.5" y="1205.0" font-size="13" text-anchor="start" fill="#333" transform="rotate(-90 1441.5 1205.0)">2,10</text>
<text x="1425.5" y="1165.0" font-size="13" text-anchor="middle" fill="#222">15</text>
<path d="M1551.0 1168.0L1551.0 1250.0" stroke="#000" stroke-width="1.2"/>
<text x="1546.0" y="1205.0" font-size="13" text-anchor="start" fill="#333" transform="rotate(-90 1546.0 1205.0)">1,00</text>
<text x="1567.0" y="1205.0" font-size="13" text-anchor="start" fill="#333" transform="rotate(-90 1567.0 1205.0)">2,10</text>
<text x="1551.0" y="1165.0" font-size="13" text-anchor="middle" fill="#222">16</text>
<path d="M1425.5 1365.0L1425.5 1447.0" stroke="#000" stroke-width="1.2"/>
<text x="1420.5" y="1402.0" font-size="13" text-anchor="start" fill="#333" transform="rotate(-90 1420.5 1402.0)">1,00</text>
<text x="1441.5" y="1402.0" font-size="13" text-anchor="start" fill="#333" transform="rotate(-90 1441.5 1402.0)">2,10</text>
<text x="1425.5" y="1362.0" font-size="13" text-anchor="middle" fill="#222">17</text>
<path d="M1551.0 1365.0L1551.0 1447.0" stroke="#000" stroke-width="1.2"/>
<text x="1546.0" y="1402.0" font-size="13" text-anchor="start" fill="#333" transform="rotate(-90 1546.0 1402.0)">1,00</text>
<text x="1567.0" y="1402.0" font-size="13" text-anchor="start" fill="#333" transform="rotate(-90 1567.0 1402.0)">2,10</text>
<text x="1551.0" y="1362.0" font-size="13" text-anchor="middle" fill="#222">18</text>
<path d="M1003.0 764.0L1086.0 764.0" stroke="#000" stroke-width="1.2"/>
<text x="1041.0" y="759.0" font-size="13" text-anchor="end" fill="#222">1,00</text>
<text x="1041.0" y="780.0" font-size="13" text-anchor="end" fill="#222">2,10</text>
<text x="997.0" y="770.0" font-size="11" text-anchor="middle" fill="#222" transform="rotate(-90 997.0 770.0)">07</text>
<path d="M1003.0 1167.0L1086.0 1167.0" stroke="#000" stroke-width="1.2"/>
<text x="1041.0" y="1162.0" font-size="13" text-anchor="end" fill="#222">1,00</text>
<text x="1041.0" y="1183.0" font-size="13" text-anchor="end" fill="#222">2,10</text>
<text x="997.0" y="1173.0" font-size="11" text-anchor="middle" fill="#222" transform="rotate(-90 997.0 1173.0)">12</text>
<path d="M1003.0 1261.0L1086.0 1261.0" stroke="#000" stroke-width="1.2"/>
<text x="1041.0" y="1256.0" font-size="13" text-anchor="end" fill="#222">1,00</text>
<text x="1041.0" y="1277.0" font-size="13" text-anchor="end" fill="#222">2,10</text>
<text x="997.0" y="1267.0" font-size="11" text-anchor="middle" fill="#222" transform="rotate(-90 997.0 1267.0)">13</text>
<path d="M1148.0 1268.0L1148.0 1340.0" stroke="#000" stroke-width="1.2"/>
<text x="1143.0" y="1341.0" font-size="12" text-anchor="start" fill="#333" transform="rotate(-90 1143.0 1341.0)">1,00</text>
<text x="1163.0" y="1341.0" font-size="12" text-anchor="start" fill="#333" transform="rotate(-90 1163.0 1341.0)">2,10</text>
<text x="1148.0" y="1364.0" font-size="13" text-anchor="middle" fill="#222">14</text>
<path d="M1243.0 1350.0L1320.0 1350.0" stroke="#000" stroke-width="1.2"/>
<text x="1285.0" y="1346.0" font-size="13" text-anchor="start" fill="#222">1,00</text>
<text x="1285.0" y="1365.0" font-size="13" text-anchor="start" fill="#222">1,00</text>
<text x="1333.0" y="1356.0" font-size="11" text-anchor="middle" fill="#222" transform="rotate(90 1333.0 1356.0)">14</text>
<path d="M1895.0 1453.0L1982.0 1453.0" stroke="#000" stroke-width="1.2"/>
<text x="1945.0" y="1449.0" font-size="13" text-anchor="start" fill="#222">1,00</text>
<text x="1945.0" y="1469.0" font-size="13" text-anchor="start" fill="#222">2,10</text>
<text x="1994.0" y="1459.0" font-size="11" text-anchor="middle" fill="#222" transform="rotate(90 1994.0 1459.0)">19</text>
<path d="M1325.0 868.0L1325.0 955.0" stroke="#000" stroke-width="1.2"/>
<text x="1320.0" y="938.0" font-size="12" text-anchor="start" fill="#333" transform="rotate(-90 1320.0 938.0)">1,00</text>
<text x="1340.0" y="938.0" font-size="12" text-anchor="start" fill="#333" transform="rotate(-90 1340.0 938.0)">2,10</text>
<path d="M2022.0 445.0L2112.0 445.0" stroke="#000" stroke-width="1.2"/>
<text x="2082.0" y="441.0" font-size="13" text-anchor="middle" fill="#222">1,00</text>
<text x="2082.0" y="461.0" font-size="13" text-anchor="middle" fill="#222">2,10</text>
<path d="M2395.0 445.0L2478.0 445.0" stroke="#000" stroke-width="1.2"/>
<text x="2420.0" y="441.0" font-size="13" text-anchor="middle" fill="#222">1,00</text>
<text x="2420.0" y="461.0" font-size="13" text-anchor="middle" fill="#222">2,10</text>
<text x="2389.0" y="450.0" font-size="11" text-anchor="middle" fill="#222" transform="rotate(-90 2389.0 450.0)">04</text>
<path d="M2022.0 511.5L2112.0 511.5" stroke="#000" stroke-width="1.2"/>
<text x="2082.0" y="507.5" font-size="13" text-anchor="middle" fill="#222">1,00</text>
<text x="2082.0" y="527.5" font-size="13" text-anchor="middle" fill="#222">2,10</text>
<path d="M2395.0 511.5L2478.0 511.5" stroke="#000" stroke-width="1.2"/>
<text x="2420.0" y="507.5" font-size="13" text-anchor="middle" fill="#222">1,00</text>
<text x="2420.0" y="527.5" font-size="13" text-anchor="middle" fill="#222">2,10</text>
<text x="2389.0" y="516.5" font-size="11" text-anchor="middle" fill="#222" transform="rotate(-90 2389.0 516.5)">04</text>
<path d="M2022.0 578.0L2112.0 578.0" stroke="#000" stroke-width="1.2"/>
<text x="2082.0" y="574.0" font-size="13" text-anchor="middle" fill="#222">1,00</text>
<text x="2082.0" y="594.0" font-size="13" text-anchor="middle" fill="#222">2,10</text>
<path d="M2395.0 578.0L2478.0 578.0" stroke="#000" stroke-width="1.2"/>
<text x="2420.0" y="574.0" font-size="13" text-anchor="middle" fill="#222">1,00</text>
<text x="2420.0" y="594.0" font-size="13" text-anchor="middle" fill="#222">2,10</text>
<text x="2389.0" y="583.0" font-size="11" text-anchor="middle" fill="#222" transform="rotate(-90 2389.0 583.0)">04</text>
<path d="M2006.0 555.0L2056.0 555.0" stroke="#000" stroke-width="1.2"/>
<path d="M2518.0 709.0L2600.0 709.0" stroke="#000" stroke-width="1.2"/>
<text x="2542.0" y="704.0" font-size="13" text-anchor="middle" fill="#222">1,00</text>
<text x="2542.0" y="725.0" font-size="13" text-anchor="middle" fill="#222">2,10</text>
<text x="2512.0" y="715.0" font-size="11" text-anchor="middle" fill="#222" transform="rotate(-90 2512.0 715.0)">20</text>
<path d="M2535.0 448.5L2600.0 448.5" stroke="#000" stroke-width="1.2"/>
<path d="M2535.0 554.0L2600.0 554.0" stroke="#000" stroke-width="1.2"/>
<path d="M2535.0 640.0L2600.0 640.0" stroke="#000" stroke-width="1.2"/>
<path d="M2535.0 911.0L2600.0 911.0" stroke="#000" stroke-width="1.2"/>
<path d="M2535.0 1113.0L2600.0 1113.0" stroke="#000" stroke-width="1.2"/>
<path d="M2535.0 1176.0L2600.0 1176.0" stroke="#000" stroke-width="1.2"/>
<path d="M2535.0 1307.0L2600.0 1307.0" stroke="#000" stroke-width="1.2"/>
<path d="M2535.0 1503.5L2600.0 1503.5" stroke="#000" stroke-width="1.2"/>
<rect x="977.0" y="443.0" width="24.0" height="12.0" fill="#fff" stroke="#000" stroke-width="1.3"/>
<text x="989.0" y="453.5" font-size="14" text-anchor="middle" fill="#333" transform="rotate(-90 989.0 449.0) translate(0 0)">8</text>
<path d="M1001.0 449.0L1068.0 449.0" stroke="#000" stroke-width="1.2"/>
<rect x="1195.0" y="443.0" width="24.0" height="12.0" fill="#fff" stroke="#000" stroke-width="1.3"/>
<text x="1207.0" y="453.5" font-size="14" text-anchor="middle" fill="#333" transform="rotate(-90 1207.0 449.0) translate(0 0)">8</text>
<path d="M1219.0 449.0L1285.0 449.0" stroke="#000" stroke-width="1.2"/>
<rect x="1635.0" y="443.0" width="24.0" height="12.0" fill="#fff" stroke="#000" stroke-width="1.3"/>
<text x="1647.0" y="453.5" font-size="14" text-anchor="middle" fill="#333" transform="rotate(-90 1647.0 449.0) translate(0 0)">8</text>
<path d="M1659.0 449.0L1726.0 449.0" stroke="#000" stroke-width="1.2"/>
<rect x="1973.0" y="500.0" width="24.0" height="12.0" fill="#fff" stroke="#000" stroke-width="1.3"/>
<text x="1985.0" y="510.5" font-size="14" text-anchor="middle" fill="#333" transform="rotate(-90 1985.0 506.0) translate(0 0)">8</text>
<path d="M1973.0 506.0L1925.0 506.0" stroke="#000" stroke-width="1.2"/>
<rect x="2194.0" y="500.0" width="24.0" height="12.0" fill="#fff" stroke="#000" stroke-width="1.3"/>
<text x="2206.0" y="510.5" font-size="14" text-anchor="middle" fill="#333" transform="rotate(-90 2206.0 506.0) translate(0 0)">8</text>
<path d="M2194.0 506.0L2148.0 506.0" stroke="#000" stroke-width="1.2"/>
<rect x="2282.0" y="500.0" width="24.0" height="12.0" fill="#fff" stroke="#000" stroke-width="1.3"/>
<text x="2294.0" y="510.5" font-size="14" text-anchor="middle" fill="#333" transform="rotate(-90 2294.0 506.0) translate(0 0)">8</text>
<path d="M2306.0 506.0L2362.0 506.0" stroke="#000" stroke-width="1.2"/>
<rect x="977.0" y="975.0" width="24.0" height="12.0" fill="#fff" stroke="#000" stroke-width="1.3"/>
<text x="989.0" y="985.5" font-size="14" text-anchor="middle" fill="#333" transform="rotate(-90 989.0 981.0) translate(0 0)">8</text>
<path d="M1001.0 981.0L1068.0 981.0" stroke="#000" stroke-width="1.2"/>
<rect x="977.0" y="1497.0" width="24.0" height="12.0" fill="#fff" stroke="#000" stroke-width="1.3"/>
<text x="989.0" y="1507.5" font-size="14" text-anchor="middle" fill="#333" transform="rotate(-90 989.0 1503.0) translate(0 0)">8</text>
<path d="M1001.0 1503.0L1068.0 1503.0" stroke="#000" stroke-width="1.2"/>
<rect x="1193.0" y="536.0" width="12.0" height="24.0" fill="#fff" stroke="#000" stroke-width="1.3"/>
<text x="1199.0" y="552.5" font-size="13" text-anchor="middle" fill="#333">8</text>
<path d="M1199.0 560.0L1199.0 625.0" stroke="#000" stroke-width="1.2"/>
<rect x="1634.8" y="536.0" width="12.0" height="24.0" fill="#fff" stroke="#000" stroke-width="1.3"/>
<text x="1640.8" y="552.5" font-size="13" text-anchor="middle" fill="#333">8</text>
<path d="M1640.8 560.0L1640.8 625.0" stroke="#000" stroke-width="1.2"/>
<rect x="1959.0" y="536.0" width="12.0" height="24.0" fill="#fff" stroke="#000" stroke-width="1.3"/>
<text x="1965.0" y="552.5" font-size="13" text-anchor="middle" fill="#333">8</text>
<path d="M1965.0 560.0L1965.0 625.0" stroke="#000" stroke-width="1.2"/>
<rect x="2259.0" y="536.0" width="12.0" height="24.0" fill="#fff" stroke="#000" stroke-width="1.3"/>
<text x="2265.0" y="552.5" font-size="13" text-anchor="middle" fill="#333">8</text>
<path d="M2265.0 560.0L2265.0 625.0" stroke="#000" stroke-width="1.2"/>
<rect x="2503.0" y="536.0" width="12.0" height="24.0" fill="#fff" stroke="#000" stroke-width="1.3"/>
<text x="2509.0" y="552.5" font-size="13" text-anchor="middle" fill="#333">8</text>
<path d="M2509.0 560.0L2509.0 625.0" stroke="#000" stroke-width="1.2"/>
<rect x="2323.0" y="733.0" width="12.0" height="24.0" fill="#fff" stroke="#000" stroke-width="1.3"/>
<text x="2329.0" y="749.5" font-size="13" text-anchor="middle" fill="#333">8</text>
<path d="M2329.0 757.0L2329.0 800.0" stroke="#000" stroke-width="1.2"/>
<rect x="1764.0" y="1459.0" width="12.0" height="24.0" fill="#fff" stroke="#000" stroke-width="1.3"/>
<text x="1770.0" y="1475.5" font-size="13" text-anchor="middle" fill="#333">8</text>
<path d="M1770.0 1459.0L1770.0 1396.0" stroke="#000" stroke-width="1.2"/>
<rect x="1224.0" y="1213.0" width="12.0" height="24.0" fill="#fff" stroke="#000" stroke-width="1.3"/>
<text x="1230.0" y="1229.5" font-size="13" text-anchor="middle" fill="#333">8</text>
<path d="M1230.0 1237.0L1230.0 1300.0" stroke="#000" stroke-width="1.2"/>
<rect x="2323.0" y="949.0" width="12.0" height="24.0" fill="#fff" stroke="#000" stroke-width="1.3"/>
<text x="2329.0" y="965.5" font-size="13" text-anchor="middle" fill="#333">7</text>
<path d="M2329.0 973.0L2329.0 1040.0" stroke="#000" stroke-width="1.2"/>
<path d="M1885.0 976.0L1950.0 976.0" stroke="#000" stroke-width="1.2"/>
<rect x="1861.0" y="970.0" width="24.0" height="12.0" fill="#fff" stroke="#000" stroke-width="1.3"/>
<text x="1873.0" y="980.5" font-size="14" text-anchor="middle" fill="#333" transform="rotate(-90 1873.0 976.0) translate(0 0)">9</text>
<rect x="1333.0" y="1309.0" width="24.0" height="12.0" fill="#fff" stroke="#000" stroke-width="1.3"/>
<text x="1345.0" y="1319.5" font-size="14" text-anchor="middle" fill="#333" transform="rotate(-90 1345.0 1315.0) translate(0 0)">7</text>
<path d="M1266.0 1315.0L1333.0 1315.0" stroke="#000" stroke-width="1.2"/>
<rect x="1621.0" y="1343.0" width="24.0" height="12.0" fill="#fff" stroke="#000" stroke-width="1.3"/>
<text x="1633.0" y="1353.5" font-size="14" text-anchor="middle" fill="#333" transform="rotate(-90 1633.0 1349.0) translate(0 0)">7</text>
<path d="M1645.0 1349.0L1711.0 1349.0" stroke="#000" stroke-width="1.2"/>
<rect x="1985.0" y="1343.0" width="24.0" height="12.0" fill="#fff" stroke="#000" stroke-width="1.3"/>
<text x="1997.0" y="1353.5" font-size="14" text-anchor="middle" fill="#333" transform="rotate(-90 1997.0 1349.0) translate(0 0)">7</text>
<path d="M1920.0 1349.0L1985.0 1349.0" stroke="#000" stroke-width="1.2"/>
<rect x="1979.0" y="1480.0" width="24.0" height="12.0" fill="#fff" stroke="#000" stroke-width="1.3"/>
<text x="1991.0" y="1490.5" font-size="14" text-anchor="middle" fill="#333" transform="rotate(-90 1991.0 1486.0) translate(0 0)">7</text>
<path d="M1912.0 1486.0L1979.0 1486.0" stroke="#000" stroke-width="1.2"/>
<rect x="767.0" y="1521.0" width="24.0" height="12.0" fill="#fff" stroke="#000" stroke-width="1.3"/>
<text x="779.0" y="1531.5" font-size="14" text-anchor="middle" fill="#333" transform="rotate(-90 779.0 1527.0) translate(0 0)">1</text>
<path d="M791.0 1527.0L860.0 1527.0" stroke="#000" stroke-width="1.2"/>
<rect x="1311.0" y="1521.0" width="24.0" height="12.0" fill="#fff" stroke="#000" stroke-width="1.3"/>
<text x="1323.0" y="1531.5" font-size="14" text-anchor="middle" fill="#333" transform="rotate(-90 1323.0 1527.0) translate(0 0)">1</text>
<path d="M1244.0 1527.0L1311.0 1527.0" stroke="#000" stroke-width="1.2"/>
<rect x="1643.0" y="1516.0" width="24.0" height="12.0" fill="#fff" stroke="#000" stroke-width="1.3"/>
<text x="1655.0" y="1526.5" font-size="14" text-anchor="middle" fill="#333" transform="rotate(-90 1655.0 1522.0) translate(0 0)">1</text>
<path d="M1667.0 1522.0L1732.0 1522.0" stroke="#000" stroke-width="1.2"/>
<rect x="1051.0" y="1644.0" width="12.0" height="24.0" fill="#fff" stroke="#000" stroke-width="1.3"/>
<text x="1057.0" y="1660.5" font-size="13" text-anchor="middle" fill="#333">3</text>
<path d="M1057.0 1600.0L1057.0 1644.0" stroke="#000" stroke-width="1.2"/>
<rect x="1079.0" y="1644.0" width="12.0" height="24.0" fill="#fff" stroke="#000" stroke-width="1.3"/>
<text x="1085.0" y="1660.5" font-size="13" text-anchor="middle" fill="#333">1</text>
<path d="M1085.0 1577.0L1085.0 1644.0" stroke="#000" stroke-width="1.2"/>
<rect x="2245.7" y="1644.0" width="12.0" height="24.0" fill="#fff" stroke="#000" stroke-width="1.3"/>
<text x="2251.7" y="1660.5" font-size="13" text-anchor="middle" fill="#333">2</text>
<path d="M2251.7 1577.0L2251.7 1644.0" stroke="#000" stroke-width="1.2"/>
<rect x="2350.0" y="1644.0" width="12.0" height="24.0" fill="#fff" stroke="#000" stroke-width="1.3"/>
<text x="2356.0" y="1660.5" font-size="13" text-anchor="middle" fill="#333">3</text>
<path d="M2356.0 1577.0L2356.0 1644.0" stroke="#000" stroke-width="1.2"/>
<circle cx="1524" cy="981" r="10" fill="#fff" stroke="#555" stroke-width="0.800"/>
<path d="M1524 981L1524 971A10 10 0 0 0 1514 981ZM1524 981L1524 991A10 10 0 0 0 1534 981Z" fill="#000"/>
<path d="M1504.0 981.0L1544.0 981.0" stroke="#000" stroke-width="1.2"/>
<path d="M1524.0 961.0L1524.0 1001.0" stroke="#000" stroke-width="1.2"/>
<text x="1551.0" y="977.0" font-size="13" text-anchor="start" fill="#222">±0,00</text>
<path d="M1544.0 981.0L1588.0 981.0" stroke="#000" stroke-width="1.2"/>
<circle cx="1524" cy="1313" r="10" fill="#fff" stroke="#555" stroke-width="0.800"/>
<path d="M1524 1313L1524 1303A10 10 0 0 0 1514 1313ZM1524 1313L1524 1323A10 10 0 0 0 1534 1313Z" fill="#000"/>
<path d="M1504.0 1313.0L1544.0 1313.0" stroke="#000" stroke-width="1.2"/>
<path d="M1524.0 1293.0L1524.0 1333.0" stroke="#000" stroke-width="1.2"/>
<text x="1551.0" y="1309.0" font-size="13" text-anchor="start" fill="#222">±0,00</text>
<path d="M1544.0 1313.0L1588.0 1313.0" stroke="#000" stroke-width="1.2"/>
<circle cx="1524" cy="1545" r="10" fill="#fff" stroke="#555" stroke-width="0.800"/>
<path d="M1524 1545L1524 1535A10 10 0 0 0 1514 1545ZM1524 1545L1524 1555A10 10 0 0 0 1534 1545Z" fill="#000"/>
<path d="M1504.0 1545.0L1544.0 1545.0" stroke="#000" stroke-width="1.2"/>
<path d="M1524.0 1525.0L1524.0 1565.0" stroke="#000" stroke-width="1.2"/>
<text x="1551.0" y="1541.0" font-size="13" text-anchor="start" fill="#222">±0,00</text>
<path d="M1544.0 1545.0L1588.0 1545.0" stroke="#000" stroke-width="1.2"/>
<circle cx="2396" cy="1478" r="10" fill="#fff" stroke="#555" stroke-width="0.800"/>
<path d="M2396 1478L2396 1468A10 10 0 0 0 2386 1478ZM2396 1478L2396 1488A10 10 0 0 0 2406 1478Z" fill="#000"/>
<path d="M2376.0 1478.0L2416.0 1478.0" stroke="#000" stroke-width="1.2"/>
<path d="M2396.0 1458.0L2396.0 1498.0" stroke="#000" stroke-width="1.2"/>
<text x="2423.0" y="1474.0" font-size="13" text-anchor="start" fill="#222">±0,00</text>
<path d="M2416.0 1478.0L2460.0 1478.0" stroke="#000" stroke-width="1.2"/>
<circle cx="2396" cy="1550" r="10" fill="#fff" stroke="#555" stroke-width="0.800"/>
<path d="M2396 1550L2396 1540A10 10 0 0 0 2386 1550ZM2396 1550L2396 1560A10 10 0 0 0 2406 1550Z" fill="#000"/>
<path d="M2376.0 1550.0L2416.0 1550.0" stroke="#000" stroke-width="1.2"/>
<path d="M2396.0 1530.0L2396.0 1570.0" stroke="#000" stroke-width="1.2"/>
<text x="2423.0" y="1546.0" font-size="13" text-anchor="start" fill="#222">+1,25</text>
<path d="M2416.0 1550.0L2460.0 1550.0" stroke="#000" stroke-width="1.2"/>
<text x="896.0" y="475.0" font-size="16.5" text-anchor="start" fill="#222" font-weight="700">Büros</text>
<text x="896.0" y="495.5" font-size="12.5" text-anchor="start" fill="#222">31,24 m²</text>
<text x="1121.0" y="475.0" font-size="16.5" text-anchor="start" fill="#222" font-weight="700">Büro Leitung</text>
<text x="1230.0" y="495.5" font-size="12.5" text-anchor="end" fill="#222">15,31 m²</text>
<text x="1460.0" y="475.0" font-size="16.5" text-anchor="start" fill="#222" font-weight="700">Speisesaal</text>
<text x="1551.0" y="495.5" font-size="12.5" text-anchor="end" fill="#222">30,46 m²</text>
<text x="1789.0" y="475.0" font-size="16.5" text-anchor="start" fill="#222" font-weight="700">Stiege</text>
<text x="1789.0" y="495.5" font-size="12.5" text-anchor="start" fill="#222">15,72 m²</text>
<text x="1979.0" y="475.0" font-size="16.5" text-anchor="start" fill="#222" font-weight="700">WC</text>
<text x="1979.0" y="495.5" font-size="12.5" text-anchor="start" fill="#222">16,17 m²</text>
<text x="2167.0" y="475.0" font-size="16.5" text-anchor="start" fill="#222" font-weight="700">WC</text>
<text x="2167.0" y="495.5" font-size="12.5" text-anchor="start" fill="#222">7,90 m²</text>
<text x="2251.0" y="471.0" font-size="16.5" text-anchor="start" fill="#222" font-weight="700">Technikraum</text>
<text x="2356.0" y="491.5" font-size="12.5" text-anchor="end" fill="#222">7,48 m²</text>
<text x="2465.0" y="471.0" font-size="16.5" text-anchor="start" fill="#222" font-weight="700">WC</text>
<text x="2465.0" y="491.5" font-size="12.5" text-anchor="start" fill="#222">15,54 m²</text>
<text x="2160.0" y="703.0" font-size="16.5" text-anchor="start" fill="#222" font-weight="700">Gang</text>
<text x="2160.0" y="723.5" font-size="12.5" text-anchor="start" fill="#222">47,51 m²</text>
<text x="896.0" y="903.0" font-size="16.5" text-anchor="start" fill="#222" font-weight="700">Büros</text>
<text x="896.0" y="923.5" font-size="12.5" text-anchor="start" fill="#222">32,35 m²</text>
<text x="1456.0" y="903.0" font-size="16.5" text-anchor="start" fill="#222" font-weight="700">Lobby</text>
<text x="1456.0" y="923.5" font-size="12.5" text-anchor="start" fill="#222">197,73 m²</text>
<text x="1977.0" y="903.0" font-size="16.5" text-anchor="start" fill="#222" font-weight="700">Foyer</text>
<text x="1977.0" y="923.5" font-size="12.5" text-anchor="start" fill="#222">16,24 m²</text>
<text x="2199.0" y="903.0" font-size="16.5" text-anchor="start" fill="#222" font-weight="700">Kontrollraum</text>
<text x="2308.0" y="923.5" font-size="12.5" text-anchor="end" fill="#222">16,50 m²</text>
<text x="2465.0" y="900.0" font-size="16.5" text-anchor="start" fill="#222" font-weight="700">Foyer</text>
<text x="2465.0" y="920.5" font-size="12.5" text-anchor="start" fill="#222">14,58 m²</text>
<text x="1450.0" y="1284.0" font-size="16.5" text-anchor="start" fill="#222" font-weight="700">Eingang</text>
<text x="1518.0" y="1304.5" font-size="12.5" text-anchor="end" fill="#222">27,61 m²</text>
<text x="1789.0" y="1284.0" font-size="16.5" text-anchor="start" fill="#222" font-weight="700">Stiege</text>
<text x="1789.0" y="1304.5" font-size="12.5" text-anchor="start" fill="#222">15,52 m²</text>
<text x="921.0" y="1455.5" font-size="16.5" text-anchor="start" fill="#222" font-weight="700">Archiv</text>
<text x="921.0" y="1476.0" font-size="12.5" text-anchor="start" fill="#222">30,02 m²</text>
<text x="1120.0" y="1455.5" font-size="16.5" text-anchor="start" fill="#222" font-weight="700">Sicherheit</text>
<text x="1204.0" y="1476.0" font-size="12.5" text-anchor="end" fill="#222">23,10 m²</text>
<text x="1789.0" y="1541.0" font-size="16.5" text-anchor="start" fill="#222" font-weight="700">Lager</text>
<text x="1789.0" y="1561.5" font-size="12.5" text-anchor="start" fill="#222">15,29 m²</text>
<text x="2153.0" y="1541.0" font-size="16.5" text-anchor="start" fill="#222" font-weight="700">Veranstaltungssaal</text>
<text x="2311.0" y="1561.5" font-size="12.5" text-anchor="end" fill="#222">140,37 m²</text>
</g>
<g transform="translate(1161.0 478.7)">
<path d="M0 0C4 -12 14 -34 27 -41A15.500 13 -35 0 1 48 -22C40 -14 14 -2 0 0Z" fill="url(#shg)" filter="url(#bl)"/>
<path d="M0 0L-23.200 -45.900A26 26 0 0 1 0 -83.600Z" fill="#0a7ad8"/>
<path d="M0 0L23.200 -45.900A26 26 0 0 0 0 -83.600Z" fill="#0b90f7"/>
<circle cx="0" cy="-57.600" r="17.200" fill="#fbfbfb"/><path d="M0 -74.800A17.200 17.200 0 0 0 0 -40.400Z" fill="#e6e6e6"/>
<circle cx="0" cy="-57.600" r="10.900" fill="#e2430f"/>
</g>
<g transform="translate(1382.8 408.7)">
<path d="M0 0C4 -12 14 -34 27 -41A15.500 13 -35 0 1 48 -22C40 -14 14 -2 0 0Z" fill="url(#shg)" filter="url(#bl)"/>
<path d="M0 0L-23.200 -45.900A26 26 0 0 1 0 -83.600Z" fill="#6f6f6f"/>
<path d="M0 0L23.200 -45.900A26 26 0 0 0 0 -83.600Z" fill="#858585"/>
<circle cx="0" cy="-57.600" r="17.200" fill="#fbfbfb"/><path d="M0 -74.800A17.200 17.200 0 0 0 0 -40.400Z" fill="#e6e6e6"/>
<circle cx="0" cy="-57.600" r="10.900" fill="#71c60a"/>
</g>
<g transform="translate(1617.0 396.4)">
<path d="M0 0C4 -12 14 -34 27 -41A15.500 13 -35 0 1 48 -22C40 -14 14 -2 0 0Z" fill="url(#shg)" filter="url(#bl)"/>
<path d="M0 0L-23.200 -45.900A26 26 0 0 1 0 -83.600Z" fill="#0a7ad8"/>
<path d="M0 0L23.200 -45.900A26 26 0 0 0 0 -83.600Z" fill="#0b90f7"/>
<circle cx="0" cy="-57.600" r="17.200" fill="#fbfbfb"/><path d="M0 -74.800A17.200 17.200 0 0 0 0 -40.400Z" fill="#e6e6e6"/>
<circle cx="0" cy="-57.600" r="10.900" fill="#e2430f"/>
</g>
<g transform="translate(1994.7 400.5)">
<path d="M0 0C4 -12 14 -34 27 -41A15.500 13 -35 0 1 48 -22C40 -14 14 -2 0 0Z" fill="url(#shg)" filter="url(#bl)"/>
<path d="M0 0L-23.200 -45.900A26 26 0 0 1 0 -83.600Z" fill="#0a7ad8"/>
<path d="M0 0L23.200 -45.900A26 26 0 0 0 0 -83.600Z" fill="#0b90f7"/>
<circle cx="0" cy="-57.600" r="17.200" fill="#fbfbfb"/><path d="M0 -74.800A17.200 17.200 0 0 0 0 -40.400Z" fill="#e6e6e6"/>
<circle cx="0" cy="-57.600" r="10.900" fill="#3f4cc4"/>
</g>
<g transform="translate(2087.7 509.5)">
<path d="M0 0C4 -12 14 -34 27 -41A15.500 13 -35 0 1 48 -22C40 -14 14 -2 0 0Z" fill="url(#shg)" filter="url(#bl)"/>
<path d="M0 0L-23.200 -45.900A26 26 0 0 1 0 -83.600Z" fill="#0a7ad8"/>
<path d="M0 0L23.200 -45.900A26 26 0 0 0 0 -83.600Z" fill="#0b90f7"/>
<circle cx="0" cy="-57.600" r="17.200" fill="#fbfbfb"/><path d="M0 -74.800A17.200 17.200 0 0 0 0 -40.400Z" fill="#e6e6e6"/>
<circle cx="0" cy="-57.600" r="10.900" fill="#b3b3b3"/>
</g>
<g transform="translate(1614.9 765.5)">
<path d="M0 0C4 -12 14 -34 27 -41A15.500 13 -35 0 1 48 -22C40 -14 14 -2 0 0Z" fill="url(#shg)" filter="url(#bl)"/>
<path d="M0 0L-23.200 -45.900A26 26 0 0 1 0 -83.600Z" fill="#0a7ad8"/>
<path d="M0 0L23.200 -45.900A26 26 0 0 0 0 -83.600Z" fill="#0b90f7"/>
<circle cx="0" cy="-57.600" r="17.200" fill="#fbfbfb"/><path d="M0 -74.800A17.200 17.200 0 0 0 0 -40.400Z" fill="#e6e6e6"/>
<circle cx="0" cy="-57.600" r="10.900" fill="#e2430f"/>
</g>
<g transform="translate(1654.0 850.5)">
<path d="M0 0C4 -12 14 -34 27 -41A15.500 13 -35 0 1 48 -22C40 -14 14 -2 0 0Z" fill="url(#shg)" filter="url(#bl)"/>
<path d="M0 0L-23.200 -45.900A26 26 0 0 1 0 -83.600Z" fill="#6f6f6f"/>
<path d="M0 0L23.200 -45.900A26 26 0 0 0 0 -83.600Z" fill="#858585"/>
<circle cx="0" cy="-57.600" r="17.200" fill="#fbfbfb"/><path d="M0 -74.800A17.200 17.200 0 0 0 0 -40.400Z" fill="#e6e6e6"/>
<circle cx="0" cy="-57.600" r="10.900" fill="#71c60a"/>
</g>
<g transform="translate(1826.0 844.4)">
<path d="M0 0C4 -12 14 -34 27 -41A15.500 13 -35 0 1 48 -22C40 -14 14 -2 0 0Z" fill="url(#shg)" filter="url(#bl)"/>
<path d="M0 0L-23.200 -45.900A26 26 0 0 1 0 -83.600Z" fill="#0a7ad8"/>
<path d="M0 0L23.200 -45.900A26 26 0 0 0 0 -83.600Z" fill="#0b90f7"/>
<circle cx="0" cy="-57.600" r="17.200" fill="#fbfbfb"/><path d="M0 -74.800A17.200 17.200 0 0 0 0 -40.400Z" fill="#e6e6e6"/>
<circle cx="0" cy="-57.600" r="10.900" fill="#b3b3b3"/>
</g>
<g transform="translate(826.0 897.8)">
<path d="M0 0C4 -12 14 -34 27 -41A15.500 13 -35 0 1 48 -22C40 -14 14 -2 0 0Z" fill="url(#shg)" filter="url(#bl)"/>
<path d="M0 0L-23.200 -45.900A26 26 0 0 1 0 -83.600Z" fill="#6f6f6f"/>
<path d="M0 0L23.200 -45.900A26 26 0 0 0 0 -83.600Z" fill="#858585"/>
<circle cx="0" cy="-57.600" r="17.200" fill="#fbfbfb"/><path d="M0 -74.800A17.200 17.200 0 0 0 0 -40.400Z" fill="#e6e6e6"/>
<circle cx="0" cy="-57.600" r="10.900" fill="#3451c4"/>
</g>
<g transform="translate(1322.0 862.9)">
<path d="M0 0C4 -12 14 -34 27 -41A15.500 13 -35 0 1 48 -22C40 -14 14 -2 0 0Z" fill="url(#shg)" filter="url(#bl)"/>
<path d="M0 0L-23.200 -45.900A26 26 0 0 1 0 -83.600Z" fill="#6f6f6f"/>
<path d="M0 0L23.200 -45.900A26 26 0 0 0 0 -83.600Z" fill="#858585"/>
<circle cx="0" cy="-57.600" r="17.200" fill="#fbfbfb"/><path d="M0 -74.800A17.200 17.200 0 0 0 0 -40.400Z" fill="#e6e6e6"/>
<circle cx="0" cy="-57.600" r="10.900" fill="#69695f"/>
</g>
<g transform="translate(943.0 1589.9)">
<path d="M0 0C4 -12 14 -34 27 -41A15.500 13 -35 0 1 48 -22C40 -14 14 -2 0 0Z" fill="url(#shg)" filter="url(#bl)"/>
<path d="M0 0L-23.200 -45.900A26 26 0 0 1 0 -83.600Z" fill="#0a7ad8"/>
<path d="M0 0L23.200 -45.900A26 26 0 0 0 0 -83.600Z" fill="#0b90f7"/>
<circle cx="0" cy="-57.600" r="17.200" fill="#fbfbfb"/><path d="M0 -74.800A17.200 17.200 0 0 0 0 -40.400Z" fill="#e6e6e6"/>
<circle cx="0" cy="-57.600" r="10.900" fill="#e2430f"/>
</g>
<g transform="translate(1819.0 1593.2)">
<path d="M0 0C4 -12 14 -34 27 -41A15.500 13 -35 0 1 48 -22C40 -14 14 -2 0 0Z" fill="url(#shg)" filter="url(#bl)"/>
<path d="M0 0L-23.200 -45.900A26 26 0 0 1 0 -83.600Z" fill="#6f6f6f"/>
<path d="M0 0L23.200 -45.900A26 26 0 0 0 0 -83.600Z" fill="#858585"/>
<circle cx="0" cy="-57.600" r="17.200" fill="#fbfbfb"/><path d="M0 -74.800A17.200 17.200 0 0 0 0 -40.400Z" fill="#e6e6e6"/>
<circle cx="0" cy="-57.600" r="10.900" fill="#e2430f"/>
</g>
<path d="M490.5 246.0L490.5 1806.0" stroke="#222" stroke-width="1.6"/></svg>
<div class="a" style="left:480px;top:244px;width:2px;height:1562px;background:#c5d0dc"></div><div class="a" style="left:482px;top:244px;width:2px;height:1562px;background:#f0f4f8"></div>
<div class="a tb" style="left:508.300px;top:268.200px;width:429.400px;height:78.600px"></div>
<svg class="a" style="left:527.6px;top:288.0px" width="40" height="40" viewBox="0 0 40 40" stroke="#111" stroke-width="3.400" fill="none" stroke-linecap="round" stroke-linejoin="round"><path d="M20 8.500v23M8.500 20h23" stroke-width="4.300"/></svg>
<svg class="a" style="left:595.4px;top:288.0px" width="40" height="40" viewBox="0 0 40 40" stroke="#111" stroke-width="3.400" fill="none" stroke-linecap="round" stroke-linejoin="round"><path d="M8.500 20h23" stroke-width="4.300"/></svg>
<div class="a" style="left:654px;top:288px;width:2px;height:40px;background:#c3cad5"></div>
<svg class="a" style="left:673.8px;top:288.0px" width="40" height="40" viewBox="0 0 40 40" stroke="#111" stroke-width="3.400" fill="none" stroke-linecap="round" stroke-linejoin="round"><path d="M3.500 20C7 12.500 13 8.500 20 8.500S33 12.500 36.500 20C33 27.500 27 31.500 20 31.500S7 27.500 3.500 20z" stroke-width="3.600"/><circle cx="20" cy="20" r="5.300" stroke-width="3.400"/><circle cx="18.200" cy="18.200" r="2.300" fill="#111" stroke="none"/></svg>
<svg class="a" style="left:741.7px;top:288.0px" width="40" height="40" viewBox="0 0 40 40" stroke="#111" stroke-width="3.400" fill="none" stroke-linecap="round" stroke-linejoin="round"><path d="M7.500 15V7.500H15M25 7.500h7.500V15M32.500 25v7.500H25M15 32.500H7.500V25" stroke-width="3.900"/></svg>
<svg class="a" style="left:810.0px;top:288.0px" width="40" height="40" viewBox="0 0 40 40" stroke="#111" stroke-width="3.400" fill="none" stroke-linecap="round" stroke-linejoin="round"><path d="M5 5l10 10M15 7.500V15H7.500M35 5L25 15M25 7.500V15h7.500M5 35l10-10M15 32.500V25H7.500M35 35L25 25M25 32.500V25h7.500" stroke-width="3.700" stroke-linecap="round" stroke-linejoin="miter"/></svg>
<svg class="a" style="left:877.8px;top:288.0px" width="40" height="40" viewBox="0 0 40 40" stroke="#111" stroke-width="3.400" fill="none" stroke-linecap="round" stroke-linejoin="round"><circle cx="20" cy="20" r="14.300" stroke-width="3.700"/><path d="M17.500 18.500h3v8M17 26.500h7" stroke-width="2.600" stroke-linecap="butt"/><circle cx="20" cy="13.500" r="1.900" fill="#111" stroke="none"/></svg>
<div class="a tb" style="left:508.500px;top:1702.500px;width:471px;height:78px;border-radius:14px;box-shadow:0 5px 14px rgba(40,60,90,.28)"></div>
<div class="a" style="left:518.500px;top:1712px;width:60px;height:60px;background:#d3e7f5;border-radius:7px"></div>
<svg class="a" style="left:527.9px;top:1722.0px" width="40" height="40" viewBox="0 0 40 40" stroke="#111" stroke-width="3.400" fill="none" stroke-linecap="round" stroke-linejoin="round"><path d="M11.500 7.500V31l7-6.500 4.800 10.300 3.400-1.600-4.800-10.200 8.600-.5z" fill="none" stroke-width="3.300" stroke-linejoin="miter"/></svg>
<svg class="a" style="left:595.8px;top:1722.0px" width="40" height="40" viewBox="0 0 40 40" stroke="#111" stroke-width="3.400" fill="none" stroke-linecap="round" stroke-linejoin="round"><path d="M6 34.500c1-5 2.500-9 5-11.500L26 8c2-2 5-2 7 0s2 5 0 7L18 30c-2.500 2.500-7 4-12 4.500z" stroke-width="2.800"/><path d="M24.500 9.500l6 6M27.500 4.500l8 8" stroke-width="2.800"/><path d="M27 5.500l7.500 7.500 2-2.500c1.500-2 1-4.500-.5-6s-4.500-2-6.500-.5z" fill="#111" stroke="none"/></svg>
<svg class="a" style="left:658.8px;top:1739.5px" width="14.5" height="8" viewBox="0 0 20 10.500"><path d="M1.500 0.500h17c.9 0 1.300 1 .7 1.700l-8.100 7.700c-.6.600-1.600.600-2.200 0L.8 2.200C.2 1.500.6.500 1.500.500z" fill="#111"/></svg>
<svg class="a" style="left:704.0px;top:1722.0px" width="40" height="40" viewBox="0 0 40 40" stroke="#111" stroke-width="3.400" fill="none" stroke-linecap="round" stroke-linejoin="round"><rect x="5" y="9" width="30" height="22" rx="2.500" stroke-width="3.200"/></svg>
<svg class="a" style="left:766.1px;top:1739.5px" width="14.5" height="8" viewBox="0 0 20 10.500"><path d="M1.500 0.500h17c.9 0 1.300 1 .7 1.700l-8.100 7.700c-.6.600-1.600.600-2.200 0L.8 2.200C.2 1.500.6.500 1.500.500z" fill="#111"/></svg>
<span class="t" style="left:819px;top:1719px;font-family:'DejaVu Serif',serif;font-weight:400;font-size:39px;line-height:46px;color:#111;-webkit-text-stroke:0.700px #111">T</span>
<svg class="a" style="left:879.8px;top:1722.0px" width="40" height="40" viewBox="0 0 40 40" stroke="#111" stroke-width="3.400" fill="none" stroke-linecap="round" stroke-linejoin="round"><g transform="rotate(-35 20 20)" stroke="#b5b5b5" stroke-width="2.600"><rect x="4" y="13" width="32" height="14" rx="2.500"/><path d="M10 13v5M15 13v7M20 13v5M25 13v7M30 13v5" stroke-width="2"/></g></svg>
<svg class="a" style="left:942.8px;top:1739.5px" width="14.5" height="8" viewBox="0 0 20 10.500"><path d="M1.500 0.500h17c.9 0 1.300 1 .7 1.700l-8.100 7.700c-.6.600-1.600.600-2.200 0L.8 2.200C.2 1.500.6.500 1.500.500z" fill="#b5b5b5"/></svg>
<div class="a" style="left:478px;top:980.500px;width:51.500px;height:89px;background:#edf1f5;border:2px solid #b9c6dc;border-left:none;border-radius:0 12px 12px 0"></div>
<svg class="a" style="left:494px;top:1008px" width="24" height="34" viewBox="0 0 24 34"><path d="M6 5l12 12L6 29" fill="none" stroke="#111" stroke-width="2.800" stroke-linecap="round" stroke-linejoin="round"/></svg>
<div class="a" style="left:480px;top:0;width:2120px;height:122px;background:#0263c9"></div>
<span class="t" style="left:514.3px;top:47.4px;font-size:28px;line-height:28px;font-weight:700;color:#fff;letter-spacing:-0.747px;">Project</span>
<div class="a" style="left:629px;top:30px;width:503px;height:60px;background:#175291;border-radius:5px"></div>
<span class="t" style="left:649.0px;top:47.4px;font-size:28px;line-height:28px;font-weight:400;color:#fff;letter-spacing:-0.191px;">Office Complex 11 &gt; Ground Floor</span>
<svg class="a" style="left:1090.0px;top:56.8px" width="20" height="10.5" viewBox="0 0 20 10.500"><path d="M1.500 0.500h17c.9 0 1.300 1 .7 1.700l-8.100 7.700c-.6.600-1.600.600-2.200 0L.8 2.200C.2 1.500.6.500 1.500.500z" fill="#fff"/></svg>
<svg class="a" style="left:1172px;top:43px" width="36" height="36" viewBox="0 0 24 24"><path fill="#fff" d="M19.140 12.940c.04-.3.06-.61.06-.94 0-.32-.02-.64-.07-.94l2.030-1.580a.49.49 0 0 0 .12-.61l-1.920-3.320a.488.488 0 0 0-.59-.22l-2.390.96c-.5-.38-1.030-.7-1.620-.94l-.36-2.540a.484.484 0 0 0-.48-.41h-3.840c-.24 0-.43.17-.47.41l-.36 2.540c-.59.24-1.130.57-1.620.94l-2.390-.96c-.22-.08-.47 0-.59.22L2.740 8.870c-.12.21-.08.47.12.61l2.030 1.580c-.05.3-.09.63-.09.94s.02.640.07.940l-2.030 1.580a.49.49 0 0 0-.12.610l1.920 3.320c.12.220.37.290.59.220l2.390-.96c.5.380 1.030.700 1.620.940l.36 2.540c.05.240.24.410.48.410h3.840c.24 0 .44-.17.470-.41l.36-2.540c.59-.24 1.130-.56 1.620-.94l2.390.96c.22.08.47 0 .59-.22l1.920-3.320c.12-.22.07-.47-.12-.61l-2.010-1.580zM12 15.600c-1.980 0-3.600-1.620-3.600-3.600s1.620-3.600 3.600-3.600 3.600 1.620 3.600 3.600-1.620 3.600-3.600 3.600z"/></svg>
<span class="t" style="left:1260.6px;top:47.4px;font-size:28px;line-height:28px;font-weight:700;color:#fff;letter-spacing:-0.700px;">Form</span>
<div class="a" style="left:1349px;top:30px;width:600px;height:60px;background:#14507f;border-radius:5px"></div>
<span class="t" style="left:1369.0px;top:47.4px;font-size:28px;line-height:28px;font-weight:700;color:#fff;letter-spacing:-0.377px;">All forms in project</span>
<svg class="a" style="left:1910.6px;top:56.8px" width="20" height="10.5" viewBox="0 0 20 10.500"><path d="M1.500 0.500h17c.9 0 1.300 1 .7 1.700l-8.100 7.700c-.6.600-1.600.600-2.200 0L.8 2.200C.2 1.500.6.500 1.500.500z" fill="#fff"/></svg>
<div class="a" style="left:480px;top:122px;width:2120px;height:120px;background:#edf1f5;border-bottom:2px solid #b9c5d8"></div>
<div class="a" style="left:510px;top:152px;width:268px;height:60px;background:#64b30f;border-radius:9px"></div>
<svg class="a" style="left:540px;top:168px" width="28" height="28" viewBox="0 0 28 28"><path d="M14 2v24M2 14h24" stroke="#fff" stroke-width="3.400" stroke-linecap="round"/></svg>
<span class="t" style="left:582.8px;top:168.8px;font-size:28px;line-height:28px;font-weight:400;color:#fff;letter-spacing:-0.058px;">Create Ticket</span>
<div class="a" style="left:808px;top:152px;width:2px;height:60px;background:#c3cad5"></div>
<span class="t" style="left:839.0px;top:168.8px;font-size:28px;line-height:28px;font-weight:700;color:#111;letter-spacing:0.250px;">View</span>
<div class="a box" style="left:924.5px;top:152.5px;width:207px;height:59px"></div>
<svg class="a" style="left:955px;top:165px" width="38" height="34" viewBox="0 0 38 34"><path fill="#111" d="M1 12.500 9.500 9v21L1 33.500zM11.500 9.200l3 1.100c.8 3 3 6.300 4.500 8.200 1.500-1.900 3.700-5.200 4.500-8.200l3-1.100v21.300l-15 2.500zM28.500 9l8.500-3.500v21L28.500 30zM19 0c3.300 0 6 2.700 6 6 0 3.500-4.200 8.600-6 10.500C17.200 14.600 13 9.500 13 6c0-3.300 2.700-6 6-6zm0 3.800a2.200 2.200 0 1 0 0 4.400 2.200 2.200 0 0 0 0-4.400z"/></svg>
<span class="t" style="left:1007.7px;top:168.8px;font-size:28px;line-height:28px;font-weight:400;color:#111;letter-spacing:-1.111px;">Plan</span>
<svg class="a" style="left:1081.0px;top:178.2px" width="20" height="10.5" viewBox="0 0 20 10.500"><path d="M1.500 0.500h17c.9 0 1.300 1 .7 1.700l-8.100 7.700c-.6.600-1.600.600-2.200 0L.8 2.200C.2 1.500.6.500 1.500.500z" fill="#111"/></svg>
<div class="a" style="left:1163px;top:152px;width:2px;height:60px;background:#c3cad5"></div>
<div class="a box" style="left:1195.6px;top:152.5px;width:457px;height:59px"></div>
<svg class="a" style="left:1213px;top:167px" width="32" height="32" viewBox="0 0 32 32"><circle cx="13.500" cy="13" r="9.300" fill="none" stroke="#757575" stroke-width="3"/><path d="M20.500 20l8 8" stroke="#757575" stroke-width="3.400" stroke-linecap="round"/></svg>
<span class="t" style="left:1257.6px;top:168.8px;font-size:28px;line-height:28px;font-weight:400;color:#757575;letter-spacing:-0.461px;">Search tickets</span>
<div class="a box" style="left:1676.7px;top:152.5px;width:57px;height:59px"></div>
<svg class="a" style="left:1688px;top:166px" width="36" height="32" viewBox="0 0 36 32"><path d="M2.500 1.500h31c1.200 0 1.900 1.400 1.100 2.400L22 18.500v10.700c0 1.100-1.200 1.800-2.100 1.200l-4.500-2.900c-.5-.3-.8-.9-.8-1.500v-7.500L1.400 3.900C.6 2.900 1.300 1.500 2.500 1.500z" fill="#111"/></svg>
<div class="a box" style="left:1750.5px;top:152.5px;width:252px;height:59px"></div>
<span class="t" style="left:1782.0px;top:168.8px;font-size:28px;line-height:28px;font-weight:400;color:#111;letter-spacing:-0.390px;">Saved filters</span>
<svg class="a" style="left:1953.0px;top:178.2px" width="20" height="10.5" viewBox="0 0 20 10.500"><path d="M1.500 0.500h17c.9 0 1.300 1 .7 1.700l-8.100 7.700c-.6.600-1.600.600-2.200 0L.8 2.200C.2 1.500.6.500 1.500.500z" fill="#111"/></svg>
<span class="t" style="left:2031.0px;top:168.8px;font-size:28px;line-height:28px;font-weight:400;color:#111;letter-spacing:-0.158px;">18 tickets</span>
<div class="a" style="left:2594px;top:169px;width:30px;height:26px;border:2px solid #555;border-radius:5px"></div>
<div id="sb"></div><div id="sbstrip"></div>
<svg class="a" style="left:21px;top:29px" width="68" height="68" viewBox="0 0 68 68">
<defs><clipPath id="lc"><rect x="0" y="0" width="68" height="68" rx="6"/></clipPath></defs>
<g clip-path="url(#lc)"><rect width="68" height="68" fill="#0a66d0"/><ellipse cx="0" cy="23.1" rx="63.0" ry="54.3" fill="#fff"/><ellipse cx="0" cy="16.4" rx="58.0" ry="41.5" fill="#0a66d0"/><ellipse cx="0" cy="13" rx="53.0" ry="42.6" fill="#fff"/><ellipse cx="0" cy="9" rx="48.1" ry="37.2" fill="#0a66d0"/><ellipse cx="0" cy="5" rx="44.4" ry="38.4" fill="#fff"/><ellipse cx="0" cy="1" rx="39.2" ry="32.5" fill="#0a66d0"/><ellipse cx="0" cy="-3" rx="34.6" ry="32.8" fill="#fff"/><ellipse cx="0" cy="-7" rx="31.2" ry="29.2" fill="#0a66d0"/><ellipse cx="0" cy="-11" rx="27.6" ry="27.1" fill="#fff"/><ellipse cx="0" cy="-15" rx="24.9" ry="24.6" fill="#0a66d0"/></g></svg>
<span class="t" style="left:111.0px;top:30.2px;font-size:28px;line-height:28px;font-weight:400;color:#f4f4f4;letter-spacing:-0.213px;">Robert Hammer</span>
<span class="t" style="left:111.0px;top:70.0px;font-size:28px;line-height:28px;font-weight:700;color:#2b8fd6;letter-spacing:-1.322px;">PlanRadar</span>
<svg class="a" style="left:425px;top:45px" width="24" height="32" viewBox="0 0 24 32"><path d="M6 5 L17 15.5 L6 26" fill="none" stroke="#8d929c" stroke-width="3.6" stroke-linecap="round" stroke-linejoin="round"/></svg>
<div class="a" style="left:16px;top:240px;width:442px;height:80px;background:#1f62b0;border-radius:7px"></div>
<span class="t" style="left:100.5px;top:171.1px;font-size:28px;line-height:28px;font-weight:700;color:#fff;letter-spacing:-1.306px;">Dashboard</span>
<svg class="a" style="left:32px;top:160.0px" width="48" height="48" viewBox="0 0 48 48" fill="none" stroke="#fff" stroke-width="3.300" stroke-linecap="round" stroke-linejoin="round"><circle cx="24" cy="24" r="14.600"/><path d="M24 13.500V27" stroke-width="3.600"/><circle cx="24" cy="29.300" r="3" fill="#fff" stroke="none"/><g fill="#fff" stroke="none"><circle cx="18" cy="19.200" r="1.900"/><circle cx="30" cy="19.200" r="1.900"/><circle cx="14.800" cy="25" r="1.900"/><circle cx="33.200" cy="25" r="1.900"/></g></svg>
<span class="t" style="left:100.5px;top:267.1px;font-size:28px;line-height:28px;font-weight:700;color:#fff;letter-spacing:-1.028px;">Tickets</span>
<svg class="a" style="left:32px;top:256.0px" width="48" height="48" viewBox="0 0 48 48" fill="none" stroke="#fff" stroke-width="3.300" stroke-linecap="round" stroke-linejoin="round"><path d="M9 10.5h11.2c.9 0 1.8.4 2.4 1l11 11c1.300 1.300 1.300 3.400 0 4.700l-8.400 8.400c-1.300 1.300-3.400 1.300-4.700 0l-11-11c-.6-.6-1-1.500-1-2.400V12c0-.8.7-1.500 1.500-1.500z" fill="#fff" stroke="#fff" stroke-width="1.500"/><circle cx="14.200" cy="16.200" r="2.200" fill="#1f62b0" stroke="none"/><path d="M27.500 10.500l11.800 11.800c1.600 1.600 1.600 4.200 0 5.800L31 36.800" stroke-width="2.800"/></svg>
<span class="t" style="left:100.5px;top:363.1px;font-size:28px;line-height:28px;font-weight:700;color:#fff;letter-spacing:-0.832px;">Project reports</span>
<svg class="a" style="left:32px;top:352.0px" width="48" height="48" viewBox="0 0 48 48" fill="none" stroke="#fff" stroke-width="3.300" stroke-linecap="round" stroke-linejoin="round"><path d="M30 9H12.500c-1.700 0-3 1.300-3 3v25c0 1.700 1.300 3 3 3H27.500c1.700 0 3-1.300 3-3v-4.500M30 9v0" /><path d="M9.500 12c0-1.700 1.300-3 3-3h11l6.500 6.500" /><path d="M13.500 33l3.200-4.500 2 5.500 2.200-3.500 1.500 1.800h3" stroke-width="2.200"/><path d="M26.500 28.500l1-5 11.500-11.500c1-1 2.700-1 3.700 0s1 2.700 0 3.700L31.300 27.300z" fill="#fff" stroke-width="1.500"/></svg>
<span class="t" style="left:100.5px;top:459.1px;font-size:28px;line-height:28px;font-weight:700;color:#fff;letter-spacing:-1.498px;">Schedule</span>
<svg class="a" style="left:32px;top:448.0px" width="48" height="48" viewBox="0 0 48 48" fill="none" stroke="#fff" stroke-width="3.300" stroke-linecap="round" stroke-linejoin="round"><path d="M9.500 11.500v21.500c0 1.700 1.300 3 3 3h27.500"/><path d="M17.500 17.400h7.500M22 23.400h9M30.500 29.800h6.500"/></svg>
<span class="t" style="left:100.5px;top:555.1px;font-size:28px;line-height:28px;font-weight:700;color:#fff;letter-spacing:-0.657px;">SiteView</span>
<svg class="a" style="left:32px;top:544.0px" width="48" height="48" viewBox="0 0 48 48" fill="none" stroke="#fff" stroke-width="3.300" stroke-linecap="round" stroke-linejoin="round"><g transform="translate(24 24.500) scale(.960 .870) translate(-24 -24)" stroke-width="3.700"><circle cx="24" cy="10" r="3.300"/><path d="M18.700 23.500c0-3.500 2.300-6 5.300-6s5.300 2.500 5.300 6c0 2.200-1.300 3.400-2.800 4v6.500h-5v-6.500c-1.500-.6-2.800-1.800-2.800-4z"/><path d="M17 29.500c-4.700 1-7.800 3-7.800 5.300 0 3.400 6.600 5.700 14.800 5.700s14.800-2.300 14.800-5.700c0-2.300-3.100-4.300-7.800-5.300"/></g></svg>
<span class="t" style="left:100.5px;top:651.1px;font-size:28px;line-height:28px;font-weight:700;color:#fff;letter-spacing:-1.108px;">Documents</span>
<svg class="a" style="left:32px;top:640.0px" width="48" height="48" viewBox="0 0 48 48" fill="none" stroke="#fff" stroke-width="3.300" stroke-linecap="round" stroke-linejoin="round"><path d="M9.500 15c0-1.700 1.300-3 3-3h7.300c.9 0 1.700.4 2.300 1l2.300 2.300c.6.600 1.400 1 2.300 1H35.500c1.700 0 3 1.300 3 3V33c0 1.700-1.300 3-3 3h-23c-1.700 0-3-1.300-3-3z"/></svg>
<span class="t" style="left:100.5px;top:747.1px;font-size:28px;line-height:28px;font-weight:700;color:#fff;letter-spacing:-1.162px;">Projects</span>
<svg class="a" style="left:32px;top:736.0px" width="48" height="48" viewBox="0 0 48 48" fill="none" stroke="#fff" stroke-width="3.300" stroke-linecap="round" stroke-linejoin="round"><path d="M5.500 39V19c0-1.700 1.300-3 3-3h6.500c1.700 0 3 1.300 3 3v20zM18 39V11.500c0-1.700 1.300-3 3-3h8c1.700 0 3 1.300 3 3V21h7c1.700 0 3 1.300 3 3v15z"/><path d="M9.500 11.500v4.500M14 9.500v6.500"/><path d="M10 23h3.500M10 28.500h3.500M10 34h3.500M23.500 15.500h3M23.500 21.500h3M23.500 27.500h3M33.500 27.500h3M33.500 33.500h3M23.500 33.500h3" stroke-width="3.400" stroke-linecap="butt"/></svg>
<span class="t" style="left:100.5px;top:843.1px;font-size:28px;line-height:28px;font-weight:700;color:#fff;letter-spacing:-1.584px;">Forms and Lists</span>
<svg class="a" style="left:32px;top:832.0px" width="48" height="48" viewBox="0 0 48 48" fill="none" stroke="#fff" stroke-width="3.300" stroke-linecap="round" stroke-linejoin="round"><path d="M11 41V10.500"/><path d="M11 12c4-2.200 8-2.200 12-.5s9 2 13.500-.2c.6-.3 1.300.1 1.300.8v17.500c0 .6-.3 1.100-.8 1.300-4.500 2-8.500 1.700-13-.1s-8.500-1.700-13 .4"/></svg>
<svg class="a" style="left:407px;top:840.0px" width="24" height="32" viewBox="0 0 24 32"><path d="M6 5.5 L17 16 L6 26.5" fill="none" stroke="#8d929c" stroke-width="3.6" stroke-linecap="round" stroke-linejoin="round"/></svg>
<span class="t" style="left:100.5px;top:939.1px;font-size:28px;line-height:28px;font-weight:700;color:#fff;letter-spacing:-0.846px;">User Management</span>
<svg class="a" style="left:32px;top:928.0px" width="48" height="48" viewBox="0 0 48 48" fill="none" stroke="#fff" stroke-width="3.300" stroke-linecap="round" stroke-linejoin="round"><circle cx="24" cy="15" r="6.300"/><path d="M11 38c0-6.500 5.500-11 13-11s13 4.500 13 11c0 .8-.7 1.500-1.500 1.500h-23c-.8 0-1.500-.7-1.500-1.500z"/></svg>
<svg class="a" style="left:407px;top:936.0px" width="24" height="32" viewBox="0 0 24 32"><path d="M6 5.5 L17 16 L6 26.5" fill="none" stroke="#8d929c" stroke-width="3.6" stroke-linecap="round" stroke-linejoin="round"/></svg>
<span class="t" style="left:100.5px;top:1035.1px;font-size:28px;line-height:28px;font-weight:700;color:#fff;letter-spacing:-1.120px;">Statistics</span>
<svg class="a" style="left:32px;top:1024.0px" width="48" height="48" viewBox="0 0 48 48" fill="none" stroke="#fff" stroke-width="3.300" stroke-linecap="round" stroke-linejoin="round"><path d="M21.500 11.300C14.300 12.200 8.800 18.300 8.800 25.700c0 8 6.500 14.500 14.500 14.500 3.900 0 7.400-1.500 10-4L21.500 26z"/><path d="M26.500 8.500v13h13c0-7.200-5.800-13-13-13z"/><path d="M29.500 26.500h10c0 3.200-1.100 6.200-3 8.500z" fill="#fff"/></svg>
<span class="t" style="left:100.5px;top:1131.1px;font-size:28px;line-height:28px;font-weight:700;color:#fff;letter-spacing:-1.191px;">Templates</span>
<svg class="a" style="left:32px;top:1120.0px" width="48" height="48" viewBox="0 0 48 48" fill="none" stroke="#fff" stroke-width="3.300" stroke-linecap="round" stroke-linejoin="round"><path d="M18.500 12h-3.500c-1.700 0-3 1.300-3 3v23c0 1.700 1.300 3 3 3h18c1.700 0 3-1.300 3-3V15c0-1.700-1.300-3-3-3h-3.500"/><path d="M18.500 15.500v-4.500c0-.8.700-1.500 1.500-1.500h1c.3-1.500 1.500-2.500 3-2.500s2.700 1 3 2.500h1c.8 0 1.500.7 1.500 1.500v4.500z" fill="#fff" stroke-width="1.500"/></svg>
<svg class="a" style="left:407px;top:1128.0px" width="24" height="32" viewBox="0 0 24 32"><path d="M6 5.5 L17 16 L6 26.5" fill="none" stroke="#8d929c" stroke-width="3.6" stroke-linecap="round" stroke-linejoin="round"/></svg>
<span class="t" style="left:100.5px;top:1227.1px;font-size:28px;line-height:28px;font-weight:700;color:#fff;letter-spacing:-1.370px;">Settings</span>
<svg class="a" style="left:32px;top:1216.0px" width="48" height="48" viewBox="0 0 48 48" fill="none" stroke="#fff" stroke-width="3.300" stroke-linecap="round" stroke-linejoin="round"><g transform="translate(14.500 17)"><path d="M-1.800 -9.500h3.600l.6 2.600 2.300 1 2.300-1.400 2.500 2.500-1.400 2.300 1 2.300 2.600.6v3.600l-2.600.6-1 2.300 1.400 2.300-2.500 2.500-2.300-1.400-2.300 1-.6 2.600h-3.600l-.6-2.600-2.300-1-2.300 1.400-2.500-2.500 1.400-2.300-1-2.300-2.600-.6v-3.600l2.600-.6 1-2.300-1.400-2.300 2.500-2.500 2.300 1.400 2.300-1z" transform="scale(.82)" stroke-width="3.100"/><circle r="2.800" stroke-width="2.400"/></g><g transform="translate(33.500 32.500)"><path d="M-1.800 -9.500h3.600l.6 2.600 2.300 1 2.300-1.400 2.500 2.500-1.400 2.300 1 2.300 2.600.6v3.600l-2.600.6-1 2.300 1.400 2.300-2.500 2.500-2.300-1.400-2.300 1-.6 2.600h-3.600l-.6-2.600-2.300-1-2.300 1.400-2.500-2.500 1.400-2.300-1-2.300-2.600-.6v-3.600l2.600-.6 1-2.300-1.400-2.300 2.500-2.500 2.300 1.400 2.300-1z" transform="scale(.82)" stroke-width="3.100"/><circle r="2.800" stroke-width="2.400"/></g></svg>
<svg class="a" style="left:407px;top:1224.0px" width="24" height="32" viewBox="0 0 24 32"><path d="M6 5.5 L17 16 L6 26.5" fill="none" stroke="#8d929c" stroke-width="3.6" stroke-linecap="round" stroke-linejoin="round"/></svg>
<svg class="a" style="left:44px;top:1740px" width="24" height="32" viewBox="0 0 24 32"><path d="M19 5L7.500 16L19 27" fill="none" stroke="#fff" stroke-width="4" stroke-linecap="round" stroke-linejoin="miter"/></svg>
<span class="t" style="left:88.0px;top:1742.6px;font-size:28px;line-height:28px;font-weight:400;color:#f4f4f4;letter-spacing:-0.494px;">Collapse</span>
<div class="a" style="left:2606px;top:1700px;width:754px;height:106px;box-shadow:0 0 46px 6px rgba(0,0,0,.55)"></div>
<div id="pn"></div>
<svg class="a" style="left:2612px;top:44px" width="36" height="36" viewBox="0 0 36 36"><path d="M4 4l12 14L4 32M17 4l12 14-12 14" fill="none" stroke="#fff" stroke-width="2.200" stroke-linecap="round" stroke-linejoin="round"/></svg>
<span class="t" style="left:2688.7px;top:46.3px;font-size:31px;line-height:31px;font-weight:700;color:#fff;letter-spacing:-0.641px;">Message Centre</span>
<svg class="a" style="left:3168px;top:30px" width="64.500" height="60" viewBox="0 0 64.500 60"><defs><linearGradient id="gi" x1="0" y1="0" x2="0.550" y2="1"><stop offset="0" stop-color="#8fe07a"/><stop offset="0.330" stop-color="#1c9df6"/><stop offset="1" stop-color="#0b62d6"/></linearGradient></defs><rect x="1" y="1" width="62.500" height="58" rx="8" fill="url(#gi)" stroke="#3f8ff6" stroke-width="2"/><path d="M27 30C19 24 14 21 16 16.500C18 12.500 26 13 30 18C34 23 36 26 27 30C19 34 14 38 16 42.500C18 47 26 46.500 30 42" fill="none" stroke="#fff" stroke-width="4.600" stroke-linecap="round"/></svg>
<div class="a oc" style="left:3187.1px;top:32.8px">1</div>
<div class="a" style="left:3252px;top:21px;width:86px;height:85px;border:6px solid #ff8a00;border-radius:10px"></div>
<svg class="a" style="left:3277.400px;top:44.700px" width="31" height="32.700" viewBox="0 0 36 38"><path d="M18 3.500v2.500M18 6c-5.500 0-9.500 4.300-9.500 9.800 0 6.200-1.800 9-3.600 11-.6.700-.1 1.700.8 1.700h24.600c.9 0 1.400-1 .8-1.700-1.800-2-3.600-4.800-3.600-11C27.500 10.300 23.500 6 18 6z" fill="none" stroke="#fff" stroke-width="3.100" stroke-linecap="round" stroke-linejoin="round"/><path d="M14 32.500c.5 1.800 2 3 4 3s3.500-1.200 4-3z" fill="#fff"/></svg>
<div class="a" style="left:2622px;top:136.500px;width:236px;height:75px;background:#313644;border-radius:6px"></div>
<div class="a" style="left:2860px;top:136.500px;width:240px;height:75px;background:#313644;border-radius:6px;box-shadow:0 0 0 1.500px #232733"></div>
<div class="a" style="left:3102px;top:136.500px;width:236px;height:75px;background:#2388c8;border-radius:4px"></div>
<div class="a" style="left:3094.400px;top:129px;width:253px;height:91.300px;border:6px solid #ff8a00;border-radius:11px"></div>
<span class="t" style="left:2696.2px;top:161.3px;font-size:28px;line-height:28px;font-weight:400;color:#e3e5e8;letter-spacing:-0.063px;">Tickets</span>
<span class="t" style="left:2936.0px;top:161.3px;font-size:28px;line-height:28px;font-weight:400;color:#e3e5e8;letter-spacing:-0.859px;">System</span>
<span class="t" style="left:3151.5px;top:161.3px;font-size:28px;line-height:28px;font-weight:400;color:#fff;letter-spacing:-0.225px;">Downloads</span>
<div class="a card" style="left:2624px;top:264.5px;width:711px;height:215px"></div>
<span class="t" style="left:2656.4px;top:303.5px;font-size:23px;line-height:23px;font-weight:700;color:#fff;letter-spacing:-1.130px;">PlanRadar</span>
<span class="t" style="left:3085.6px;top:303.5px;font-size:23px;line-height:23px;font-weight:400;color:#8e929c;letter-spacing:-0.081px;">2025-07-28 02:15 pm</span>
<span class="t" style="left:2656.4px;top:358.2px;font-size:26px;line-height:26px;font-weight:700;color:#fff;letter-spacing:-0.908px;">The plan has been exported including tickets.</span>
<div class="a" style="left:2656.400px;top:407.300px;width:180px;height:45.500px;background:#2388c8;border-radius:7px"></div>
<span class="t" style="left:2673.4px;top:418.8px;font-size:23px;line-height:23px;font-weight:700;color:#fff;letter-spacing:-0.745px;">Download File</span>
<div class="a" style="left:2647.300px;top:396.500px;width:200.700px;height:67px;border:6px solid #ff8a00;border-radius:9px"></div>
<div class="a oc" style="left:2857.5px;top:405.4px">3</div>
<div class="a oc" style="left:3194.7px;top:229.8px">2</div>
<div class="a card" style="left:2624px;top:520.0px;width:711px;height:231.5px"></div>
<span class="t" style="left:2656.4px;top:559.1px;font-size:23px;line-height:23px;font-weight:700;color:#fff;letter-spacing:-1.130px;">PlanRadar</span>
<span class="t" style="left:3085.6px;top:559.1px;font-size:23px;line-height:23px;font-weight:400;color:#8e929c;letter-spacing:-0.081px;">2025-03-26 12:24 pm</span>
<span class="t" style="left:2656.4px;top:614.4px;font-size:26px;line-height:26px;font-weight:700;color:#fff;letter-spacing:-1.068px;">Project Summary is finished.</span>
<div class="a" style="left:3164px;top:660.2px;width:140px;height:59.500px;background:#2388c8;border-radius:8px"></div>
<span class="t" style="left:3202.0px;top:676.5px;font-size:27px;line-height:27px;font-weight:700;color:#fff;letter-spacing:-2.049px;">Show</span>
<div class="a card" style="left:2624px;top:792.3px;width:711px;height:231.5px"></div>
<span class="t" style="left:2656.4px;top:831.4px;font-size:23px;line-height:23px;font-weight:700;color:#fff;letter-spacing:-1.130px;">PlanRadar</span>
<span class="t" style="left:3085.6px;top:831.4px;font-size:23px;line-height:23px;font-weight:400;color:#8e929c;letter-spacing:-0.081px;">2025-03-26 12:24 pm</span>
<span class="t" style="left:2656.4px;top:886.7px;font-size:26px;line-height:26px;font-weight:700;color:#fff;letter-spacing:-1.068px;">Project Summary is finished.</span>
<div class="a" style="left:3164px;top:932.5px;width:140px;height:59.500px;background:#2388c8;border-radius:8px"></div>
<span class="t" style="left:3202.0px;top:948.8px;font-size:27px;line-height:27px;font-weight:700;color:#fff;letter-spacing:-2.049px;">Show</span>
<div class="a card" style="left:2624px;top:1064.6px;width:711px;height:231.5px"></div>
<span class="t" style="left:2656.4px;top:1103.7px;font-size:23px;line-height:23px;font-weight:700;color:#fff;letter-spacing:-1.130px;">PlanRadar</span>
<span class="t" style="left:3087.0px;top:1103.7px;font-size:23px;line-height:23px;font-weight:400;color:#8e929c;letter-spacing:-0.065px;">2025-03-26 11:44 am</span>
<span class="t" style="left:2656.4px;top:1159.0px;font-size:26px;line-height:26px;font-weight:700;color:#fff;letter-spacing:-1.068px;">Project Summary is finished.</span>
<div class="a" style="left:3164px;top:1204.8px;width:140px;height:59.500px;background:#2388c8;border-radius:8px"></div>
<span class="t" style="left:3202.0px;top:1221.1px;font-size:27px;line-height:27px;font-weight:700;color:#fff;letter-spacing:-2.049px;">Show</span>
<div class="a" style="left:2600px;top:1685.500px;width:760px;height:2px;background:#1e222c"></div>
<svg class="a" style="left:2658px;top:1732px" width="26" height="24" viewBox="0 0 26 24"><path d="M3 12.500l6.500 6.500L23 4.500" fill="none" stroke="#3d9fe0" stroke-width="3.600" stroke-linecap="butt"/></svg>
<span class="t" style="left:2688.0px;top:1731.6px;font-size:26.5px;line-height:26.5px;font-weight:400;color:#3d9fe0;letter-spacing:-1.245px;">Mark all as read</span>
<div class="a" style="left:3220px;top:1566px;width:100px;height:100px;border-radius:50%;background:#0263c9;box-shadow:0 2px 10px rgba(0,0,0,.35)"></div>
<span class="t" style="left:3248.500px;top:1575px;font-size:78px;line-height:78px;font-weight:700;color:#fff">?</span>
<div class="a" style="left:0;top:1804px;width:3360px;height:2px;background:rgba(255,255,255,.2)"></div>
<div class="a" style="left:0;top:0;width:2px;height:1804px;background:rgba(255,255,255,.2)"></div>
<svg class="a" style="left:0;top:1784px" width="22" height="22" viewBox="0 0 22 22"><path d="M0 0V22H22A22 22 0 0 1 0 0Z" fill="#1c2917"/><path d="M1 0A21 21 0 0 0 22 21" fill="none" stroke="#4f5562" stroke-width="2"/></svg>
<svg class="a" style="left:3338px;top:1784px" width="22" height="22" viewBox="0 0 22 22"><path d="M22 0V22H0A22 22 0 0 0 22 0Z" fill="#30343c"/><path d="M21 0A21 21 0 0 1 0 21" fill="none" stroke="#4f5562" stroke-width="2"/></svg>
</body></html>
